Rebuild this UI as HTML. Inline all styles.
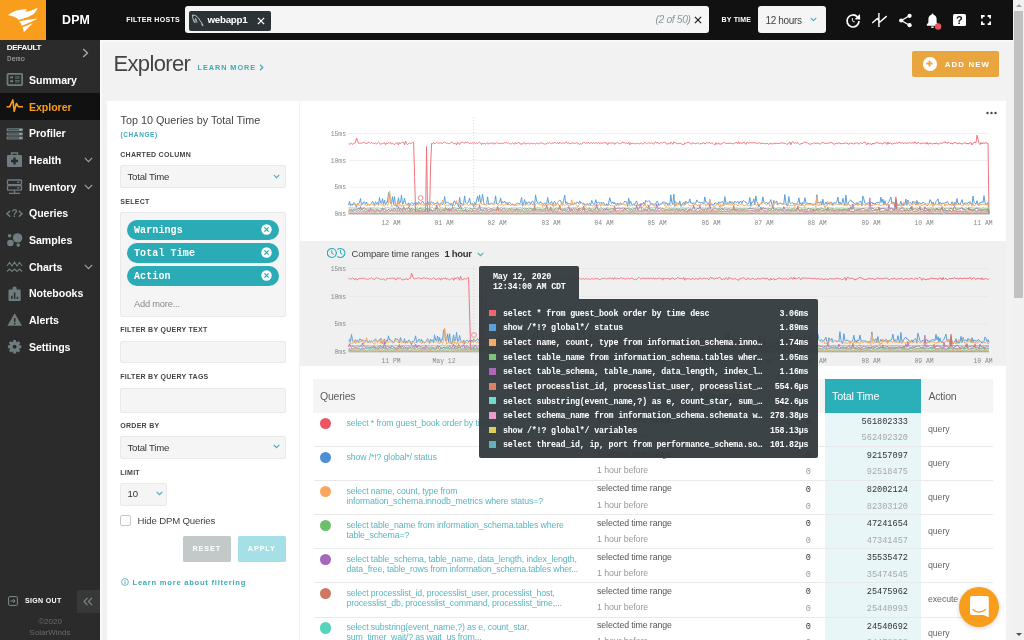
<!DOCTYPE html>
<html><head><meta charset="utf-8">
<style>
*{box-sizing:border-box;margin:0;padding:0}
html,body{width:1024px;height:640px;overflow:hidden;background:#f2f2f2;font-family:"Liberation Sans",sans-serif;color:#333}
div,span{white-space:nowrap}
.a{position:absolute}
#top{position:absolute;left:0;top:0;width:1013px;height:40px;background:#111}
.tl{position:absolute;color:#fff;font-weight:bold}
#side{position:absolute;left:0;top:40px;width:100px;height:600px;background:#2b2b2b}
.mi{position:absolute;left:0;width:100px;height:26.67px;color:#fff;font-weight:bold;font-size:10.6px;letter-spacing:-0.05px}
.mi span{position:absolute;left:29px;top:7.6px}
.mi svg{position:absolute;left:5px;top:4px}
.mi.act{background:#111;color:#f99d1c}
.lbl{position:absolute;left:120.3px;font-size:7px;font-weight:bold;letter-spacing:0.27px;color:#444}
.inp{position:absolute;left:120px;width:166px;background:#f5f5f5;border:1px solid #e9e9e9;border-radius:2px}
.pill{position:absolute;left:127px;width:152px;height:19.5px;border-radius:10px;background:#2aabb6;color:#fff;font-family:"Liberation Mono",monospace;font-weight:bold;font-size:10px;line-height:21px;padding-left:7px;letter-spacing:0.1px}
.m{font-family:"Liberation Mono",monospace}
.yl{position:absolute;font-family:"Liberation Mono",monospace;font-size:8px;color:#888;text-align:right;width:24px;transform:scaleX(0.8);transform-origin:100% 50%}
.xl{position:absolute;font-family:"Liberation Mono",monospace;font-size:8px;color:#888;text-align:center;width:40px;transform:scaleX(0.8)}
.q{position:absolute;left:346.5px;font-size:8.8px;line-height:10px;color:#5ab6c0;letter-spacing:-0.15px}
.t1{position:absolute;left:597px;font-size:8.8px;color:#555;letter-spacing:-0.1px}
.t2{position:absolute;left:597px;font-size:8.8px;color:#999;letter-spacing:-0.1px}
.n{position:absolute;font-family:"Liberation Mono",monospace;font-size:8.6px;text-align:right}
.tt{position:absolute;font-family:"Liberation Mono",monospace;font-weight:bold;font-size:8.3px;letter-spacing:-0.18px;color:#fff}
</style></head><body><div id="wrap" style="position:absolute;left:0;top:0;width:1024px;height:640px;overflow:hidden;will-change:transform;transform:translateZ(0)">

<div id="top">
<div class="a" style="left:0;top:0;width:45.5px;height:40px;background:#f99d1c"></div>
<svg class="a" style="left:0;top:0" width="46" height="40" viewBox="0 0 46 40">
<path fill="#fff" d="M7.8 15.3 C10.5 12.6 15 10.6 19 9.9 C21.5 9.4 24 9.2 26.9 9.3 L25.3 11.6 C28 11.6 30 11.1 32 10.2 C34.3 9.2 36.2 8.5 37.6 7.6 C37.2 9.6 36.2 11.3 35 12.6 C33.2 14.6 30.8 16 28.1 17 C25 18.2 22 19 18.7 20 C17.6 18.6 16.4 17.9 15 17.3 C12.6 16.3 10.5 15.6 7.8 15.3 Z"/>
<path fill="#fff" d="M19 21.2 C25 20.3 31 19.4 37.6 18.5 C36 19.7 34.3 20.5 32.5 21.3 C29 22.8 25.5 24.2 21.9 25.7 C21.2 24 20.2 22.5 19 21.2 Z"/>
<path fill="#fff" d="M22.5 27.2 C26 25.9 29.4 24.5 32.9 23 C30 26 27 29 23.8 32.3 C23.6 30.5 23.2 28.8 22.5 27.2 Z"/>
</svg>
<div class="tl" style="left:62px;top:13.1px;font-size:12.4px;letter-spacing:0.2px">DPM</div>
<div class="tl" style="left:126.3px;top:16.2px;font-size:7px;letter-spacing:0.3px">FILTER HOSTS</div>
<div class="a" style="left:185px;top:6.3px;width:523.5px;height:27.2px;background:#f5f5f5;border-radius:3px"></div>
<div class="a" style="left:189px;top:10.7px;width:81.5px;height:20px;background:#2b3337;border-radius:2px"></div>
<svg class="a" style="left:191px;top:13px" width="14" height="14" viewBox="0 0 14 14"><path fill="none" stroke="#ddd" stroke-width="0.85" d="M1.4 2.1C3.5 1.8 6 3 7.5 5.2C8.8 7.2 9.8 9 11.1 10.4L10.3 11L11.8 11.4L11.2 12.3L12.4 12.7M1.4 2.1C1.6 4.5 2.2 7 3.1 8.9L4.2 9.6C3.8 8 4 6.5 4.6 5.4C5.3 6.6 5.8 8 6 9.6"/></svg>
<div class="tl" style="left:207.5px;top:14.3px;font-size:9.8px;letter-spacing:-0.3px">webapp1</div>
<svg class="a" style="left:257.3px;top:17px" width="8" height="8" viewBox="0 0 9 9"><path stroke="#fff" stroke-width="1.5" d="M1 1L8 8M8 1L1 8"/></svg>
<div class="a" style="left:655.5px;top:13.9px;font-size:10.3px;font-style:italic;color:#8a9a9c;letter-spacing:-0.35px">(2 of 50)</div>
<svg class="a" style="left:694.2px;top:16.3px" width="8" height="8" viewBox="0 0 9 9"><path stroke="#222" stroke-width="1.4" d="M1 1L8 8M8 1L1 8"/></svg>
<div class="tl" style="left:721.5px;top:16px;font-size:7px;letter-spacing:0.2px">BY TIME</div>
<div class="a" style="left:757.8px;top:6.3px;width:68.2px;height:27.2px;background:#f5f5f5;border-radius:3px"></div>
<div class="a" style="left:765.5px;top:14.5px;font-size:10px;color:#444;letter-spacing:-0.35px">12 hours</div>
<svg class="a" style="left:810px;top:17.3px" width="7" height="5" viewBox="0 0 7 5"><path fill="none" stroke="#3bb3c0" stroke-width="1.1" d="M0.7 0.8L3.5 3.7L6.3 0.8"/></svg>
<svg class="a" style="left:845px;top:12.8px" width="16" height="16" viewBox="0 0 16 16"><path fill="none" stroke="#fff" stroke-width="1.7" d="M12.4 3.9 A6 6 0 1 0 14 8"/><path fill="#fff" d="M9.6 6.2L15.2 6.6L14.9 1Z"/><path fill="none" stroke="#ccc" stroke-width="1.1" d="M7.4 5V7.6L9.6 9.2"/></svg>
<svg class="a" style="left:871px;top:12px" width="17" height="16" viewBox="0 0 17 16"><path fill="none" stroke="#fff" stroke-width="1.4" d="M1.2 11.1L6.3 6.6L8.9 10L15.7 4.1M7.9 1V15"/></svg>
<svg class="a" style="left:898.3px;top:12.6px" width="15" height="15" viewBox="0 0 15 15"><path fill="none" stroke="#fff" stroke-width="1.3" d="M11.5 2.8L3.3 7.5L11.5 12.2"/><circle cx="11.6" cy="2.8" r="2.1" fill="#fff"/><circle cx="3.2" cy="7.5" r="2.1" fill="#fff"/><circle cx="11.6" cy="12.2" r="2.1" fill="#fff"/></svg>
<svg class="a" style="left:924px;top:10.7px" width="20" height="20" viewBox="0 0 20 20"><path fill="#fff" d="M8.5 2.4a0.9 0.9 0 0 1 0.9 0.9v0.5c1.9 0.5 3.2 2.1 3.2 4.2v3.6l1.6 1.8v1.4H2.8v-1.4l1.6-1.8V8c0-2.1 1.3-3.700 3.2-4.200v-0.5a0.900 0.900 0 0 1 0.900-0.900zM7 15.400h3a1.500 1.500 0 0 1-3 0z"/><circle cx="14.1" cy="15.500" r="3.200" fill="#ea5560"/></svg>
<div class="a" style="left:953.2px;top:14.2px;width:12.5px;height:12px;background:#fff;border-radius:1.5px"></div><div class="a" style="left:953.2px;top:13.6px;width:12.5px;text-align:center;font-size:11px;font-weight:bold;color:#111">?</div>
<svg class="a" style="left:980.9px;top:14.9px" width="10.2" height="10.2" viewBox="0 0 10.2 10.2"><path fill="none" stroke="#fff" stroke-width="1.9" d="M0.95 3.6V0.95H3.6M6.6 0.95H9.25V3.6M9.25 6.6V9.25H6.6M3.6 9.25H0.95V6.6"/></svg>
</div>
<div id="side">
<div class="a" style="left:6.8px;top:3px;font-size:8px;font-weight:bold;color:#fff;letter-spacing:-0.3px">DEFAULT</div>
<div class="a m" style="left:7px;top:14.5px;font-size:7.5px;color:#aaa">Demo</div>
<svg class="a" style="left:82px;top:8px" width="7" height="10" viewBox="0 0 7 10"><path fill="none" stroke="#aab4b6" stroke-width="1.2" d="M1.2 1L5.5 5L1.2 9"/></svg>
<div class="mi" style="top:26.33px"><svg width="19" height="19" viewBox="0 0 19 19"><rect x="2.5" y="3.8" width="14.6" height="11.3" rx="0.8" fill="none" stroke="#6f7d80" stroke-width="1.8"/><rect x="5.2" y="6.4" width="2.8" height="2" fill="#6f7d80"/><rect x="5.2" y="10.2" width="2.8" height="2" fill="#6f7d80"/><path stroke="#6f7d80" stroke-width="0.8" d="M10 6.8h4.6M10 8.2h4.6M10 10.6h4.6M10 12h4.6"/></svg><span>Summary</span></div>
<div class="mi act" style="top:53.00px"><svg width="19" height="19" viewBox="0 0 19 19"><path fill="none" stroke="#f99d1c" stroke-width="1.6" stroke-linejoin="round" d="M1.6 9.7H4.8L7.9 2.9L9.2 14.3L11.4 6.4L13.4 9.7H18"/></svg><span>Explorer</span></div>
<div class="mi" style="top:79.67px"><svg width="19" height="19" viewBox="0 0 19 19"><rect x="1.6" y="4.2" width="16.4" height="3" rx="0.6" fill="#6f7d80"/><rect x="1.6" y="8.4" width="16.4" height="3" rx="0.6" fill="#6f7d80"/><rect x="1.6" y="12.5" width="16.4" height="3" rx="0.6" fill="#6f7d80"/><path stroke="#3a4446" stroke-width="0.9" d="M3 5.7h11M3 9.9h11M3 14h11"/><path stroke="#cfd6d7" stroke-width="0.9" d="M14.5 5.7h2M14.5 9.9h2M14.5 14h2"/></svg><span>Profiler</span></div>
<div class="mi" style="top:106.34px"><svg width="19" height="19" viewBox="0 0 19 19"><path fill="none" stroke="#6f7d80" stroke-width="1.3" d="M6.5 5V3h6v2"/><rect x="2" y="5" width="15" height="12" rx="1.2" fill="#6f7d80"/><path stroke="#2b2b2b" stroke-width="2.4" d="M9.5 7.5v7M6 11h7"/></svg><span>Health</span><svg style="left:84px;top:10.5px" width="9" height="6" viewBox="0 0 9 6"><path fill="none" stroke="#9aa6a8" stroke-width="1.1" d="M0.8 0.8L4.5 4.6L8.2 0.8"/></svg></div>
<div class="mi" style="top:133.01px"><svg width="19" height="19" viewBox="0 0 19 19"><rect x="2.5" y="3" width="14" height="4.6" rx="0.8" fill="none" stroke="#6f7d80" stroke-width="1.3"/><rect x="2.5" y="8.6" width="14" height="4.6" rx="0.8" fill="none" stroke="#6f7d80" stroke-width="1.3"/><path stroke="#6f7d80" stroke-width="1.3" d="M9.5 13.5v2.5M4 16.3h11M12 5.3h2.5M12 10.9h2.5"/></svg><span>Inventory</span><svg style="left:84px;top:10.5px" width="9" height="6" viewBox="0 0 9 6"><path fill="none" stroke="#9aa6a8" stroke-width="1.1" d="M0.8 0.8L4.5 4.6L8.2 0.8"/></svg></div>
<div class="mi" style="top:159.68px"><svg width="19" height="19" viewBox="0 0 19 19"><path fill="none" stroke="#6f7d80" stroke-width="1.5" d="M5.2 6.8L2 9.8L5.2 12.8M13.8 6.8L17 9.8L13.8 12.8"/><text x="9.5" y="13.3" font-family="Liberation Sans" font-weight="bold" font-size="10" fill="#6f7d80" text-anchor="middle">?</text></svg><span>Queries</span></div>
<div class="mi" style="top:186.35px"><svg width="19" height="19" viewBox="0 0 19 19"><circle cx="12.6" cy="7.9" r="4.7" fill="#6f7d80"/><circle cx="5.4" cy="13" r="3.3" fill="#6f7d80"/><circle cx="4.6" cy="5.8" r="1.8" fill="#6f7d80"/><circle cx="13.2" cy="15.1" r="1.8" fill="#6f7d80"/></svg><span>Samples</span></div>
<div class="mi" style="top:213.02px"><svg width="19" height="19" viewBox="0 0 19 19"><path fill="none" stroke="#6f7d80" stroke-width="1.1" d="M2 9L4.5 5.5L7 9L9.5 5L12 9L14.5 5.5L17 9M2 14.5L4.5 12L7 14.5L9.5 12L12 14.5L14.5 12L17 14.5"/></svg><span>Charts</span><svg style="left:84px;top:10.5px" width="9" height="6" viewBox="0 0 9 6"><path fill="none" stroke="#9aa6a8" stroke-width="1.1" d="M0.8 0.8L4.5 4.6L8.2 0.8"/></svg></div>
<div class="mi" style="top:239.69px"><svg width="19" height="19" viewBox="0 0 19 19"><path fill="#6f7d80" d="M4.4 5.4h3.2v-1.300a2 1.600 0 0 1 4 0v1.300h3.200a0.900 0.900 0 0 1 0.900 0.900v9.700a0.900 0.900 0 0 1-0.900 0.900h-10.400a0.900 0.900 0 0 1-0.900-0.900v-9.700a0.900 0.900 0 0 1 0.900-0.900z"/><path stroke="#2b2b2b" stroke-width="1.5" d="M6.800 15v-3.300M9.600 15v-6.500M12.400 15v-2.300"/></svg><span>Notebooks</span></div>
<div class="mi" style="top:266.36px"><svg width="19" height="19" viewBox="0 0 19 19"><path fill="#6f7d80" d="M9.7 3.2L17 15.7H2.4Z"/><path stroke="#2b2b2b" stroke-width="1.5" d="M9.7 8v4M9.7 13v1.5"/></svg><span>Alerts</span></div>
<div class="mi" style="top:293.03px"><svg width="19" height="19" viewBox="0 0 19 19"><circle cx="9.6" cy="9.7" r="3.6" fill="none" stroke="#6f7d80" stroke-width="3.2"/><path stroke="#6f7d80" stroke-width="2.9" d="M14.20 9.70L16.30 9.70M12.85 12.95L14.34 14.44M9.60 14.30L9.60 16.40M6.35 12.95L4.86 14.44M5.00 9.70L2.90 9.70M6.35 6.45L4.86 4.96M9.60 5.10L9.60 3.00M12.85 6.45L14.34 4.96"/></svg><span>Settings</span></div>
<svg class="a" style="left:8px;top:556px" width="10" height="10" viewBox="0 0 10 10"><rect x="0.6" y="0.6" width="8.8" height="8.8" rx="1" fill="none" stroke="#8a9698" stroke-width="0.9"/><path fill="none" stroke="#8a9698" stroke-width="0.9" d="M2.5 5H7M5.3 3.2L7 5L5.3 6.8"/></svg>
<div class="a" style="left:25px;top:557px;font-size:7px;font-weight:bold;color:#fff;letter-spacing:0.35px">SIGN OUT</div>
<div class="a" style="left:76.5px;top:549.5px;width:23.5px;height:23.5px;background:#383838"></div>
<svg class="a" style="left:83px;top:556.5px" width="10" height="9" viewBox="0 0 10 9"><path fill="none" stroke="#7d8a8c" stroke-width="1.1" d="M4.5 0.8L1 4.5L4.5 8.2M9 0.8L5.5 4.5L9 8.2"/></svg>
<div class="a" style="left:0;top:575.7px;width:100px;text-align:center;font-size:8px;color:#6a6a6a;line-height:11px">©2020<br>SolarWinds</div>
</div>
<div class="a" style="left:100px;top:40px;width:913px;height:1.6px;background:#f9f9f9"></div><div class="a" style="left:100px;top:40px;width:1.6px;height:600px;background:#f9f9f9"></div>
<div class="a" style="left:113.5px;top:50.7px;font-size:22px;color:#444;letter-spacing:-0.65px">Explorer</div>
<div class="a" style="left:197.5px;top:62.8px;font-size:7.3px;font-weight:bold;color:#3fa9b5;letter-spacing:0.95px">LEARN MORE</div>
<svg class="a" style="left:259px;top:63.8px" width="5" height="7" viewBox="0 0 5 7"><path fill="none" stroke="#3fa9b5" stroke-width="1.2" d="M1 0.8L3.8 3.5L1 6.2"/></svg>
<div class="a" style="left:912px;top:50.7px;width:87px;height:26.6px;background:#eaa63e;border-radius:2px"></div>
<div class="a" style="left:923.1px;top:57.1px;width:13.6px;height:13.6px;border-radius:50%;background:#fff"></div>
<svg class="a" style="left:926.4px;top:60.4px" width="7" height="7" viewBox="0 0 7 7"><path stroke="#eaa63e" stroke-width="1.8" d="M3.5 0.5V6.5M0.5 3.5H6.5"/></svg>
<div class="a" style="left:944.8px;top:59.8px;font-size:7.8px;font-weight:bold;color:#fff;letter-spacing:1.15px">ADD NEW</div>
<div class="a" style="left:107px;top:101px;width:192px;height:539px;background:#fff"></div>
<div class="a" style="left:120.5px;top:113.7px;font-size:10.8px;color:#444;letter-spacing:0px">Top 10 Queries by Total Time</div>
<div class="a" style="left:120.5px;top:131px;font-size:6.5px;font-weight:bold;color:#3fa9b5;letter-spacing:0.6px">(CHANGE)</div>
<div class="lbl" style="top:151px">CHARTED COLUMN</div>
<div class="inp" style="top:165.2px;height:23.3px"></div>
<div class="a" style="left:127.5px;top:171px;font-size:9.6px;color:#333;letter-spacing:-0.2px">Total Time</div>
<svg class="a" style="left:273px;top:173.5px" width="7" height="5" viewBox="0 0 7 5"><path fill="none" stroke="#3bb3c0" stroke-width="1.1" d="M0.7 0.8L3.5 3.7L6.3 0.8"/></svg>
<div class="lbl" style="top:197.5px">SELECT</div>
<div class="inp" style="top:211.6px;height:105.4px"></div>
<div class="pill" style="top:220.0px">Warnings</div>
<svg class="a" style="left:261px;top:224.0px" width="11" height="11" viewBox="0 0 11 11"><circle cx="5.5" cy="5.5" r="5.2" fill="#fff"/><path stroke="#2aabb6" stroke-width="1.3" d="M3.4 3.4L7.6 7.6M7.6 3.4L3.4 7.6"/></svg>
<div class="pill" style="top:243.2px">Total Time</div>
<svg class="a" style="left:261px;top:247.2px" width="11" height="11" viewBox="0 0 11 11"><circle cx="5.5" cy="5.5" r="5.2" fill="#fff"/><path stroke="#2aabb6" stroke-width="1.3" d="M3.4 3.4L7.6 7.6M7.6 3.4L3.4 7.6"/></svg>
<div class="pill" style="top:266.4px">Action</div>
<svg class="a" style="left:261px;top:270.4px" width="11" height="11" viewBox="0 0 11 11"><circle cx="5.5" cy="5.5" r="5.2" fill="#fff"/><path stroke="#2aabb6" stroke-width="1.3" d="M3.4 3.4L7.6 7.6M7.6 3.4L3.4 7.6"/></svg>
<div class="a" style="left:134px;top:298.5px;font-size:9.3px;color:#8a8a8a;letter-spacing:-0.2px">Add more...</div>
<div class="lbl" style="top:325.5px">FILTER BY QUERY TEXT</div>
<div class="inp" style="top:340.5px;height:22.5px"></div>
<div class="lbl" style="top:373px">FILTER BY QUERY TAGS</div>
<div class="inp" style="top:388px;height:24.5px"></div>
<div class="lbl" style="top:421.5px">ORDER BY</div>
<div class="inp" style="top:436px;height:23px"></div>
<div class="a" style="left:127.5px;top:441.6px;font-size:9.6px;color:#333;letter-spacing:-0.2px">Total Time</div>
<svg class="a" style="left:273px;top:444px" width="7" height="5" viewBox="0 0 7 5"><path fill="none" stroke="#3bb3c0" stroke-width="1.1" d="M0.7 0.8L3.5 3.7L6.3 0.8"/></svg>
<div class="lbl" style="top:468.5px">LIMIT</div>
<div class="inp" style="top:483px;height:23px;width:47px"></div>
<div class="a" style="left:127.5px;top:488.3px;font-size:9.6px;color:#333">10</div>
<svg class="a" style="left:155.5px;top:491px" width="7" height="5" viewBox="0 0 7 5"><path fill="none" stroke="#3bb3c0" stroke-width="1.1" d="M0.7 0.8L3.5 3.7L6.3 0.8"/></svg>
<div class="a" style="left:120px;top:515px;width:10.5px;height:10.5px;background:#fff;border:1px solid #c6c6c6;border-radius:2px"></div>
<div class="a" style="left:137.5px;top:514.5px;font-size:9.6px;color:#444;letter-spacing:-0.15px">Hide DPM Queries</div>
<div class="a" style="left:183px;top:535.6px;width:47.5px;height:26.2px;background:#c3c8c9;border-radius:1.5px;color:#fff;font-size:7.2px;font-weight:bold;letter-spacing:0.9px;text-align:center;line-height:26px">RESET</div>
<div class="a" style="left:237.5px;top:535.6px;width:48.5px;height:26.2px;background:#a4e0e6;border-radius:1.5px;color:#fff;font-size:7.2px;font-weight:bold;letter-spacing:0.9px;text-align:center;line-height:26px">APPLY</div>
<svg class="a" style="left:120.5px;top:578px" width="8" height="8" viewBox="0 0 8 8"><circle cx="4" cy="4" r="3.4" fill="none" stroke="#3fa9b5" stroke-width="0.8"/><path stroke="#3fa9b5" stroke-width="0.9" d="M4 3.4V6M4 2V2.8"/></svg>
<div class="a" style="left:132.5px;top:577.7px;font-size:7.6px;font-weight:bold;color:#3fa9b5;letter-spacing:0.75px">Learn more about filtering</div>
<div class="a" style="left:300px;top:241.2px;width:706px;height:124.3px;background:#f0f0f0"></div>
<div class="a" style="left:300px;top:101px;width:706px;height:140.2px;background:#fff"></div>
<div class="a" style="left:300px;top:365.5px;width:706px;height:275px;background:#fff"></div>
<svg class="a" style="left:986px;top:111px" width="11" height="4" viewBox="0 0 11 4"><circle cx="1.5" cy="2" r="1.2" fill="#444"/><circle cx="5.5" cy="2" r="1.2" fill="#444"/><circle cx="9.5" cy="2" r="1.2" fill="#444"/></svg>
<svg class="a" style="left:0;top:0" width="1013" height="380" viewBox="0 0 1013 380">
<path stroke="#f0f0f0" stroke-width="1" d="M348.5 187.2H989.0"/>
<path stroke="#f0f0f0" stroke-width="1" d="M348.5 160.4H989.0"/>
<path stroke="#f0f0f0" stroke-width="1" d="M348.5 133.6H989.0"/>
<path stroke="#d9d9d9" stroke-width="1" d="M348.5 214.5H989.0"/>
<path stroke="#d6d6d6" stroke-width="1" stroke-dasharray="1,2" d="M473.7 117V214.0"/>
<polyline fill="none" stroke="#f0757d" stroke-width="1" stroke-linejoin="round" points="348.5,143.9 349.5,144.0 350.5,143.9 351.5,143.0 352.5,144.5 353.5,143.5 354.5,143.1 355.5,142.8 356.5,137.9 357.5,140.6 358.5,143.2 359.5,143.3 360.5,143.1 361.5,143.0 362.5,142.9 363.5,142.4 364.5,142.4 365.5,143.5 366.5,143.2 367.5,143.4 368.5,142.0 369.5,142.5 370.5,143.5 371.5,142.5 372.5,143.1 373.5,143.4 374.5,143.7 375.5,143.1 376.5,144.0 377.5,143.0 378.5,142.1 379.5,142.8 380.5,144.4 381.5,143.8 382.5,143.3 383.5,143.3 384.5,142.8 385.5,144.7 386.5,142.8 387.5,143.5 388.5,142.9 389.5,143.0 390.5,142.4 391.5,144.2 392.5,143.1 393.5,144.0 394.5,144.4 395.5,143.6 396.5,143.2 397.5,142.7 398.5,144.9 399.5,142.3 400.5,143.6 401.5,142.4 402.5,142.1 403.5,142.4 404.5,144.8 405.5,141.0 406.5,143.4 407.5,144.7 408.5,143.5 409.5,143.0 410.5,143.6 411.5,143.2 412.6,142.4 413.6,142.3 414.6,176.5 415.6,212.0 416.6,211.8 417.6,211.7 418.6,211.8 419.6,211.7 420.6,211.3 421.6,212.0 422.6,212.0 423.6,211.6 424.6,211.6 425.6,212.0 426.6,146.5 427.6,212.1 428.6,212.0 429.6,211.7 430.6,165.8 431.6,143.5 432.6,143.9 433.6,142.3 434.6,143.6 435.6,143.3 436.6,142.4 437.6,143.0 438.6,143.0 439.6,143.2 440.6,143.0 441.6,143.0 442.6,143.5 443.6,142.4 444.6,142.2 445.6,142.6 446.6,143.4 447.6,143.1 448.6,143.6 449.6,143.5 450.6,142.9 451.6,142.4 452.6,142.3 453.6,143.8 454.6,143.8 455.6,142.8 456.6,144.9 457.6,142.2 458.6,143.0 459.6,144.5 460.6,142.6 461.6,142.4 462.6,142.1 463.6,143.1 464.6,143.1 465.6,141.9 466.6,142.6 467.6,142.2 468.6,142.6 469.6,143.8 470.6,143.1 471.6,143.3 472.6,142.9 473.6,143.0 474.6,143.0 475.6,143.5 476.6,142.7 477.6,143.7 478.6,142.6 479.6,142.2 480.6,143.1 481.6,144.7 482.6,143.0 483.6,143.9 484.6,142.9 485.6,144.2 486.6,143.3 487.6,142.8 488.6,144.1 489.6,143.4 490.6,143.1 491.6,143.3 492.6,143.7 493.6,142.5 494.6,144.3 495.6,143.2 496.6,142.7 497.6,143.7 498.6,143.1 499.6,143.7 500.6,143.4 501.6,143.3 502.6,143.2 503.6,143.7 504.6,142.5 505.6,142.7 506.6,142.9 507.6,143.4 508.6,142.8 509.6,143.2 510.6,144.2 511.6,143.7 512.6,142.9 513.6,143.4 514.6,144.2 515.6,142.5 516.6,143.8 517.6,142.7 518.6,142.6 519.6,142.8 520.6,144.4 521.6,143.7 522.6,144.2 523.6,142.8 524.6,142.8 525.6,144.1 526.6,143.6 527.6,143.3 528.6,143.2 529.6,144.0 530.6,143.3 531.6,143.3 532.6,143.7 533.6,143.3 534.6,143.7 535.6,143.9 536.6,143.2 537.6,143.2 538.6,144.1 539.6,143.0 540.6,142.9 541.7,143.3 542.7,143.3 543.7,143.7 544.7,144.1 545.7,144.0 546.7,143.3 547.7,142.9 548.7,143.5 549.7,142.5 550.7,143.2 551.7,143.7 552.7,143.1 553.7,143.0 554.7,142.4 555.7,142.9 556.7,143.3 557.7,142.5 558.7,143.9 559.7,142.1 560.7,143.2 561.7,143.4 562.7,142.9 563.7,143.2 564.7,143.3 565.7,142.2 566.7,142.2 567.7,143.4 568.7,142.6 569.7,143.8 570.7,143.6 571.7,143.0 572.7,143.2 573.7,142.8 574.7,143.4 575.7,143.0 576.7,142.7 577.7,142.9 578.7,144.1 579.7,144.2 580.7,143.6 581.7,144.3 582.7,142.9 583.7,141.8 584.7,142.8 585.7,143.5 586.7,142.8 587.7,143.3 588.7,142.3 589.7,143.6 590.7,143.0 591.7,142.6 592.7,143.7 593.7,142.5 594.7,143.3 595.7,142.8 596.7,142.9 597.7,143.3 598.7,142.4 599.7,143.8 600.7,142.9 601.7,143.4 602.7,143.1 603.7,142.7 604.7,142.7 605.7,143.1 606.7,142.7 607.7,144.8 608.7,142.7 609.7,143.1 610.7,143.2 611.7,143.0 612.7,143.1 613.7,142.7 614.7,144.4 615.7,143.0 616.7,143.0 617.7,142.3 618.7,143.6 619.7,144.0 620.7,143.0 621.7,143.1 622.7,141.8 623.7,142.9 624.7,142.9 625.7,143.1 626.7,143.1 627.7,143.6 628.7,142.1 629.7,144.8 630.7,142.9 631.7,143.7 632.7,143.2 633.7,143.4 634.7,143.8 635.7,143.6 636.7,143.8 637.7,142.8 638.7,143.5 639.7,144.1 640.7,142.8 641.7,143.3 642.7,144.0 643.7,143.7 644.7,142.1 645.7,143.2 646.7,143.8 647.7,143.1 648.7,142.8 649.7,142.9 650.7,143.4 651.7,142.9 652.7,143.3 653.7,144.3 654.7,142.4 655.7,141.8 656.7,143.3 657.7,142.3 658.7,143.7 659.7,143.7 660.7,142.8 661.7,142.7 662.7,143.2 663.7,142.1 664.7,142.1 665.7,142.7 666.7,144.3 667.7,143.9 668.8,143.1 669.8,144.2 670.8,142.2 671.8,142.8 672.8,144.3 673.8,141.9 674.8,142.7 675.8,142.8 676.8,143.6 677.8,143.6 678.8,143.6 679.8,143.3 680.8,143.2 681.8,144.3 682.8,144.4 683.8,144.8 684.8,143.0 685.8,143.3 686.8,142.6 687.8,142.8 688.8,142.2 689.8,143.1 690.8,144.1 691.8,144.0 692.8,142.4 693.8,143.2 694.8,143.7 695.8,143.8 696.8,143.4 697.8,142.7 698.8,143.3 699.8,144.3 700.8,143.2 701.8,144.0 702.8,142.8 703.8,142.7 704.8,144.0 705.8,143.5 706.8,142.4 707.8,143.1 708.8,142.8 709.8,142.6 710.8,143.8 711.8,142.5 712.8,143.3 713.8,144.4 714.8,144.9 715.8,142.7 716.8,144.4 717.8,143.3 718.8,142.9 719.8,144.5 720.8,144.0 721.8,143.7 722.8,143.1 723.8,142.6 724.8,142.7 725.8,143.5 726.8,143.0 727.8,144.0 728.8,142.9 729.8,143.4 730.8,143.6 731.8,143.0 732.8,144.0 733.8,143.9 734.8,142.8 735.8,142.7 736.8,142.4 737.8,143.8 738.8,141.8 739.8,143.7 740.8,142.7 741.8,143.5 742.8,142.9 743.8,141.9 744.8,143.2 745.8,144.4 746.8,142.5 747.8,142.4 748.8,143.2 749.8,142.5 750.8,142.8 751.8,142.9 752.8,142.8 753.8,142.7 754.8,142.8 755.8,143.1 756.8,142.9 757.8,143.5 758.8,143.2 759.8,142.5 760.8,143.8 761.8,143.1 762.8,143.7 763.8,143.1 764.8,143.6 765.8,143.9 766.8,143.3 767.8,143.5 768.8,144.6 769.8,143.2 770.8,143.4 771.8,143.9 772.8,143.7 773.8,144.0 774.8,142.8 775.8,143.9 776.8,143.0 777.8,143.7 778.8,143.2 779.8,143.6 780.8,143.1 781.8,142.8 782.8,142.8 783.8,143.4 784.8,143.3 785.8,143.4 786.8,144.4 787.8,143.9 788.8,143.3 789.8,141.9 790.8,144.9 791.8,142.6 792.8,141.5 793.8,142.9 794.8,143.4 795.8,142.7 796.8,143.0 797.9,142.8 798.9,143.6 799.9,144.7 800.9,143.3 801.9,143.8 802.9,143.3 803.9,142.4 804.9,142.0 805.9,142.7 806.9,142.3 807.9,143.6 808.9,143.7 809.9,144.4 810.9,143.9 811.9,143.7 812.9,143.7 813.9,142.4 814.9,143.3 815.9,143.6 816.9,143.1 817.9,143.0 818.9,143.7 819.9,144.1 820.9,143.6 821.9,142.7 822.9,142.5 823.9,143.0 824.9,143.5 825.9,143.2 826.9,143.2 827.9,143.5 828.9,142.9 829.9,143.0 830.9,142.4 831.9,142.8 832.9,143.4 833.9,144.1 834.9,144.2 835.9,143.3 836.9,143.2 837.9,143.8 838.9,142.5 839.9,143.3 840.9,143.7 841.9,143.9 842.9,143.4 843.9,143.2 844.9,143.3 845.9,143.0 846.9,142.9 847.9,144.0 848.9,144.2 849.9,143.3 850.9,143.1 851.9,143.3 852.9,143.3 853.9,144.3 854.9,143.0 855.9,142.9 856.9,143.0 857.9,143.3 858.9,144.2 859.9,143.3 860.9,142.4 861.9,143.7 862.9,143.3 863.9,142.3 864.9,142.0 865.9,143.3 866.9,144.8 867.9,142.8 868.9,143.6 869.9,143.9 870.9,144.0 871.9,144.5 872.9,143.0 873.9,144.2 874.9,142.9 875.9,143.0 876.9,142.4 877.9,143.2 878.9,143.1 879.9,143.4 880.9,143.0 881.9,143.6 882.9,144.1 883.9,142.5 884.9,142.9 885.9,142.7 886.9,144.5 887.9,141.9 888.9,144.0 889.9,143.1 890.9,143.1 891.9,144.0 892.9,144.1 893.9,143.0 894.9,143.1 895.9,143.5 896.9,142.6 897.9,143.5 898.9,142.2 899.9,142.5 900.9,143.4 901.9,142.6 902.9,143.1 903.9,143.8 904.9,142.4 905.9,143.1 906.9,143.5 907.9,142.8 908.9,143.2 909.9,142.5 910.9,143.2 911.9,142.9 912.9,142.6 913.9,143.4 914.9,141.7 915.9,143.5 916.9,144.0 917.9,142.3 918.9,142.7 919.9,143.7 920.9,143.7 921.9,143.0 922.9,143.4 923.9,143.1 924.9,142.8 926.0,144.2 927.0,142.3 928.0,144.3 929.0,143.5 930.0,143.6 931.0,142.8 932.0,143.8 933.0,144.1 934.0,143.1 935.0,144.1 936.0,142.9 937.0,143.6 938.0,143.6 939.0,144.4 940.0,143.2 941.0,142.7 942.0,143.4 943.0,142.9 944.0,141.9 945.0,142.3 946.0,142.1 947.0,143.4 948.0,142.9 949.0,142.4 950.0,143.4 951.0,143.1 952.0,143.5 953.0,144.0 954.0,142.7 955.0,142.6 956.0,142.7 957.0,143.6 958.0,143.7 959.0,143.0 960.0,143.1 961.0,144.2 962.0,143.7 963.0,143.8 964.0,142.7 965.0,142.9 966.0,143.6 967.0,143.6 968.0,143.7 969.0,143.7 970.0,142.9 971.0,142.4 972.0,145.0 973.0,143.1 974.0,142.7 975.0,142.3 976.0,142.6 977.0,135.2 978.0,139.0 979.0,143.3 980.0,144.6 981.0,142.4 982.0,144.1 983.0,142.6 984.0,143.4 985.0,143.1 986.0,142.6 987.0,143.2 988.0,143.6 989.0,214.0"/><polyline fill="none" stroke="#5b9fdb" stroke-width="1" stroke-linejoin="round" points="348.5,205.0 349.5,201.3 350.5,205.8 351.5,203.9 352.5,205.1 353.5,202.8 354.5,202.9 355.5,204.8 356.5,207.2 357.5,203.7 358.5,204.1 359.5,202.5 360.5,198.5 361.5,205.3 362.5,204.0 363.5,201.9 364.5,201.9 365.5,204.4 366.5,202.0 367.5,204.5 368.5,204.1 369.5,205.3 370.5,204.3 371.5,203.2 372.5,201.3 373.5,203.0 374.5,205.2 375.5,201.7 376.5,203.6 377.5,202.4 378.5,205.3 379.5,197.6 380.5,202.9 381.5,203.4 382.5,198.7 383.5,204.3 384.5,200.1 385.5,205.0 386.5,202.0 387.5,202.3 388.5,192.7 389.5,195.6 390.5,203.4 391.5,203.4 392.5,196.6 393.5,204.4 394.5,196.5 395.5,205.3 396.5,206.6 397.5,202.8 398.5,197.7 399.5,203.7 400.5,202.5 401.5,195.1 402.5,204.0 403.5,203.5 404.5,198.1 405.5,202.8 406.5,204.7 407.5,205.0 408.5,202.8 409.5,206.7 410.5,203.7 411.5,203.1 412.6,203.0 413.6,204.6 414.6,202.7 415.6,205.1 416.6,202.6 417.6,204.4 418.6,201.6 419.6,202.6 420.6,203.9 421.6,202.7 422.6,201.1 423.6,202.9 424.6,204.5 425.6,204.0 426.6,204.7 427.6,201.2 428.6,203.3 429.6,204.4 430.6,203.4 431.6,201.7 432.6,203.3 433.6,202.6 434.6,204.1 435.6,203.4 436.6,203.4 437.6,201.8 438.6,205.1 439.6,203.8 440.6,203.2 441.6,202.8 442.6,204.8 443.6,203.7 444.6,196.5 445.6,203.6 446.6,202.5 447.6,202.0 448.6,203.2 449.6,203.5 450.6,205.3 451.6,203.4 452.6,206.4 453.6,202.1 454.6,200.7 455.6,203.8 456.6,203.2 457.6,203.3 458.6,206.7 459.6,197.3 460.6,204.1 461.6,203.1 462.6,205.3 463.6,204.3 464.6,195.9 465.6,202.6 466.6,203.5 467.6,203.2 468.6,201.2 469.6,198.0 470.6,204.0 471.6,204.1 472.6,203.4 473.6,206.7 474.6,202.5 475.6,204.8 476.6,200.3 477.6,196.3 478.6,201.4 479.6,194.9 480.6,203.0 481.6,200.5 482.6,194.2 483.6,202.4 484.6,204.6 485.6,204.6 486.6,203.4 487.6,196.8 488.6,204.3 489.6,203.8 490.6,204.2 491.6,203.1 492.6,204.0 493.6,202.8 494.6,203.0 495.6,195.8 496.6,204.0 497.6,204.4 498.6,203.6 499.6,202.6 500.6,197.9 501.6,203.6 502.6,201.5 503.6,202.8 504.6,201.1 505.6,203.3 506.6,202.7 507.6,205.0 508.6,202.7 509.6,202.4 510.6,203.3 511.6,204.8 512.6,204.8 513.6,204.5 514.6,205.1 515.6,204.9 516.6,203.4 517.6,203.1 518.6,203.6 519.6,204.0 520.6,202.1 521.6,197.5 522.6,206.2 523.6,203.2 524.6,199.5 525.6,204.7 526.6,201.9 527.6,203.5 528.6,202.0 529.6,202.1 530.6,204.5 531.6,201.6 532.6,201.0 533.6,202.5 534.6,205.2 535.6,194.9 536.6,201.1 537.6,202.7 538.6,203.0 539.6,203.4 540.6,201.7 541.7,203.3 542.7,203.7 543.7,204.1 544.7,202.9 545.7,203.4 546.7,203.7 547.7,197.5 548.7,203.1 549.7,204.1 550.7,202.3 551.7,201.4 552.7,205.8 553.7,202.3 554.7,201.4 555.7,204.4 556.7,204.3 557.7,202.3 558.7,201.4 559.7,200.1 560.7,200.5 561.7,204.4 562.7,204.4 563.7,200.5 564.7,195.0 565.7,203.6 566.7,201.8 567.7,204.3 568.7,203.3 569.7,203.8 570.7,204.0 571.7,204.5 572.7,204.3 573.7,204.3 574.7,202.5 575.7,203.9 576.7,202.2 577.7,202.3 578.7,203.7 579.7,200.9 580.7,202.8 581.7,202.7 582.7,203.5 583.7,203.0 584.7,204.9 585.7,204.7 586.7,203.9 587.7,205.0 588.7,204.7 589.7,203.3 590.7,204.9 591.7,200.4 592.7,202.9 593.7,204.3 594.7,204.4 595.7,199.7 596.7,203.3 597.7,203.1 598.7,202.3 599.7,203.0 600.7,202.8 601.7,202.9 602.7,202.9 603.7,202.5 604.7,205.5 605.7,205.3 606.7,203.7 607.7,205.8 608.7,203.1 609.7,197.7 610.7,201.3 611.7,203.5 612.7,201.8 613.7,204.0 614.7,202.3 615.7,204.9 616.7,205.6 617.7,203.0 618.7,204.8 619.7,204.0 620.7,202.6 621.7,204.8 622.7,203.8 623.7,202.8 624.7,201.0 625.7,202.0 626.7,201.8 627.7,206.4 628.7,198.2 629.7,203.7 630.7,201.5 631.7,204.7 632.7,205.2 633.7,203.7 634.7,204.7 635.7,202.1 636.7,200.9 637.7,205.0 638.7,205.2 639.7,204.2 640.7,205.0 641.7,203.4 642.7,204.5 643.7,202.2 644.7,205.1 645.7,200.2 646.7,201.4 647.7,201.7 648.7,200.7 649.7,201.1 650.7,205.1 651.7,203.7 652.7,204.8 653.7,204.9 654.7,203.8 655.7,203.8 656.7,201.5 657.7,201.6 658.7,205.3 659.7,204.6 660.7,204.5 661.7,203.9 662.7,201.8 663.7,202.2 664.7,202.0 665.7,204.2 666.7,202.7 667.7,205.1 668.8,203.4 669.8,204.7 670.8,194.8 671.8,202.6 672.8,204.4 673.8,194.2 674.8,206.5 675.8,205.2 676.8,203.5 677.8,203.1 678.8,204.7 679.8,200.9 680.8,206.3 681.8,205.6 682.8,203.5 683.8,202.2 684.8,204.5 685.8,201.0 686.8,203.5 687.8,202.7 688.8,202.5 689.8,198.9 690.8,203.4 691.8,202.7 692.8,204.1 693.8,202.7 694.8,203.5 695.8,203.2 696.8,199.9 697.8,201.8 698.8,202.5 699.8,202.5 700.8,202.9 701.8,202.5 702.8,202.7 703.8,203.8 704.8,196.9 705.8,202.1 706.8,202.1 707.8,204.6 708.8,204.3 709.8,199.5 710.8,204.6 711.8,203.8 712.8,204.5 713.8,205.0 714.8,202.8 715.8,203.1 716.8,203.9 717.8,204.1 718.8,201.8 719.8,203.6 720.8,202.1 721.8,202.0 722.8,201.6 723.8,204.8 724.8,196.6 725.8,202.8 726.8,204.4 727.8,202.4 728.8,203.5 729.8,201.0 730.8,203.3 731.8,202.9 732.8,202.2 733.8,203.9 734.8,201.1 735.8,202.3 736.8,202.5 737.8,201.2 738.8,203.6 739.8,202.1 740.8,201.0 741.8,203.5 742.8,201.0 743.8,200.6 744.8,201.7 745.8,202.0 746.8,203.5 747.8,204.1 748.8,203.6 749.8,197.4 750.8,206.3 751.8,202.1 752.8,202.6 753.8,198.8 754.8,205.0 755.8,195.9 756.8,201.5 757.8,203.0 758.8,206.9 759.8,204.6 760.8,203.5 761.8,203.1 762.8,196.8 763.8,202.4 764.8,203.5 765.8,202.6 766.8,202.4 767.8,204.0 768.8,202.5 769.8,202.2 770.8,199.6 771.8,204.2 772.8,205.8 773.8,200.4 774.8,201.6 775.8,202.8 776.8,201.0 777.8,204.9 778.8,204.0 779.8,202.9 780.8,203.5 781.8,204.1 782.8,204.1 783.8,203.8 784.8,194.5 785.8,202.0 786.8,205.7 787.8,205.8 788.8,196.5 789.8,202.8 790.8,203.8 791.8,202.7 792.8,202.8 793.8,203.9 794.8,203.6 795.8,204.7 796.8,204.1 797.9,202.4 798.9,197.9 799.9,204.4 800.9,202.7 801.9,205.4 802.9,202.4 803.9,203.5 804.9,197.7 805.9,202.6 806.9,203.2 807.9,203.3 808.9,203.6 809.9,203.6 810.9,203.2 811.9,204.9 812.9,204.9 813.9,203.7 814.9,204.8 815.9,203.0 816.9,194.7 817.9,202.9 818.9,202.5 819.9,202.9 820.9,201.3 821.9,205.0 822.9,199.2 823.9,205.2 824.9,204.1 825.9,201.9 826.9,204.2 827.9,204.5 828.9,202.7 829.9,203.4 830.9,201.9 831.9,202.5 832.9,205.0 833.9,202.7 834.9,202.9 835.9,203.0 836.9,201.5 837.9,197.0 838.9,203.6 839.9,202.0 840.9,204.1 841.9,203.8 842.9,198.3 843.9,202.9 844.9,205.6 845.9,195.2 846.9,203.7 847.9,204.2 848.9,201.9 849.9,200.6 850.9,199.9 851.9,201.8 852.9,201.8 853.9,203.4 854.9,203.9 855.9,204.9 856.9,202.4 857.9,204.8 858.9,202.5 859.9,201.6 860.9,201.2 861.9,205.8 862.9,196.0 863.9,199.2 864.9,203.3 865.9,204.2 866.9,203.6 867.9,202.7 868.9,203.1 869.9,203.9 870.9,202.9 871.9,202.0 872.9,204.1 873.9,203.0 874.9,204.5 875.9,202.7 876.9,202.6 877.9,202.3 878.9,202.7 879.9,203.4 880.9,197.0 881.9,202.6 882.9,199.3 883.9,204.9 884.9,200.6 885.9,204.7 886.9,205.3 887.9,203.2 888.9,201.8 889.9,199.3 890.9,197.0 891.9,203.6 892.9,203.8 893.9,202.0 894.9,206.9 895.9,199.0 896.9,203.2 897.9,206.2 898.9,204.4 899.9,204.5 900.9,201.3 901.9,205.8 902.9,203.4 903.9,205.7 904.9,204.5 905.9,199.1 906.9,205.3 907.9,200.0 908.9,203.5 909.9,202.5 910.9,202.5 911.9,204.6 912.9,201.1 913.9,202.8 914.9,203.8 915.9,205.2 916.9,200.4 917.9,204.4 918.9,202.3 919.9,203.6 920.9,203.2 921.9,203.9 922.9,202.2 923.9,202.5 924.9,203.8 926.0,204.5 927.0,205.7 928.0,205.2 929.0,203.9 930.0,199.6 931.0,201.0 932.0,204.4 933.0,202.2 934.0,204.9 935.0,204.6 936.0,201.6 937.0,200.3 938.0,198.9 939.0,204.3 940.0,202.2 941.0,203.8 942.0,203.5 943.0,203.1 944.0,203.6 945.0,202.5 946.0,203.0 947.0,201.5 948.0,202.2 949.0,205.0 950.0,204.4 951.0,204.6 952.0,201.6 953.0,203.4 954.0,205.9 955.0,202.1 956.0,203.8 957.0,198.5 958.0,203.8 959.0,203.4 960.0,204.8 961.0,202.3 962.0,199.6 963.0,204.3 964.0,203.8 965.0,203.1 966.0,202.9 967.0,203.4 968.0,203.3 969.0,202.0 970.0,203.7 971.0,203.1 972.0,205.0 973.0,196.0 974.0,202.2 975.0,203.2 976.0,203.9 977.0,200.7 978.0,205.1 979.0,203.6 980.0,202.5 981.0,202.9 982.0,201.4 983.0,202.6 984.0,195.7 985.0,202.8 986.0,204.3 987.0,203.8 988.0,202.4 989.0,214.0"/><polyline fill="none" stroke="#f6ab62" stroke-width="1" stroke-linejoin="round" points="348.5,203.5 349.5,205.0 350.5,205.7 351.5,205.1 352.5,205.5 353.5,204.6 354.5,203.5 355.5,206.2 356.5,204.5 357.5,204.7 358.5,204.3 359.5,205.9 360.5,204.9 361.5,204.0 362.5,203.3 363.5,203.9 364.5,204.6 365.5,204.0 366.5,206.2 367.5,204.8 368.5,204.4 369.5,205.8 370.5,204.9 371.5,203.4 372.5,204.8 373.5,204.3 374.5,206.2 375.5,205.5 376.5,204.0 377.5,204.3 378.5,204.0 379.5,204.2 380.5,204.6 381.5,205.1 382.5,204.2 383.5,206.0 384.5,206.1 385.5,204.4 386.5,203.9 387.5,205.7 388.5,203.7 389.5,191.0 390.5,196.8 391.5,206.6 392.5,205.8 393.5,205.0 394.5,205.6 395.5,203.4 396.5,204.1 397.5,206.7 398.5,201.9 399.5,205.8 400.5,204.5 401.5,206.7 402.5,204.5 403.5,206.5 404.5,204.9 405.5,205.0 406.5,204.6 407.5,204.6 408.5,206.3 409.5,203.3 410.5,204.0 411.5,204.8 412.6,206.0 413.6,205.0 414.6,205.8 415.6,205.8 416.6,204.2 417.6,204.4 418.6,205.1 419.6,202.1 420.6,204.7 421.6,205.1 422.6,204.1 423.6,205.7 424.6,204.8 425.6,203.7 426.6,206.0 427.6,204.7 428.6,204.5 429.6,205.8 430.6,204.5 431.6,204.6 432.6,205.4 433.6,204.0 434.6,204.5 435.6,205.5 436.6,205.1 437.6,205.2 438.6,203.4 439.6,206.8 440.6,204.2 441.6,203.9 442.6,200.3 443.6,203.7 444.6,204.2 445.6,206.3 446.6,205.4 447.6,205.1 448.6,205.5 449.6,203.5 450.6,203.2 451.6,203.5 452.6,203.9 453.6,205.2 454.6,205.4 455.6,204.6 456.6,200.5 457.6,205.0 458.6,204.1 459.6,205.3 460.6,205.0 461.6,204.5 462.6,205.2 463.6,205.0 464.6,204.6 465.6,204.6 466.6,203.7 467.6,204.9 468.6,205.7 469.6,204.6 470.6,205.2 471.6,203.7 472.6,205.2 473.6,204.8 474.6,205.8 475.6,206.6 476.6,204.6 477.6,204.4 478.6,204.5 479.6,204.4 480.6,202.4 481.6,204.0 482.6,205.0 483.6,204.0 484.6,204.5 485.6,204.8 486.6,205.4 487.6,203.7 488.6,204.3 489.6,204.5 490.6,203.5 491.6,203.7 492.6,204.0 493.6,205.3 494.6,204.1 495.6,203.7 496.6,202.9 497.6,204.1 498.6,205.5 499.6,204.5 500.6,205.1 501.6,204.0 502.6,204.1 503.6,205.7 504.6,204.8 505.6,204.6 506.6,204.3 507.6,202.1 508.6,204.8 509.6,204.5 510.6,205.9 511.6,204.8 512.6,203.4 513.6,205.5 514.6,204.9 515.6,205.4 516.6,205.1 517.6,204.9 518.6,205.1 519.6,204.5 520.6,204.8 521.6,204.5 522.6,205.5 523.6,204.7 524.6,204.8 525.6,205.1 526.6,204.6 527.6,205.0 528.6,205.3 529.6,204.6 530.6,204.2 531.6,203.2 532.6,204.8 533.6,204.4 534.6,206.7 535.6,204.4 536.6,203.6 537.6,203.6 538.6,204.0 539.6,203.5 540.6,205.1 541.7,203.8 542.7,206.7 543.7,204.0 544.7,206.2 545.7,204.1 546.7,206.2 547.7,203.7 548.7,205.1 549.7,203.2 550.7,205.1 551.7,204.7 552.7,204.2 553.7,206.8 554.7,204.7 555.7,206.0 556.7,203.8 557.7,203.2 558.7,205.4 559.7,205.8 560.7,206.2 561.7,201.6 562.7,205.6 563.7,204.4 564.7,205.7 565.7,205.1 566.7,204.2 567.7,205.3 568.7,205.3 569.7,205.1 570.7,205.7 571.7,199.8 572.7,203.8 573.7,205.1 574.7,202.5 575.7,203.8 576.7,205.6 577.7,207.1 578.7,204.8 579.7,204.1 580.7,203.2 581.7,204.2 582.7,204.8 583.7,204.5 584.7,205.4 585.7,206.5 586.7,205.4 587.7,203.0 588.7,205.6 589.7,205.5 590.7,205.5 591.7,205.5 592.7,205.9 593.7,205.7 594.7,206.6 595.7,204.5 596.7,204.8 597.7,205.7 598.7,205.1 599.7,203.4 600.7,206.3 601.7,202.9 602.7,205.3 603.7,205.0 604.7,204.9 605.7,205.2 606.7,205.4 607.7,205.7 608.7,205.0 609.7,204.3 610.7,206.1 611.7,205.1 612.7,206.1 613.7,206.3 614.7,205.6 615.7,204.1 616.7,203.9 617.7,204.8 618.7,205.3 619.7,205.0 620.7,203.9 621.7,204.5 622.7,204.1 623.7,205.2 624.7,203.9 625.7,205.5 626.7,204.2 627.7,204.2 628.7,202.9 629.7,205.8 630.7,206.0 631.7,204.7 632.7,205.8 633.7,204.8 634.7,205.5 635.7,205.5 636.7,204.9 637.7,204.7 638.7,205.0 639.7,206.1 640.7,203.1 641.7,203.7 642.7,204.3 643.7,206.2 644.7,203.9 645.7,206.2 646.7,206.7 647.7,204.6 648.7,205.7 649.7,205.3 650.7,204.0 651.7,204.1 652.7,203.1 653.7,205.7 654.7,206.5 655.7,203.9 656.7,204.4 657.7,205.4 658.7,205.8 659.7,205.0 660.7,203.0 661.7,204.0 662.7,203.7 663.7,203.2 664.7,205.9 665.7,205.9 666.7,206.3 667.7,205.1 668.8,206.0 669.8,206.1 670.8,205.8 671.8,204.7 672.8,204.4 673.8,204.5 674.8,205.6 675.8,201.3 676.8,205.5 677.8,204.8 678.8,204.5 679.8,204.7 680.8,205.0 681.8,204.6 682.8,203.5 683.8,205.4 684.8,205.0 685.8,203.9 686.8,202.4 687.8,203.7 688.8,204.6 689.8,205.8 690.8,205.8 691.8,206.0 692.8,204.9 693.8,203.1 694.8,204.8 695.8,204.4 696.8,204.8 697.8,206.1 698.8,204.4 699.8,205.1 700.8,204.3 701.8,204.3 702.8,203.4 703.8,204.3 704.8,203.4 705.8,206.1 706.8,205.3 707.8,202.8 708.8,205.4 709.8,200.0 710.8,204.5 711.8,205.3 712.8,205.3 713.8,206.7 714.8,206.0 715.8,206.0 716.8,203.2 717.8,204.4 718.8,204.5 719.8,207.5 720.8,204.3 721.8,206.5 722.8,204.5 723.8,205.8 724.8,205.2 725.8,202.8 726.8,204.5 727.8,203.8 728.8,204.9 729.8,204.1 730.8,205.4 731.8,201.5 732.8,205.2 733.8,205.0 734.8,204.7 735.8,204.1 736.8,204.4 737.8,206.1 738.8,204.7 739.8,204.0 740.8,205.3 741.8,204.4 742.8,204.3 743.8,205.7 744.8,205.9 745.8,204.8 746.8,205.1 747.8,205.5 748.8,206.1 749.8,205.1 750.8,205.7 751.8,205.0 752.8,205.0 753.8,204.7 754.8,203.9 755.8,205.3 756.8,205.9 757.8,203.5 758.8,205.0 759.8,204.5 760.8,203.4 761.8,204.2 762.8,201.5 763.8,202.8 764.8,203.3 765.8,204.6 766.8,205.3 767.8,204.3 768.8,202.5 769.8,206.4 770.8,205.4 771.8,206.1 772.8,205.7 773.8,205.5 774.8,201.4 775.8,203.1 776.8,204.5 777.8,203.8 778.8,203.9 779.8,202.9 780.8,203.2 781.8,203.6 782.8,204.0 783.8,204.1 784.8,204.3 785.8,204.0 786.8,203.8 787.8,204.4 788.8,204.8 789.8,205.7 790.8,205.4 791.8,205.8 792.8,205.6 793.8,204.2 794.8,206.7 795.8,203.4 796.8,204.5 797.9,204.4 798.9,205.2 799.9,205.0 800.9,205.5 801.9,205.0 802.9,204.4 803.9,206.0 804.9,206.5 805.9,203.3 806.9,204.8 807.9,204.9 808.9,204.7 809.9,204.1 810.9,205.2 811.9,203.5 812.9,205.8 813.9,204.4 814.9,205.5 815.9,207.1 816.9,196.8 817.9,205.4 818.9,205.7 819.9,203.6 820.9,205.5 821.9,204.6 822.9,202.8 823.9,205.4 824.9,207.5 825.9,205.3 826.9,206.1 827.9,201.4 828.9,204.1 829.9,204.9 830.9,202.4 831.9,205.5 832.9,205.8 833.9,202.7 834.9,204.6 835.9,204.0 836.9,204.1 837.9,205.0 838.9,203.2 839.9,205.1 840.9,203.9 841.9,204.8 842.9,205.2 843.9,204.7 844.9,205.0 845.9,203.8 846.9,206.1 847.9,204.2 848.9,204.7 849.9,205.4 850.9,205.8 851.9,204.5 852.9,204.5 853.9,205.5 854.9,205.7 855.9,203.0 856.9,204.6 857.9,205.7 858.9,203.7 859.9,204.8 860.9,203.9 861.9,204.8 862.9,203.2 863.9,204.7 864.9,205.4 865.9,205.4 866.9,204.2 867.9,204.6 868.9,205.0 869.9,204.8 870.9,204.6 871.9,206.2 872.9,204.4 873.9,205.3 874.9,204.7 875.9,204.5 876.9,204.5 877.9,203.7 878.9,205.2 879.9,204.8 880.9,206.0 881.9,204.5 882.9,205.1 883.9,204.7 884.9,204.2 885.9,204.2 886.9,204.4 887.9,204.8 888.9,205.1 889.9,204.4 890.9,203.5 891.9,203.7 892.9,201.7 893.9,205.0 894.9,204.8 895.9,205.4 896.9,204.9 897.9,205.1 898.9,205.2 899.9,204.9 900.9,206.6 901.9,204.5 902.9,204.2 903.9,202.1 904.9,204.5 905.9,204.2 906.9,203.4 907.9,201.3 908.9,204.0 909.9,205.9 910.9,204.6 911.9,203.5 912.9,204.8 913.9,203.7 914.9,201.3 915.9,204.0 916.9,205.0 917.9,204.9 918.9,205.0 919.9,204.8 920.9,204.8 921.9,205.9 922.9,204.4 923.9,204.8 924.9,204.3 926.0,204.1 927.0,203.9 928.0,204.2 929.0,204.5 930.0,205.7 931.0,204.5 932.0,203.3 933.0,206.5 934.0,205.0 935.0,204.6 936.0,204.0 937.0,204.7 938.0,204.1 939.0,205.5 940.0,204.3 941.0,206.0 942.0,204.7 943.0,203.4 944.0,202.9 945.0,206.2 946.0,203.8 947.0,205.5 948.0,204.8 949.0,204.1 950.0,204.9 951.0,205.1 952.0,206.1 953.0,202.2 954.0,205.4 955.0,206.1 956.0,203.2 957.0,205.2 958.0,204.2 959.0,204.9 960.0,204.2 961.0,205.2 962.0,205.6 963.0,206.1 964.0,204.0 965.0,204.1 966.0,205.1 967.0,204.6 968.0,205.5 969.0,205.2 970.0,201.0 971.0,203.8 972.0,206.4 973.0,203.1 974.0,205.6 975.0,205.8 976.0,204.3 977.0,203.3 978.0,204.2 979.0,205.9 980.0,202.7 981.0,205.1 982.0,204.0 983.0,204.4 984.0,204.1 985.0,204.8 986.0,204.6 987.0,204.8 988.0,204.3 989.0,214.0"/><polyline fill="none" stroke="#6fc46f" stroke-width="0.8" stroke-linejoin="round" points="348.5,207.9 349.5,207.9 350.5,207.8 351.5,208.0 352.5,207.9 353.5,208.0 354.5,207.9 355.5,208.0 356.5,208.0 357.5,208.1 358.5,208.0 359.5,208.2 360.5,208.3 361.5,208.0 362.5,208.0 363.5,208.1 364.5,207.7 365.5,208.4 366.5,208.2 367.5,208.2 368.5,208.1 369.5,208.2 370.5,207.8 371.5,207.9 372.5,208.1 373.5,207.9 374.5,208.0 375.5,208.3 376.5,208.2 377.5,208.0 378.5,207.9 379.5,208.3 380.5,208.5 381.5,208.4 382.5,207.9 383.5,208.4 384.5,208.2 385.5,208.0 386.5,208.0 387.5,207.6 388.5,207.8 389.5,208.3 390.5,207.9 391.5,208.7 392.5,208.0 393.5,208.3 394.5,208.0 395.5,208.2 396.5,208.0 397.5,208.3 398.5,208.0 399.5,208.2 400.5,208.2 401.5,208.4 402.5,208.3 403.5,208.2 404.5,208.0 405.5,208.5 406.5,208.1 407.5,208.0 408.5,208.1 409.5,208.3 410.5,208.1 411.5,208.2 412.6,207.9 413.6,208.6 414.6,207.9 415.6,208.3 416.6,208.3 417.6,207.7 418.6,208.4 419.6,208.3 420.6,208.4 421.6,207.9 422.6,208.2 423.6,207.9 424.6,207.8 425.6,207.8 426.6,208.4 427.6,208.0 428.6,208.5 429.6,208.2 430.6,208.0 431.6,207.8 432.6,207.6 433.6,208.6 434.6,208.2 435.6,208.6 436.6,208.3 437.6,207.8 438.6,208.4 439.6,208.1 440.6,207.8 441.6,208.1 442.6,207.9 443.6,208.2 444.6,208.4 445.6,207.7 446.6,208.6 447.6,208.1 448.6,208.6 449.6,208.1 450.6,208.4 451.6,208.4 452.6,208.1 453.6,207.9 454.6,207.3 455.6,208.1 456.6,208.1 457.6,208.3 458.6,208.0 459.6,207.8 460.6,208.4 461.6,208.3 462.6,208.1 463.6,208.3 464.6,207.6 465.6,207.9 466.6,207.8 467.6,207.9 468.6,208.4 469.6,208.0 470.6,208.1 471.6,208.3 472.6,208.4 473.6,207.9 474.6,208.1 475.6,208.0 476.6,208.2 477.6,208.1 478.6,207.9 479.6,208.1 480.6,208.0 481.6,207.8 482.6,207.8 483.6,208.0 484.6,208.2 485.6,207.9 486.6,208.2 487.6,208.0 488.6,207.7 489.6,208.1 490.6,208.4 491.6,208.5 492.6,208.2 493.6,207.8 494.6,208.0 495.6,208.1 496.6,208.0 497.6,208.4 498.6,207.8 499.6,208.2 500.6,207.8 501.6,207.8 502.6,208.2 503.6,207.9 504.6,207.9 505.6,208.2 506.6,208.3 507.6,208.3 508.6,208.4 509.6,208.3 510.6,208.3 511.6,208.0 512.6,208.1 513.6,207.9 514.6,208.1 515.6,208.1 516.6,208.1 517.6,208.2 518.6,208.1 519.6,207.8 520.6,207.8 521.6,208.2 522.6,207.9 523.6,208.2 524.6,208.0 525.6,208.3 526.6,208.1 527.6,208.4 528.6,208.0 529.6,208.1 530.6,208.2 531.6,208.2 532.6,208.4 533.6,208.3 534.6,207.9 535.6,208.1 536.6,208.0 537.6,207.5 538.6,208.0 539.6,208.0 540.6,208.1 541.7,208.2 542.7,207.9 543.7,208.1 544.7,208.5 545.7,208.0 546.7,208.5 547.7,207.8 548.7,208.2 549.7,208.1 550.7,208.1 551.7,208.1 552.7,208.1 553.7,208.1 554.7,208.2 555.7,208.3 556.7,207.6 557.7,208.2 558.7,208.2 559.7,207.9 560.7,208.0 561.7,208.5 562.7,208.2 563.7,208.3 564.7,208.2 565.7,208.2 566.7,208.2 567.7,207.6 568.7,208.1 569.7,208.2 570.7,207.9 571.7,208.3 572.7,207.8 573.7,207.9 574.7,207.8 575.7,207.8 576.7,208.1 577.7,207.8 578.7,208.4 579.7,208.1 580.7,208.1 581.7,207.9 582.7,207.9 583.7,208.1 584.7,208.1 585.7,208.3 586.7,207.9 587.7,208.2 588.7,207.9 589.7,207.8 590.7,208.4 591.7,208.2 592.7,208.2 593.7,208.0 594.7,208.2 595.7,208.1 596.7,207.9 597.7,208.1 598.7,208.1 599.7,208.3 600.7,207.8 601.7,207.8 602.7,208.3 603.7,208.1 604.7,208.5 605.7,208.0 606.7,208.0 607.7,207.6 608.7,208.1 609.7,208.4 610.7,208.2 611.7,208.1 612.7,208.3 613.7,208.4 614.7,207.9 615.7,208.6 616.7,208.2 617.7,208.4 618.7,207.9 619.7,207.9 620.7,208.3 621.7,207.9 622.7,207.9 623.7,207.7 624.7,208.0 625.7,208.1 626.7,208.3 627.7,207.9 628.7,208.1 629.7,208.0 630.7,208.6 631.7,208.3 632.7,207.8 633.7,208.2 634.7,208.2 635.7,208.3 636.7,207.9 637.7,208.1 638.7,207.8 639.7,208.1 640.7,207.8 641.7,207.8 642.7,207.5 643.7,208.4 644.7,208.0 645.7,208.1 646.7,207.1 647.7,207.8 648.7,208.4 649.7,208.3 650.7,207.9 651.7,207.7 652.7,208.2 653.7,207.7 654.7,207.9 655.7,208.1 656.7,207.8 657.7,208.6 658.7,208.1 659.7,208.0 660.7,207.4 661.7,208.3 662.7,208.2 663.7,208.2 664.7,208.4 665.7,207.7 666.7,208.0 667.7,208.0 668.8,208.0 669.8,207.9 670.8,208.3 671.8,208.0 672.8,208.2 673.8,208.0 674.8,208.0 675.8,208.2 676.8,208.3 677.8,208.0 678.8,208.3 679.8,208.5 680.8,207.8 681.8,208.2 682.8,207.9 683.8,208.0 684.8,208.3 685.8,208.0 686.8,208.1 687.8,208.0 688.8,207.8 689.8,208.3 690.8,208.0 691.8,208.1 692.8,207.9 693.8,207.9 694.8,208.2 695.8,208.0 696.8,208.2 697.8,208.1 698.8,208.2 699.8,207.6 700.8,208.2 701.8,208.0 702.8,207.9 703.8,208.1 704.8,208.1 705.8,207.9 706.8,208.1 707.8,208.0 708.8,208.0 709.8,208.2 710.8,208.0 711.8,207.8 712.8,208.2 713.8,207.6 714.8,207.9 715.8,207.9 716.8,208.2 717.8,208.4 718.8,208.2 719.8,208.5 720.8,207.8 721.8,208.0 722.8,208.2 723.8,208.3 724.8,207.6 725.8,208.1 726.8,207.9 727.8,208.3 728.8,208.1 729.8,208.2 730.8,208.0 731.8,208.1 732.8,207.9 733.8,208.1 734.8,207.9 735.8,208.3 736.8,207.8 737.8,208.2 738.8,208.3 739.8,208.1 740.8,208.2 741.8,208.2 742.8,208.3 743.8,208.1 744.8,208.3 745.8,208.1 746.8,208.1 747.8,208.4 748.8,208.3 749.8,208.1 750.8,208.2 751.8,208.5 752.8,208.0 753.8,207.9 754.8,208.3 755.8,207.8 756.8,208.1 757.8,207.7 758.8,208.3 759.8,208.4 760.8,208.1 761.8,208.1 762.8,208.4 763.8,208.6 764.8,208.2 765.8,208.0 766.8,208.3 767.8,208.1 768.8,208.2 769.8,208.5 770.8,208.3 771.8,208.0 772.8,208.1 773.8,208.0 774.8,208.0 775.8,208.3 776.8,208.2 777.8,208.0 778.8,207.8 779.8,207.8 780.8,208.2 781.8,208.2 782.8,208.1 783.8,208.1 784.8,208.3 785.8,207.8 786.8,207.8 787.8,208.1 788.8,208.0 789.8,207.7 790.8,208.3 791.8,208.2 792.8,208.2 793.8,207.8 794.8,208.0 795.8,208.0 796.8,208.4 797.9,207.8 798.9,208.1 799.9,207.7 800.9,208.1 801.9,208.1 802.9,208.1 803.9,207.7 804.9,207.9 805.9,208.0 806.9,208.0 807.9,208.5 808.9,208.1 809.9,208.2 810.9,208.7 811.9,207.9 812.9,208.1 813.9,208.1 814.9,208.3 815.9,207.9 816.9,208.2 817.9,208.4 818.9,208.4 819.9,208.1 820.9,208.0 821.9,207.7 822.9,208.3 823.9,208.3 824.9,207.9 825.9,208.2 826.9,208.3 827.9,208.1 828.9,208.2 829.9,207.9 830.9,208.2 831.9,208.0 832.9,208.3 833.9,208.0 834.9,208.5 835.9,208.0 836.9,208.0 837.9,208.1 838.9,208.2 839.9,208.3 840.9,208.0 841.9,207.8 842.9,208.2 843.9,208.2 844.9,208.3 845.9,208.1 846.9,208.4 847.9,208.1 848.9,208.2 849.9,208.3 850.9,208.2 851.9,208.2 852.9,208.4 853.9,208.2 854.9,207.7 855.9,208.2 856.9,208.1 857.9,208.1 858.9,208.1 859.9,208.3 860.9,208.0 861.9,208.3 862.9,208.5 863.9,208.0 864.9,208.0 865.9,208.2 866.9,207.9 867.9,208.1 868.9,208.2 869.9,208.2 870.9,208.2 871.9,207.6 872.9,207.9 873.9,208.1 874.9,207.8 875.9,208.3 876.9,207.7 877.9,207.8 878.9,208.0 879.9,208.2 880.9,208.1 881.9,208.3 882.9,208.2 883.9,207.8 884.9,208.2 885.9,208.3 886.9,207.9 887.9,208.2 888.9,207.8 889.9,208.0 890.9,208.2 891.9,208.0 892.9,208.2 893.9,208.3 894.9,207.9 895.9,208.2 896.9,208.0 897.9,207.8 898.9,208.0 899.9,208.0 900.9,208.3 901.9,207.9 902.9,207.7 903.9,208.1 904.9,208.4 905.9,208.2 906.9,208.1 907.9,208.3 908.9,208.3 909.9,208.5 910.9,208.0 911.9,208.1 912.9,208.2 913.9,208.1 914.9,208.2 915.9,208.0 916.9,208.0 917.9,207.9 918.9,208.5 919.9,208.1 920.9,208.1 921.9,208.0 922.9,208.2 923.9,208.1 924.9,208.1 926.0,208.3 927.0,208.3 928.0,207.9 929.0,208.1 930.0,208.2 931.0,207.8 932.0,207.9 933.0,208.1 934.0,208.0 935.0,208.3 936.0,208.1 937.0,208.4 938.0,207.8 939.0,208.1 940.0,208.1 941.0,208.2 942.0,208.5 943.0,207.8 944.0,208.0 945.0,208.2 946.0,208.0 947.0,208.3 948.0,208.1 949.0,208.0 950.0,208.3 951.0,207.9 952.0,208.2 953.0,208.4 954.0,208.0 955.0,208.0 956.0,208.2 957.0,208.1 958.0,208.1 959.0,208.0 960.0,208.3 961.0,208.2 962.0,208.4 963.0,208.3 964.0,208.4 965.0,208.2 966.0,207.8 967.0,208.2 968.0,208.3 969.0,208.5 970.0,208.2 971.0,207.6 972.0,207.9 973.0,208.2 974.0,208.0 975.0,208.2 976.0,208.0 977.0,207.9 978.0,208.1 979.0,207.9 980.0,208.1 981.0,208.4 982.0,207.9 983.0,207.9 984.0,208.0 985.0,208.4 986.0,208.0 987.0,208.3 988.0,208.1 989.0,214.0"/><polyline fill="none" stroke="#a968b8" stroke-width="0.8" stroke-linejoin="round" points="348.5,209.9 349.5,209.3 350.5,210.2 351.5,209.1 352.5,210.6 353.5,209.3 354.5,209.1 355.5,209.6 356.5,209.2 357.5,209.2 358.5,208.2 359.5,209.6 360.5,206.6 361.5,209.5 362.5,209.4 363.5,207.8 364.5,209.4 365.5,209.2 366.5,209.4 367.5,209.9 368.5,209.5 369.5,210.8 370.5,208.0 371.5,209.4 372.5,209.6 373.5,209.7 374.5,210.2 375.5,209.9 376.5,209.6 377.5,209.7 378.5,210.3 379.5,210.6 380.5,210.3 381.5,210.1 382.5,208.1 383.5,209.9 384.5,208.6 385.5,210.2 386.5,210.7 387.5,210.5 388.5,209.2 389.5,210.3 390.5,210.2 391.5,209.2 392.5,209.7 393.5,210.2 394.5,208.1 395.5,209.2 396.5,210.3 397.5,209.3 398.5,206.6 399.5,210.8 400.5,208.6 401.5,209.3 402.5,210.3 403.5,210.1 404.5,209.4 405.5,209.8 406.5,208.7 407.5,209.5 408.5,207.1 409.5,208.9 410.5,210.3 411.5,208.1 412.6,209.9 413.6,209.6 414.6,209.6 415.6,210.1 416.6,209.4 417.6,209.2 418.6,210.3 419.6,208.1 420.6,207.8 421.6,209.7 422.6,209.9 423.6,209.1 424.6,209.7 425.6,209.8 426.6,208.4 427.6,210.9 428.6,209.8 429.6,208.8 430.6,210.3 431.6,209.7 432.6,211.1 433.6,210.0 434.6,210.0 435.6,208.9 436.6,205.2 437.6,208.5 438.6,209.3 439.6,209.8 440.6,209.1 441.6,209.9 442.6,209.8 443.6,209.2 444.6,211.0 445.6,209.9 446.6,209.1 447.6,210.5 448.6,208.4 449.6,211.0 450.6,209.4 451.6,210.1 452.6,207.2 453.6,209.3 454.6,209.2 455.6,209.7 456.6,209.6 457.6,208.7 458.6,208.5 459.6,208.4 460.6,205.2 461.6,209.3 462.6,209.7 463.6,210.3 464.6,210.3 465.6,208.7 466.6,210.7 467.6,209.9 468.6,210.6 469.6,209.5 470.6,208.6 471.6,209.1 472.6,209.8 473.6,208.6 474.6,208.7 475.6,209.0 476.6,209.1 477.6,209.3 478.6,209.8 479.6,205.1 480.6,209.7 481.6,209.6 482.6,209.7 483.6,209.0 484.6,208.1 485.6,209.4 486.6,208.3 487.6,210.4 488.6,209.6 489.6,209.6 490.6,208.9 491.6,209.7 492.6,209.0 493.6,210.1 494.6,209.4 495.6,210.2 496.6,209.2 497.6,209.5 498.6,209.1 499.6,209.1 500.6,208.9 501.6,210.4 502.6,208.6 503.6,208.8 504.6,208.8 505.6,209.7 506.6,209.9 507.6,210.1 508.6,209.2 509.6,208.8 510.6,209.8 511.6,208.6 512.6,209.9 513.6,209.3 514.6,209.5 515.6,210.3 516.6,208.6 517.6,210.1 518.6,209.3 519.6,209.5 520.6,209.7 521.6,209.9 522.6,209.0 523.6,208.6 524.6,209.8 525.6,208.7 526.6,209.1 527.6,208.8 528.6,209.5 529.6,208.7 530.6,208.1 531.6,209.9 532.6,209.2 533.6,211.1 534.6,208.9 535.6,209.1 536.6,209.3 537.6,209.1 538.6,209.7 539.6,209.9 540.6,209.6 541.7,209.7 542.7,210.0 543.7,209.5 544.7,209.2 545.7,209.4 546.7,205.3 547.7,209.8 548.7,209.8 549.7,209.3 550.7,209.1 551.7,209.6 552.7,210.0 553.7,209.8 554.7,210.0 555.7,208.5 556.7,209.6 557.7,209.0 558.7,209.1 559.7,208.7 560.7,209.4 561.7,209.6 562.7,210.0 563.7,209.8 564.7,208.5 565.7,210.5 566.7,210.0 567.7,209.4 568.7,206.5 569.7,210.3 570.7,208.7 571.7,209.3 572.7,210.2 573.7,208.4 574.7,209.2 575.7,208.9 576.7,209.4 577.7,209.9 578.7,210.0 579.7,209.2 580.7,208.7 581.7,209.3 582.7,208.9 583.7,210.0 584.7,208.6 585.7,209.5 586.7,209.8 587.7,209.0 588.7,209.2 589.7,208.3 590.7,210.5 591.7,209.7 592.7,210.2 593.7,209.3 594.7,209.5 595.7,209.2 596.7,204.3 597.7,209.5 598.7,209.3 599.7,209.4 600.7,209.1 601.7,209.2 602.7,209.0 603.7,209.7 604.7,208.7 605.7,210.2 606.7,208.2 607.7,210.0 608.7,209.4 609.7,209.7 610.7,209.6 611.7,208.5 612.7,209.2 613.7,209.1 614.7,210.0 615.7,209.1 616.7,208.6 617.7,207.6 618.7,208.5 619.7,209.0 620.7,208.8 621.7,208.7 622.7,208.9 623.7,209.2 624.7,208.4 625.7,209.8 626.7,208.9 627.7,208.1 628.7,209.7 629.7,209.1 630.7,209.6 631.7,209.4 632.7,210.3 633.7,208.5 634.7,208.8 635.7,209.7 636.7,205.0 637.7,210.3 638.7,208.7 639.7,207.1 640.7,204.1 641.7,209.7 642.7,210.1 643.7,209.2 644.7,209.5 645.7,209.5 646.7,209.5 647.7,210.4 648.7,205.2 649.7,209.5 650.7,209.3 651.7,209.5 652.7,209.9 653.7,209.9 654.7,210.2 655.7,209.4 656.7,204.1 657.7,208.2 658.7,208.5 659.7,208.5 660.7,209.2 661.7,209.0 662.7,208.8 663.7,209.0 664.7,209.9 665.7,210.3 666.7,209.2 667.7,210.2 668.8,209.5 669.8,208.9 670.8,209.4 671.8,209.6 672.8,209.4 673.8,208.7 674.8,210.1 675.8,209.8 676.8,208.5 677.8,210.4 678.8,210.1 679.8,208.9 680.8,210.5 681.8,209.4 682.8,209.1 683.8,210.1 684.8,210.3 685.8,208.6 686.8,209.9 687.8,210.5 688.8,209.4 689.8,210.0 690.8,209.1 691.8,209.9 692.8,209.0 693.8,205.3 694.8,209.5 695.8,210.3 696.8,209.2 697.8,208.1 698.8,209.3 699.8,205.2 700.8,209.3 701.8,209.4 702.8,209.0 703.8,210.1 704.8,209.3 705.8,208.6 706.8,210.4 707.8,208.4 708.8,209.5 709.8,204.1 710.8,209.1 711.8,210.8 712.8,209.2 713.8,208.7 714.8,208.9 715.8,208.5 716.8,209.9 717.8,209.9 718.8,208.7 719.8,209.3 720.8,209.8 721.8,208.0 722.8,210.0 723.8,208.9 724.8,209.0 725.8,209.5 726.8,209.3 727.8,209.2 728.8,209.0 729.8,209.9 730.8,209.5 731.8,209.4 732.8,209.8 733.8,209.1 734.8,209.7 735.8,209.3 736.8,208.9 737.8,210.0 738.8,209.0 739.8,208.9 740.8,209.8 741.8,208.7 742.8,209.6 743.8,209.5 744.8,209.1 745.8,209.7 746.8,210.1 747.8,209.2 748.8,208.9 749.8,208.4 750.8,208.0 751.8,209.2 752.8,208.3 753.8,209.4 754.8,208.9 755.8,209.2 756.8,210.5 757.8,208.7 758.8,209.7 759.8,210.6 760.8,209.7 761.8,209.4 762.8,207.6 763.8,207.7 764.8,208.9 765.8,208.8 766.8,208.8 767.8,209.5 768.8,209.2 769.8,208.5 770.8,209.6 771.8,209.5 772.8,205.9 773.8,209.7 774.8,209.1 775.8,209.4 776.8,209.1 777.8,209.8 778.8,209.5 779.8,209.2 780.8,209.0 781.8,210.4 782.8,209.8 783.8,206.6 784.8,209.1 785.8,210.3 786.8,210.1 787.8,208.9 788.8,210.2 789.8,209.3 790.8,210.1 791.8,209.6 792.8,209.1 793.8,209.0 794.8,209.0 795.8,210.4 796.8,208.8 797.9,208.3 798.9,210.0 799.9,210.5 800.9,209.7 801.9,209.5 802.9,209.2 803.9,210.1 804.9,209.0 805.9,209.1 806.9,210.5 807.9,208.8 808.9,208.6 809.9,209.6 810.9,209.1 811.9,209.2 812.9,210.0 813.9,209.5 814.9,210.8 815.9,210.5 816.9,208.7 817.9,209.8 818.9,209.1 819.9,209.5 820.9,209.2 821.9,208.3 822.9,209.2 823.9,210.1 824.9,209.6 825.9,209.2 826.9,209.6 827.9,210.2 828.9,210.3 829.9,209.4 830.9,209.4 831.9,209.0 832.9,208.8 833.9,210.8 834.9,209.7 835.9,210.0 836.9,209.4 837.9,209.7 838.9,209.9 839.9,209.3 840.9,210.0 841.9,210.2 842.9,209.2 843.9,209.4 844.9,209.5 845.9,210.7 846.9,209.4 847.9,209.7 848.9,210.6 849.9,209.6 850.9,206.5 851.9,209.7 852.9,204.1 853.9,209.0 854.9,210.1 855.9,209.9 856.9,209.8 857.9,209.0 858.9,210.6 859.9,209.0 860.9,209.0 861.9,209.0 862.9,208.1 863.9,208.7 864.9,209.2 865.9,210.2 866.9,209.8 867.9,209.8 868.9,210.4 869.9,197.9 870.9,209.3 871.9,208.9 872.9,208.3 873.9,209.1 874.9,210.1 875.9,209.6 876.9,209.4 877.9,210.0 878.9,208.7 879.9,210.2 880.9,208.2 881.9,208.7 882.9,208.0 883.9,208.7 884.9,209.1 885.9,209.2 886.9,209.6 887.9,211.0 888.9,204.7 889.9,209.5 890.9,208.6 891.9,208.0 892.9,210.1 893.9,209.4 894.9,209.6 895.9,200.1 896.9,208.8 897.9,209.7 898.9,210.3 899.9,208.5 900.9,209.0 901.9,207.5 902.9,208.4 903.9,209.0 904.9,211.1 905.9,209.6 906.9,208.7 907.9,210.0 908.9,210.5 909.9,209.2 910.9,206.9 911.9,209.8 912.9,209.6 913.9,209.2 914.9,208.8 915.9,209.2 916.9,209.4 917.9,209.5 918.9,208.3 919.9,209.4 920.9,209.4 921.9,209.5 922.9,209.4 923.9,211.0 924.9,206.7 926.0,209.1 927.0,209.2 928.0,209.7 929.0,208.9 930.0,210.3 931.0,208.9 932.0,209.3 933.0,209.2 934.0,209.2 935.0,209.6 936.0,209.7 937.0,209.2 938.0,210.2 939.0,209.3 940.0,209.8 941.0,209.3 942.0,207.8 943.0,210.7 944.0,209.3 945.0,208.5 946.0,210.3 947.0,211.7 948.0,210.3 949.0,209.1 950.0,208.8 951.0,207.9 952.0,209.5 953.0,210.4 954.0,206.9 955.0,206.6 956.0,209.7 957.0,209.8 958.0,208.9 959.0,209.6 960.0,208.2 961.0,208.3 962.0,207.3 963.0,210.0 964.0,209.3 965.0,209.7 966.0,210.1 967.0,209.5 968.0,208.2 969.0,210.1 970.0,209.3 971.0,209.3 972.0,209.8 973.0,209.9 974.0,209.6 975.0,209.5 976.0,207.8 977.0,208.7 978.0,208.8 979.0,209.4 980.0,209.0 981.0,210.5 982.0,209.2 983.0,209.4 984.0,209.9 985.0,209.5 986.0,209.5 987.0,209.4 988.0,209.3 989.0,214.0"/><polyline fill="none" stroke="#cf735c" stroke-width="0.8" stroke-linejoin="round" points="348.5,211.0 349.5,210.5 350.5,210.5 351.5,211.2 352.5,211.5 353.5,211.1 354.5,210.0 355.5,210.2 356.5,210.9 357.5,210.0 358.5,210.2 359.5,211.5 360.5,210.6 361.5,208.7 362.5,210.2 363.5,211.3 364.5,210.9 365.5,211.1 366.5,211.0 367.5,210.9 368.5,211.3 369.5,211.1 370.5,211.2 371.5,210.4 372.5,209.9 373.5,210.9 374.5,211.7 375.5,211.8 376.5,210.6 377.5,210.1 378.5,210.7 379.5,211.2 380.5,211.5 381.5,210.4 382.5,209.8 383.5,210.8 384.5,212.1 385.5,210.7 386.5,210.2 387.5,210.7 388.5,209.5 389.5,210.4 390.5,211.1 391.5,210.3 392.5,210.7 393.5,210.7 394.5,210.9 395.5,210.3 396.5,211.1 397.5,210.7 398.5,211.2 399.5,210.4 400.5,211.4 401.5,210.5 402.5,211.6 403.5,206.7 404.5,207.9 405.5,210.9 406.5,211.1 407.5,211.1 408.5,211.0 409.5,209.7 410.5,212.3 411.5,210.7 412.6,210.7 413.6,211.0 414.6,211.0 415.6,211.7 416.6,211.4 417.6,210.0 418.6,211.2 419.6,210.7 420.6,211.1 421.6,210.7 422.6,210.6 423.6,211.0 424.6,210.5 425.6,210.5 426.6,211.5 427.6,210.8 428.6,210.9 429.6,210.9 430.6,210.8 431.6,210.5 432.6,211.4 433.6,210.6 434.6,211.2 435.6,210.9 436.6,207.5 437.6,211.5 438.6,210.8 439.6,209.9 440.6,212.2 441.6,210.8 442.6,210.3 443.6,210.4 444.6,210.6 445.6,207.4 446.6,210.0 447.6,210.3 448.6,210.6 449.6,209.3 450.6,210.3 451.6,210.5 452.6,210.8 453.6,210.9 454.6,210.2 455.6,210.4 456.6,210.4 457.6,211.5 458.6,210.4 459.6,210.6 460.6,209.7 461.6,211.0 462.6,210.7 463.6,211.4 464.6,210.5 465.6,210.5 466.6,211.5 467.6,211.5 468.6,210.8 469.6,210.4 470.6,210.5 471.6,211.9 472.6,210.1 473.6,210.8 474.6,211.0 475.6,210.8 476.6,210.6 477.6,210.7 478.6,211.3 479.6,210.9 480.6,210.7 481.6,210.1 482.6,211.4 483.6,210.5 484.6,210.5 485.6,210.1 486.6,210.8 487.6,210.9 488.6,211.6 489.6,211.4 490.6,210.9 491.6,210.4 492.6,210.6 493.6,209.9 494.6,210.8 495.6,209.8 496.6,210.8 497.6,206.4 498.6,211.0 499.6,211.2 500.6,210.5 501.6,210.4 502.6,211.0 503.6,210.9 504.6,210.0 505.6,210.6 506.6,211.9 507.6,211.2 508.6,210.9 509.6,210.2 510.6,210.3 511.6,210.8 512.6,211.4 513.6,210.8 514.6,210.7 515.6,210.7 516.6,209.0 517.6,211.3 518.6,210.9 519.6,210.9 520.6,211.1 521.6,210.9 522.6,210.3 523.6,211.4 524.6,211.7 525.6,210.6 526.6,209.9 527.6,211.4 528.6,210.1 529.6,211.0 530.6,211.1 531.6,210.9 532.6,210.9 533.6,210.7 534.6,205.8 535.6,211.3 536.6,210.2 537.6,211.0 538.6,210.1 539.6,209.4 540.6,211.3 541.7,210.8 542.7,211.2 543.7,210.7 544.7,210.7 545.7,210.5 546.7,210.4 547.7,210.6 548.7,210.7 549.7,211.2 550.7,206.8 551.7,211.5 552.7,211.6 553.7,210.7 554.7,210.9 555.7,211.0 556.7,211.4 557.7,211.1 558.7,209.6 559.7,205.5 560.7,210.1 561.7,211.2 562.7,211.0 563.7,209.8 564.7,210.8 565.7,211.2 566.7,210.7 567.7,211.8 568.7,210.9 569.7,210.6 570.7,211.5 571.7,209.0 572.7,211.0 573.7,211.4 574.7,210.6 575.7,210.0 576.7,209.6 577.7,211.6 578.7,208.0 579.7,210.5 580.7,210.7 581.7,211.3 582.7,209.8 583.7,205.9 584.7,211.1 585.7,211.2 586.7,211.8 587.7,211.0 588.7,209.9 589.7,210.7 590.7,210.6 591.7,210.7 592.7,212.2 593.7,210.5 594.7,210.1 595.7,210.5 596.7,210.7 597.7,212.2 598.7,210.0 599.7,211.1 600.7,210.5 601.7,211.5 602.7,211.0 603.7,210.4 604.7,210.9 605.7,209.1 606.7,209.6 607.7,210.2 608.7,210.4 609.7,211.3 610.7,212.1 611.7,210.5 612.7,211.1 613.7,210.7 614.7,206.1 615.7,211.3 616.7,210.7 617.7,210.9 618.7,210.8 619.7,210.2 620.7,211.3 621.7,210.5 622.7,210.5 623.7,210.9 624.7,208.0 625.7,210.1 626.7,210.4 627.7,211.0 628.7,211.2 629.7,210.9 630.7,210.9 631.7,211.2 632.7,210.9 633.7,211.5 634.7,210.6 635.7,210.6 636.7,211.0 637.7,211.2 638.7,210.8 639.7,210.4 640.7,211.1 641.7,211.0 642.7,211.4 643.7,210.5 644.7,210.4 645.7,210.5 646.7,210.9 647.7,211.0 648.7,211.1 649.7,210.4 650.7,210.7 651.7,210.5 652.7,209.5 653.7,211.2 654.7,210.7 655.7,210.9 656.7,210.3 657.7,211.3 658.7,211.1 659.7,210.6 660.7,210.0 661.7,210.0 662.7,211.0 663.7,210.1 664.7,210.6 665.7,210.0 666.7,210.2 667.7,210.5 668.8,210.7 669.8,210.5 670.8,210.3 671.8,210.0 672.8,211.0 673.8,210.8 674.8,211.3 675.8,210.4 676.8,209.7 677.8,210.5 678.8,210.9 679.8,210.4 680.8,211.3 681.8,210.3 682.8,209.9 683.8,210.6 684.8,210.7 685.8,210.8 686.8,212.0 687.8,211.9 688.8,209.4 689.8,210.7 690.8,209.8 691.8,210.5 692.8,211.0 693.8,210.7 694.8,210.9 695.8,211.1 696.8,211.1 697.8,212.1 698.8,211.7 699.8,210.1 700.8,211.1 701.8,211.0 702.8,210.3 703.8,210.9 704.8,210.3 705.8,211.6 706.8,210.6 707.8,211.5 708.8,210.7 709.8,210.8 710.8,210.7 711.8,211.0 712.8,210.2 713.8,210.1 714.8,211.3 715.8,211.2 716.8,211.4 717.8,210.9 718.8,210.2 719.8,210.3 720.8,211.3 721.8,210.9 722.8,211.9 723.8,211.1 724.8,210.8 725.8,211.8 726.8,210.6 727.8,210.3 728.8,211.2 729.8,210.6 730.8,211.1 731.8,210.6 732.8,211.3 733.8,205.5 734.8,210.9 735.8,210.1 736.8,210.4 737.8,210.6 738.8,210.9 739.8,210.8 740.8,210.6 741.8,210.4 742.8,210.7 743.8,210.1 744.8,210.9 745.8,211.0 746.8,210.8 747.8,211.5 748.8,210.6 749.8,210.5 750.8,210.3 751.8,210.6 752.8,210.3 753.8,211.3 754.8,210.9 755.8,210.1 756.8,211.6 757.8,210.9 758.8,210.5 759.8,210.4 760.8,207.1 761.8,209.8 762.8,209.9 763.8,210.6 764.8,210.5 765.8,210.8 766.8,211.3 767.8,210.7 768.8,209.8 769.8,211.0 770.8,210.2 771.8,211.2 772.8,210.9 773.8,210.4 774.8,211.2 775.8,210.0 776.8,209.9 777.8,210.2 778.8,210.7 779.8,210.0 780.8,211.0 781.8,210.9 782.8,210.0 783.8,210.7 784.8,211.1 785.8,210.2 786.8,210.2 787.8,210.5 788.8,210.8 789.8,210.4 790.8,211.5 791.8,209.9 792.8,210.9 793.8,210.8 794.8,210.3 795.8,210.4 796.8,211.1 797.9,205.7 798.9,210.4 799.9,211.1 800.9,210.6 801.9,210.9 802.9,210.5 803.9,211.6 804.9,210.2 805.9,212.4 806.9,210.9 807.9,211.6 808.9,211.2 809.9,210.8 810.9,210.3 811.9,211.5 812.9,209.4 813.9,211.1 814.9,209.4 815.9,210.2 816.9,209.8 817.9,210.6 818.9,210.8 819.9,209.5 820.9,210.1 821.9,211.0 822.9,210.4 823.9,210.8 824.9,210.8 825.9,209.4 826.9,210.9 827.9,207.2 828.9,210.6 829.9,211.5 830.9,210.5 831.9,210.4 832.9,210.5 833.9,210.3 834.9,211.1 835.9,210.7 836.9,210.8 837.9,211.7 838.9,210.0 839.9,210.8 840.9,210.9 841.9,209.4 842.9,211.1 843.9,210.1 844.9,210.1 845.9,209.3 846.9,210.6 847.9,211.0 848.9,208.3 849.9,211.6 850.9,211.2 851.9,211.1 852.9,211.7 853.9,211.4 854.9,210.7 855.9,210.5 856.9,210.4 857.9,210.4 858.9,209.1 859.9,209.8 860.9,210.9 861.9,210.8 862.9,210.9 863.9,211.1 864.9,210.6 865.9,210.6 866.9,210.7 867.9,210.9 868.9,211.0 869.9,211.2 870.9,209.5 871.9,210.4 872.9,210.8 873.9,210.9 874.9,210.3 875.9,210.2 876.9,211.1 877.9,210.7 878.9,206.8 879.9,211.5 880.9,211.5 881.9,210.9 882.9,211.2 883.9,210.9 884.9,210.1 885.9,210.8 886.9,210.6 887.9,210.2 888.9,211.4 889.9,210.6 890.9,211.7 891.9,210.9 892.9,210.8 893.9,210.3 894.9,211.3 895.9,196.8 896.9,211.2 897.9,211.9 898.9,210.3 899.9,210.9 900.9,210.9 901.9,210.5 902.9,211.1 903.9,210.3 904.9,210.0 905.9,211.2 906.9,210.4 907.9,210.8 908.9,211.1 909.9,210.7 910.9,210.8 911.9,205.9 912.9,210.8 913.9,211.9 914.9,210.9 915.9,211.1 916.9,211.0 917.9,210.8 918.9,210.5 919.9,206.1 920.9,210.8 921.9,211.8 922.9,210.8 923.9,210.6 924.9,210.7 926.0,210.5 927.0,211.1 928.0,209.4 929.0,211.5 930.0,210.1 931.0,211.7 932.0,210.6 933.0,210.9 934.0,211.4 935.0,210.9 936.0,210.4 937.0,208.0 938.0,210.1 939.0,210.7 940.0,211.6 941.0,210.0 942.0,206.5 943.0,210.4 944.0,211.1 945.0,210.1 946.0,211.1 947.0,210.9 948.0,210.8 949.0,211.1 950.0,210.3 951.0,210.8 952.0,211.9 953.0,210.3 954.0,210.3 955.0,211.0 956.0,210.6 957.0,211.1 958.0,211.2 959.0,211.7 960.0,210.1 961.0,211.6 962.0,211.2 963.0,211.4 964.0,211.1 965.0,211.0 966.0,211.6 967.0,211.7 968.0,210.7 969.0,207.0 970.0,210.3 971.0,210.3 972.0,210.5 973.0,210.2 974.0,210.5 975.0,209.8 976.0,211.6 977.0,210.6 978.0,210.5 979.0,210.2 980.0,211.0 981.0,210.8 982.0,210.2 983.0,210.7 984.0,211.0 985.0,210.9 986.0,210.8 987.0,211.0 988.0,210.7 989.0,214.0"/><polyline fill="none" stroke="#4fd3b8" stroke-width="0.8" stroke-linejoin="round" points="348.5,211.4 349.5,211.3 350.5,211.3 351.5,210.8 352.5,211.3 353.5,211.8 354.5,210.6 355.5,211.1 356.5,211.8 357.5,211.2 358.5,210.4 359.5,212.0 360.5,211.1 361.5,211.4 362.5,211.3 363.5,211.0 364.5,210.8 365.5,212.2 366.5,211.2 367.5,211.3 368.5,211.0 369.5,211.5 370.5,210.8 371.5,210.8 372.5,211.8 373.5,211.5 374.5,211.3 375.5,211.4 376.5,211.7 377.5,210.8 378.5,211.1 379.5,210.6 380.5,211.5 381.5,211.2 382.5,211.0 383.5,211.3 384.5,211.6 385.5,211.2 386.5,211.3 387.5,211.3 388.5,211.6 389.5,211.0 390.5,211.4 391.5,211.2 392.5,211.5 393.5,210.8 394.5,211.1 395.5,211.0 396.5,211.4 397.5,211.3 398.5,211.2 399.5,211.1 400.5,211.1 401.5,211.1 402.5,211.6 403.5,211.6 404.5,211.2 405.5,211.2 406.5,211.9 407.5,211.3 408.5,211.3 409.5,211.7 410.5,210.6 411.5,211.3 412.6,211.8 413.6,211.5 414.6,211.2 415.6,211.5 416.6,211.4 417.6,211.4 418.6,211.7 419.6,210.0 420.6,211.1 421.6,211.2 422.6,211.0 423.6,211.2 424.6,211.4 425.6,211.8 426.6,211.4 427.6,211.6 428.6,211.9 429.6,211.6 430.6,210.8 431.6,211.3 432.6,211.6 433.6,211.0 434.6,211.2 435.6,211.5 436.6,211.0 437.6,211.6 438.6,211.8 439.6,211.8 440.6,211.3 441.6,211.6 442.6,211.1 443.6,211.8 444.6,211.3 445.6,211.6 446.6,211.1 447.6,211.6 448.6,211.5 449.6,211.5 450.6,211.0 451.6,211.4 452.6,211.0 453.6,211.3 454.6,211.7 455.6,211.8 456.6,211.3 457.6,211.2 458.6,209.7 459.6,211.6 460.6,211.2 461.6,211.3 462.6,210.9 463.6,211.4 464.6,210.7 465.6,211.5 466.6,211.4 467.6,211.2 468.6,211.2 469.6,211.4 470.6,210.9 471.6,211.2 472.6,211.3 473.6,211.6 474.6,211.2 475.6,211.0 476.6,211.4 477.6,211.7 478.6,211.7 479.6,211.0 480.6,210.8 481.6,211.0 482.6,211.2 483.6,209.7 484.6,211.5 485.6,211.5 486.6,211.5 487.6,211.1 488.6,211.4 489.6,211.6 490.6,211.2 491.6,211.0 492.6,211.4 493.6,211.7 494.6,211.1 495.6,211.5 496.6,211.8 497.6,210.5 498.6,211.4 499.6,210.5 500.6,211.3 501.6,211.1 502.6,211.3 503.6,211.5 504.6,211.6 505.6,211.3 506.6,211.6 507.6,211.6 508.6,211.3 509.6,211.3 510.6,211.6 511.6,211.4 512.6,211.6 513.6,211.3 514.6,211.6 515.6,211.4 516.6,211.4 517.6,210.8 518.6,211.1 519.6,211.4 520.6,211.7 521.6,210.9 522.6,211.0 523.6,211.3 524.6,211.0 525.6,211.6 526.6,211.3 527.6,210.7 528.6,211.4 529.6,211.6 530.6,211.1 531.6,211.4 532.6,210.9 533.6,211.7 534.6,211.3 535.6,210.8 536.6,211.3 537.6,211.0 538.6,211.8 539.6,211.7 540.6,211.0 541.7,211.5 542.7,211.2 543.7,211.3 544.7,211.4 545.7,211.7 546.7,211.5 547.7,211.1 548.7,211.5 549.7,211.3 550.7,210.8 551.7,210.7 552.7,211.5 553.7,211.2 554.7,211.0 555.7,211.3 556.7,211.6 557.7,211.4 558.7,211.3 559.7,211.7 560.7,211.5 561.7,210.6 562.7,211.3 563.7,210.8 564.7,210.3 565.7,211.6 566.7,211.1 567.7,211.2 568.7,211.5 569.7,211.2 570.7,211.2 571.7,211.2 572.7,211.1 573.7,211.6 574.7,211.0 575.7,211.7 576.7,211.5 577.7,211.4 578.7,211.4 579.7,211.2 580.7,211.1 581.7,211.6 582.7,210.9 583.7,211.6 584.7,211.6 585.7,211.6 586.7,211.3 587.7,211.7 588.7,211.1 589.7,211.6 590.7,211.2 591.7,211.3 592.7,211.5 593.7,211.7 594.7,211.5 595.7,211.2 596.7,211.0 597.7,211.3 598.7,211.1 599.7,211.0 600.7,211.7 601.7,211.2 602.7,211.0 603.7,211.5 604.7,211.2 605.7,211.4 606.7,211.3 607.7,211.2 608.7,211.7 609.7,211.3 610.7,211.0 611.7,211.4 612.7,211.6 613.7,211.8 614.7,211.5 615.7,211.4 616.7,211.6 617.7,210.8 618.7,211.4 619.7,211.6 620.7,211.5 621.7,211.2 622.7,211.5 623.7,211.4 624.7,211.3 625.7,211.0 626.7,210.9 627.7,211.3 628.7,211.7 629.7,211.4 630.7,211.2 631.7,211.2 632.7,211.3 633.7,210.5 634.7,211.2 635.7,211.2 636.7,211.3 637.7,211.2 638.7,211.1 639.7,211.2 640.7,211.5 641.7,211.0 642.7,211.1 643.7,211.2 644.7,211.4 645.7,210.9 646.7,211.6 647.7,211.2 648.7,211.5 649.7,211.3 650.7,211.2 651.7,211.8 652.7,210.7 653.7,211.1 654.7,211.2 655.7,212.0 656.7,211.0 657.7,211.2 658.7,211.4 659.7,211.4 660.7,210.8 661.7,211.9 662.7,211.5 663.7,211.5 664.7,211.7 665.7,211.5 666.7,211.7 667.7,211.0 668.8,211.2 669.8,212.1 670.8,210.9 671.8,211.2 672.8,211.1 673.8,211.1 674.8,211.5 675.8,211.5 676.8,211.7 677.8,211.7 678.8,211.7 679.8,211.4 680.8,211.4 681.8,211.5 682.8,210.7 683.8,212.0 684.8,211.3 685.8,211.4 686.8,211.7 687.8,211.3 688.8,211.7 689.8,211.4 690.8,211.4 691.8,211.7 692.8,211.0 693.8,211.6 694.8,211.2 695.8,211.4 696.8,211.4 697.8,211.0 698.8,211.1 699.8,211.4 700.8,211.5 701.8,211.7 702.8,212.0 703.8,211.0 704.8,211.9 705.8,211.6 706.8,211.0 707.8,211.5 708.8,211.3 709.8,211.3 710.8,211.5 711.8,211.6 712.8,211.6 713.8,211.7 714.8,211.4 715.8,211.1 716.8,211.6 717.8,211.3 718.8,211.4 719.8,211.3 720.8,211.3 721.8,211.5 722.8,211.3 723.8,210.9 724.8,211.1 725.8,211.4 726.8,211.2 727.8,211.3 728.8,211.6 729.8,211.4 730.8,211.4 731.8,210.9 732.8,210.9 733.8,211.0 734.8,211.3 735.8,211.1 736.8,211.2 737.8,211.2 738.8,211.7 739.8,211.2 740.8,211.4 741.8,211.3 742.8,211.3 743.8,211.8 744.8,211.4 745.8,211.5 746.8,210.9 747.8,211.1 748.8,210.9 749.8,211.3 750.8,212.0 751.8,211.2 752.8,211.5 753.8,211.0 754.8,211.4 755.8,211.3 756.8,211.6 757.8,211.2 758.8,211.6 759.8,211.5 760.8,211.3 761.8,211.0 762.8,211.2 763.8,211.2 764.8,211.6 765.8,211.3 766.8,211.3 767.8,211.1 768.8,211.0 769.8,211.0 770.8,211.7 771.8,212.0 772.8,210.8 773.8,211.5 774.8,211.0 775.8,211.0 776.8,211.6 777.8,211.5 778.8,211.1 779.8,211.4 780.8,209.8 781.8,211.1 782.8,210.9 783.8,211.0 784.8,211.3 785.8,211.1 786.8,211.3 787.8,211.3 788.8,211.0 789.8,211.4 790.8,211.1 791.8,211.7 792.8,211.1 793.8,211.5 794.8,211.0 795.8,211.6 796.8,211.4 797.9,210.8 798.9,211.1 799.9,211.6 800.9,211.4 801.9,211.4 802.9,211.2 803.9,211.7 804.9,211.6 805.9,211.4 806.9,211.6 807.9,211.5 808.9,211.0 809.9,211.3 810.9,211.4 811.9,211.4 812.9,211.5 813.9,211.4 814.9,211.7 815.9,210.9 816.9,211.1 817.9,211.6 818.9,211.3 819.9,211.3 820.9,211.6 821.9,211.2 822.9,211.5 823.9,210.8 824.9,211.1 825.9,211.4 826.9,211.1 827.9,211.1 828.9,211.0 829.9,211.2 830.9,211.3 831.9,211.5 832.9,211.1 833.9,211.7 834.9,211.5 835.9,211.8 836.9,211.1 837.9,211.1 838.9,211.2 839.9,211.6 840.9,211.1 841.9,211.4 842.9,211.4 843.9,211.3 844.9,211.0 845.9,211.5 846.9,211.2 847.9,211.1 848.9,211.3 849.9,211.1 850.9,211.5 851.9,211.5 852.9,211.4 853.9,211.0 854.9,211.4 855.9,210.9 856.9,211.5 857.9,211.4 858.9,211.4 859.9,211.5 860.9,211.5 861.9,211.7 862.9,210.6 863.9,211.1 864.9,211.7 865.9,211.0 866.9,211.5 867.9,210.8 868.9,211.2 869.9,211.8 870.9,211.2 871.9,211.3 872.9,211.0 873.9,211.1 874.9,209.7 875.9,211.6 876.9,211.3 877.9,210.8 878.9,211.3 879.9,211.7 880.9,211.3 881.9,211.8 882.9,211.9 883.9,211.1 884.9,211.2 885.9,211.2 886.9,211.5 887.9,211.3 888.9,211.4 889.9,211.6 890.9,211.6 891.9,211.6 892.9,211.4 893.9,211.2 894.9,211.0 895.9,211.0 896.9,211.3 897.9,211.7 898.9,211.3 899.9,210.9 900.9,211.3 901.9,211.7 902.9,211.4 903.9,211.3 904.9,211.9 905.9,211.6 906.9,211.0 907.9,211.0 908.9,211.4 909.9,211.0 910.9,210.9 911.9,211.2 912.9,211.2 913.9,211.5 914.9,211.3 915.9,211.4 916.9,211.5 917.9,210.9 918.9,211.1 919.9,211.2 920.9,211.7 921.9,211.3 922.9,211.2 923.9,211.5 924.9,211.6 926.0,211.4 927.0,211.2 928.0,210.7 929.0,211.8 930.0,211.6 931.0,211.3 932.0,211.3 933.0,210.6 934.0,211.2 935.0,211.5 936.0,211.6 937.0,211.2 938.0,210.8 939.0,211.5 940.0,211.7 941.0,211.2 942.0,210.9 943.0,211.4 944.0,211.1 945.0,211.2 946.0,211.2 947.0,211.0 948.0,211.1 949.0,211.1 950.0,211.6 951.0,211.2 952.0,212.0 953.0,211.1 954.0,211.5 955.0,211.5 956.0,211.2 957.0,211.6 958.0,211.4 959.0,211.6 960.0,211.3 961.0,211.3 962.0,211.7 963.0,211.3 964.0,211.3 965.0,211.4 966.0,210.8 967.0,211.4 968.0,211.7 969.0,211.1 970.0,210.9 971.0,211.3 972.0,211.7 973.0,211.3 974.0,211.0 975.0,211.3 976.0,211.9 977.0,211.6 978.0,211.3 979.0,210.9 980.0,211.3 981.0,211.4 982.0,211.3 983.0,211.1 984.0,211.3 985.0,211.2 986.0,211.7 987.0,211.1 988.0,211.4 989.0,214.0"/><polyline fill="none" stroke="#e78fc6" stroke-width="0.8" stroke-linejoin="round" points="348.5,212.6 349.5,212.5 350.5,212.6 351.5,212.5 352.5,212.1 353.5,212.5 354.5,212.8 355.5,212.3 356.5,212.5 357.5,212.4 358.5,212.1 359.5,212.1 360.5,212.1 361.5,212.7 362.5,211.9 363.5,212.9 364.5,212.7 365.5,212.5 366.5,212.5 367.5,212.9 368.5,210.0 369.5,212.5 370.5,208.9 371.5,212.6 372.5,212.1 373.5,212.7 374.5,212.4 375.5,212.6 376.5,212.1 377.5,212.0 378.5,209.6 379.5,212.5 380.5,212.6 381.5,212.2 382.5,212.5 383.5,212.8 384.5,212.4 385.5,212.1 386.5,212.5 387.5,212.7 388.5,212.6 389.5,211.8 390.5,212.1 391.5,213.0 392.5,212.9 393.5,212.1 394.5,211.8 395.5,212.0 396.5,211.9 397.5,212.5 398.5,211.7 399.5,212.6 400.5,212.2 401.5,212.5 402.5,213.0 403.5,212.7 404.5,212.3 405.5,212.2 406.5,211.9 407.5,212.7 408.5,212.2 409.5,212.4 410.5,212.1 411.5,212.5 412.6,212.9 413.6,211.9 414.6,212.4 415.6,212.2 416.6,212.2 417.6,212.0 418.6,212.1 419.6,212.6 420.6,212.5 421.6,212.3 422.6,212.6 423.6,212.4 424.6,212.1 425.6,213.1 426.6,212.7 427.6,212.5 428.6,212.3 429.6,212.0 430.6,212.4 431.6,212.4 432.6,212.1 433.6,212.2 434.6,212.6 435.6,212.0 436.6,212.7 437.6,212.5 438.6,212.6 439.6,212.8 440.6,212.5 441.6,212.2 442.6,212.3 443.6,212.2 444.6,213.1 445.6,212.0 446.6,212.7 447.6,212.2 448.6,212.7 449.6,212.4 450.6,210.2 451.6,212.3 452.6,212.0 453.6,212.0 454.6,212.9 455.6,212.1 456.6,212.6 457.6,212.5 458.6,212.4 459.6,212.3 460.6,212.4 461.6,211.6 462.6,212.8 463.6,212.2 464.6,212.4 465.6,211.0 466.6,212.9 467.6,212.9 468.6,212.1 469.6,212.7 470.6,212.2 471.6,212.3 472.6,211.6 473.6,212.4 474.6,212.8 475.6,212.7 476.6,212.6 477.6,212.0 478.6,212.8 479.6,212.5 480.6,212.9 481.6,212.4 482.6,212.5 483.6,212.0 484.6,212.7 485.6,212.5 486.6,212.7 487.6,212.2 488.6,212.5 489.6,212.5 490.6,210.0 491.6,212.2 492.6,212.8 493.6,211.9 494.6,213.1 495.6,212.4 496.6,212.4 497.6,212.2 498.6,212.5 499.6,212.3 500.6,212.3 501.6,212.7 502.6,212.2 503.6,212.4 504.6,212.2 505.6,212.3 506.6,211.7 507.6,212.3 508.6,212.0 509.6,212.3 510.6,212.0 511.6,212.9 512.6,212.6 513.6,212.0 514.6,211.8 515.6,212.1 516.6,213.0 517.6,212.3 518.6,212.3 519.6,211.7 520.6,212.7 521.6,212.1 522.6,211.6 523.6,212.6 524.6,212.9 525.6,212.4 526.6,211.9 527.6,212.7 528.6,212.5 529.6,212.6 530.6,211.8 531.6,212.0 532.6,212.9 533.6,212.4 534.6,212.6 535.6,212.4 536.6,212.7 537.6,212.0 538.6,212.0 539.6,212.8 540.6,212.3 541.7,212.0 542.7,212.3 543.7,210.9 544.7,212.4 545.7,212.9 546.7,212.7 547.7,212.4 548.7,212.3 549.7,212.7 550.7,212.6 551.7,208.4 552.7,212.9 553.7,212.2 554.7,212.5 555.7,212.5 556.7,212.6 557.7,212.2 558.7,212.6 559.7,211.9 560.7,212.8 561.7,212.7 562.7,212.5 563.7,212.7 564.7,212.5 565.7,212.1 566.7,211.9 567.7,212.5 568.7,212.5 569.7,212.8 570.7,208.8 571.7,212.2 572.7,212.5 573.7,212.3 574.7,212.5 575.7,211.9 576.7,212.6 577.7,212.5 578.7,212.0 579.7,212.5 580.7,212.6 581.7,212.6 582.7,212.1 583.7,211.8 584.7,212.3 585.7,212.0 586.7,212.7 587.7,212.6 588.7,212.3 589.7,211.9 590.7,212.7 591.7,212.2 592.7,213.1 593.7,211.9 594.7,212.6 595.7,212.3 596.7,212.5 597.7,212.5 598.7,212.6 599.7,212.6 600.7,212.7 601.7,212.2 602.7,212.8 603.7,212.8 604.7,212.1 605.7,212.5 606.7,212.5 607.7,212.1 608.7,212.8 609.7,212.2 610.7,212.4 611.7,212.2 612.7,212.8 613.7,212.5 614.7,209.4 615.7,212.4 616.7,212.6 617.7,212.2 618.7,212.2 619.7,213.0 620.7,212.6 621.7,212.3 622.7,211.7 623.7,212.4 624.7,211.9 625.7,212.0 626.7,212.2 627.7,211.9 628.7,212.1 629.7,212.7 630.7,212.3 631.7,212.6 632.7,212.7 633.7,212.3 634.7,212.4 635.7,212.2 636.7,212.9 637.7,212.6 638.7,211.7 639.7,212.6 640.7,210.3 641.7,212.8 642.7,213.1 643.7,212.6 644.7,212.1 645.7,208.6 646.7,212.1 647.7,212.2 648.7,212.8 649.7,212.8 650.7,210.9 651.7,212.8 652.7,212.4 653.7,212.1 654.7,212.3 655.7,212.4 656.7,212.7 657.7,207.9 658.7,212.3 659.7,212.3 660.7,212.5 661.7,212.0 662.7,212.7 663.7,212.4 664.7,212.4 665.7,212.4 666.7,212.6 667.7,212.5 668.8,212.7 669.8,212.8 670.8,212.8 671.8,212.3 672.8,213.3 673.8,212.4 674.8,212.6 675.8,212.0 676.8,212.7 677.8,211.9 678.8,212.3 679.8,212.5 680.8,211.7 681.8,212.2 682.8,212.8 683.8,212.2 684.8,212.9 685.8,212.4 686.8,212.5 687.8,212.5 688.8,211.9 689.8,212.3 690.8,212.4 691.8,212.2 692.8,212.4 693.8,212.8 694.8,212.1 695.8,212.3 696.8,213.0 697.8,211.9 698.8,211.9 699.8,212.6 700.8,212.4 701.8,212.6 702.8,212.3 703.8,212.5 704.8,212.2 705.8,212.4 706.8,212.5 707.8,211.8 708.8,212.5 709.8,212.7 710.8,212.4 711.8,212.6 712.8,212.6 713.8,212.2 714.8,212.2 715.8,212.3 716.8,212.4 717.8,212.4 718.8,212.3 719.8,212.2 720.8,212.1 721.8,212.5 722.8,211.8 723.8,212.1 724.8,211.9 725.8,211.9 726.8,212.2 727.8,212.1 728.8,212.0 729.8,212.4 730.8,212.4 731.8,212.8 732.8,213.0 733.8,212.3 734.8,212.1 735.8,209.1 736.8,212.6 737.8,212.3 738.8,212.1 739.8,212.9 740.8,212.2 741.8,210.5 742.8,212.3 743.8,212.2 744.8,211.8 745.8,212.1 746.8,212.1 747.8,212.2 748.8,212.2 749.8,212.2 750.8,213.0 751.8,212.4 752.8,212.5 753.8,209.9 754.8,212.3 755.8,212.2 756.8,212.1 757.8,212.0 758.8,212.6 759.8,212.5 760.8,211.9 761.8,212.2 762.8,212.2 763.8,212.1 764.8,212.4 765.8,212.3 766.8,212.8 767.8,212.5 768.8,211.6 769.8,212.6 770.8,212.2 771.8,212.2 772.8,212.0 773.8,212.8 774.8,212.5 775.8,212.5 776.8,212.8 777.8,212.1 778.8,211.8 779.8,212.1 780.8,212.7 781.8,212.7 782.8,209.0 783.8,212.5 784.8,212.6 785.8,212.2 786.8,212.4 787.8,212.6 788.8,212.4 789.8,212.6 790.8,212.3 791.8,212.1 792.8,212.1 793.8,211.3 794.8,211.8 795.8,212.4 796.8,211.9 797.9,212.7 798.9,212.9 799.9,212.4 800.9,212.1 801.9,211.8 802.9,212.2 803.9,212.6 804.9,212.2 805.9,212.4 806.9,212.2 807.9,212.5 808.9,212.0 809.9,212.7 810.9,212.6 811.9,212.5 812.9,212.3 813.9,212.4 814.9,212.3 815.9,212.6 816.9,212.9 817.9,211.7 818.9,212.5 819.9,211.9 820.9,212.4 821.9,211.6 822.9,211.6 823.9,212.3 824.9,212.4 825.9,212.5 826.9,212.2 827.9,211.7 828.9,212.0 829.9,212.2 830.9,212.2 831.9,212.3 832.9,212.1 833.9,212.4 834.9,212.7 835.9,212.7 836.9,212.0 837.9,212.6 838.9,212.4 839.9,211.5 840.9,212.5 841.9,212.4 842.9,212.4 843.9,212.3 844.9,212.4 845.9,212.6 846.9,211.5 847.9,212.2 848.9,212.1 849.9,211.6 850.9,212.4 851.9,212.4 852.9,212.5 853.9,212.5 854.9,212.2 855.9,213.1 856.9,212.8 857.9,212.0 858.9,212.6 859.9,212.0 860.9,212.5 861.9,212.1 862.9,212.3 863.9,212.2 864.9,212.6 865.9,212.8 866.9,212.4 867.9,212.4 868.9,212.4 869.9,211.8 870.9,212.5 871.9,212.6 872.9,212.2 873.9,212.3 874.9,212.7 875.9,213.0 876.9,212.2 877.9,212.8 878.9,212.4 879.9,212.3 880.9,212.5 881.9,212.0 882.9,211.9 883.9,212.8 884.9,212.4 885.9,212.3 886.9,212.3 887.9,212.4 888.9,208.2 889.9,212.5 890.9,212.7 891.9,212.0 892.9,212.3 893.9,212.3 894.9,212.2 895.9,212.3 896.9,212.8 897.9,212.4 898.9,212.9 899.9,212.1 900.9,212.2 901.9,212.8 902.9,212.2 903.9,213.5 904.9,213.0 905.9,212.2 906.9,213.1 907.9,212.5 908.9,212.3 909.9,212.2 910.9,212.9 911.9,212.6 912.9,212.3 913.9,211.7 914.9,212.4 915.9,213.0 916.9,212.9 917.9,212.1 918.9,212.7 919.9,212.4 920.9,212.7 921.9,212.0 922.9,212.3 923.9,212.9 924.9,212.2 926.0,212.1 927.0,212.8 928.0,212.6 929.0,212.4 930.0,212.4 931.0,212.5 932.0,212.9 933.0,212.4 934.0,212.2 935.0,211.7 936.0,211.9 937.0,211.7 938.0,212.1 939.0,212.3 940.0,212.1 941.0,212.5 942.0,212.0 943.0,212.1 944.0,212.1 945.0,212.5 946.0,212.2 947.0,212.7 948.0,212.8 949.0,212.2 950.0,211.7 951.0,212.4 952.0,212.1 953.0,212.3 954.0,212.5 955.0,212.4 956.0,212.1 957.0,212.9 958.0,212.0 959.0,212.9 960.0,212.2 961.0,212.0 962.0,212.7 963.0,212.6 964.0,213.2 965.0,212.6 966.0,212.2 967.0,212.1 968.0,212.6 969.0,212.3 970.0,212.2 971.0,212.7 972.0,210.6 973.0,212.5 974.0,212.4 975.0,212.8 976.0,213.0 977.0,212.3 978.0,212.4 979.0,212.5 980.0,212.2 981.0,212.6 982.0,212.4 983.0,212.6 984.0,213.1 985.0,212.5 986.0,212.1 987.0,212.5 988.0,212.3 989.0,214.0"/><polyline fill="none" stroke="#d8c943" stroke-width="0.8" stroke-linejoin="round" points="348.5,213.0 349.5,213.1 350.5,213.2 351.5,213.4 352.5,213.3 353.5,213.2 354.5,213.4 355.5,213.0 356.5,213.5 357.5,213.2 358.5,213.3 359.5,213.3 360.5,213.1 361.5,213.1 362.5,213.1 363.5,213.1 364.5,213.3 365.5,213.3 366.5,213.3 367.5,213.1 368.5,212.8 369.5,213.3 370.5,213.2 371.5,212.9 372.5,213.4 373.5,213.1 374.5,213.1 375.5,213.0 376.5,213.3 377.5,213.1 378.5,213.0 379.5,213.1 380.5,213.0 381.5,213.3 382.5,213.2 383.5,212.9 384.5,213.1 385.5,213.1 386.5,213.1 387.5,213.3 388.5,213.0 389.5,213.3 390.5,213.5 391.5,213.3 392.5,213.4 393.5,213.1 394.5,213.5 395.5,213.1 396.5,213.1 397.5,213.2 398.5,213.0 399.5,213.1 400.5,213.3 401.5,213.1 402.5,213.1 403.5,213.0 404.5,213.3 405.5,213.2 406.5,213.0 407.5,212.7 408.5,213.3 409.5,213.4 410.5,213.0 411.5,213.1 412.6,213.1 413.6,213.1 414.6,213.1 415.6,213.1 416.6,213.1 417.6,213.0 418.6,213.1 419.6,213.2 420.6,213.1 421.6,212.9 422.6,213.2 423.6,213.2 424.6,213.2 425.6,213.3 426.6,213.3 427.6,213.3 428.6,213.5 429.6,213.2 430.6,213.1 431.6,213.1 432.6,213.0 433.6,213.6 434.6,213.2 435.6,213.1 436.6,213.0 437.6,213.3 438.6,213.1 439.6,213.0 440.6,213.2 441.6,213.4 442.6,213.3 443.6,213.1 444.6,213.1 445.6,213.3 446.6,213.0 447.6,213.3 448.6,213.2 449.6,213.0 450.6,213.1 451.6,213.2 452.6,213.3 453.6,213.1 454.6,212.6 455.6,213.3 456.6,213.2 457.6,213.5 458.6,213.0 459.6,213.3 460.6,213.1 461.6,213.2 462.6,213.1 463.6,213.1 464.6,213.1 465.6,213.2 466.6,213.1 467.6,213.0 468.6,213.0 469.6,213.1 470.6,213.2 471.6,212.9 472.6,213.3 473.6,213.1 474.6,212.9 475.6,213.1 476.6,213.2 477.6,213.4 478.6,213.2 479.6,213.1 480.6,213.1 481.6,213.2 482.6,213.1 483.6,213.1 484.6,213.2 485.6,213.4 486.6,213.3 487.6,213.3 488.6,212.8 489.6,213.4 490.6,213.5 491.6,213.0 492.6,213.2 493.6,213.4 494.6,213.4 495.6,213.0 496.6,213.2 497.6,213.2 498.6,213.2 499.6,213.5 500.6,212.9 501.6,213.2 502.6,213.2 503.6,213.1 504.6,213.1 505.6,212.9 506.6,212.9 507.6,213.2 508.6,213.0 509.6,213.1 510.6,213.0 511.6,213.1 512.6,213.1 513.6,213.2 514.6,213.0 515.6,213.4 516.6,212.9 517.6,213.1 518.6,213.3 519.6,213.0 520.6,213.2 521.6,213.1 522.6,212.9 523.6,213.4 524.6,213.0 525.6,213.2 526.6,213.2 527.6,213.4 528.6,213.0 529.6,213.2 530.6,213.1 531.6,213.3 532.6,213.2 533.6,213.5 534.6,213.2 535.6,213.3 536.6,213.1 537.6,213.2 538.6,213.2 539.6,213.0 540.6,213.2 541.7,213.3 542.7,213.2 543.7,213.3 544.7,213.2 545.7,213.1 546.7,213.1 547.7,213.3 548.7,213.2 549.7,213.3 550.7,213.0 551.7,213.2 552.7,213.1 553.7,212.8 554.7,213.2 555.7,213.2 556.7,212.9 557.7,213.0 558.7,213.0 559.7,213.1 560.7,213.1 561.7,212.9 562.7,213.4 563.7,213.4 564.7,213.2 565.7,213.4 566.7,213.4 567.7,213.5 568.7,213.2 569.7,213.2 570.7,213.1 571.7,213.0 572.7,213.2 573.7,213.1 574.7,212.9 575.7,213.2 576.7,213.2 577.7,213.3 578.7,213.1 579.7,213.4 580.7,213.0 581.7,213.1 582.7,213.2 583.7,213.0 584.7,213.2 585.7,212.9 586.7,213.0 587.7,213.1 588.7,213.3 589.7,213.3 590.7,213.1 591.7,213.3 592.7,213.2 593.7,213.0 594.7,213.1 595.7,213.2 596.7,213.2 597.7,212.8 598.7,213.3 599.7,213.2 600.7,213.2 601.7,213.1 602.7,213.1 603.7,212.9 604.7,213.3 605.7,212.9 606.7,213.1 607.7,212.9 608.7,213.3 609.7,213.2 610.7,213.2 611.7,213.4 612.7,213.2 613.7,213.0 614.7,213.1 615.7,212.9 616.7,213.1 617.7,213.1 618.7,213.2 619.7,213.1 620.7,213.2 621.7,213.1 622.7,213.0 623.7,212.9 624.7,213.2 625.7,213.3 626.7,213.3 627.7,213.0 628.7,213.2 629.7,213.2 630.7,213.0 631.7,213.0 632.7,213.1 633.7,213.0 634.7,213.0 635.7,213.2 636.7,213.0 637.7,212.9 638.7,213.1 639.7,213.5 640.7,213.3 641.7,213.4 642.7,213.2 643.7,213.3 644.7,213.0 645.7,213.3 646.7,213.2 647.7,213.3 648.7,213.1 649.7,213.4 650.7,213.4 651.7,213.4 652.7,213.2 653.7,213.0 654.7,213.1 655.7,212.9 656.7,213.2 657.7,213.1 658.7,213.2 659.7,213.4 660.7,213.1 661.7,213.1 662.7,213.1 663.7,213.1 664.7,212.6 665.7,213.2 666.7,213.1 667.7,212.9 668.8,213.2 669.8,212.8 670.8,213.2 671.8,213.6 672.8,213.3 673.8,212.9 674.8,213.1 675.8,213.1 676.8,212.8 677.8,213.2 678.8,213.5 679.8,213.2 680.8,213.0 681.8,212.5 682.8,212.9 683.8,213.0 684.8,212.9 685.8,213.0 686.8,212.9 687.8,213.1 688.8,213.1 689.8,213.0 690.8,213.2 691.8,213.1 692.8,213.1 693.8,213.1 694.8,213.1 695.8,213.3 696.8,213.0 697.8,213.2 698.8,213.0 699.8,213.0 700.8,213.1 701.8,212.9 702.8,213.2 703.8,213.1 704.8,212.8 705.8,213.1 706.8,213.2 707.8,212.9 708.8,213.0 709.8,213.0 710.8,213.0 711.8,213.2 712.8,213.2 713.8,213.0 714.8,213.0 715.8,212.9 716.8,213.3 717.8,213.2 718.8,213.0 719.8,213.4 720.8,213.0 721.8,213.1 722.8,213.2 723.8,213.4 724.8,213.1 725.8,213.1 726.8,213.3 727.8,213.3 728.8,212.9 729.8,213.1 730.8,213.4 731.8,212.9 732.8,213.2 733.8,213.0 734.8,212.9 735.8,213.0 736.8,213.0 737.8,212.8 738.8,213.4 739.8,213.3 740.8,213.1 741.8,212.9 742.8,213.3 743.8,213.2 744.8,213.1 745.8,213.1 746.8,213.1 747.8,213.0 748.8,213.2 749.8,213.1 750.8,213.0 751.8,213.2 752.8,213.1 753.8,213.3 754.8,213.2 755.8,213.2 756.8,213.4 757.8,213.0 758.8,213.0 759.8,212.9 760.8,213.0 761.8,213.2 762.8,213.5 763.8,213.2 764.8,213.3 765.8,213.1 766.8,213.2 767.8,213.0 768.8,213.3 769.8,213.0 770.8,213.0 771.8,213.0 772.8,212.9 773.8,212.9 774.8,212.8 775.8,213.4 776.8,213.2 777.8,212.9 778.8,213.2 779.8,212.9 780.8,213.1 781.8,213.0 782.8,213.3 783.8,213.1 784.8,213.4 785.8,213.2 786.8,213.2 787.8,213.1 788.8,212.9 789.8,213.4 790.8,212.9 791.8,213.3 792.8,213.1 793.8,213.1 794.8,213.3 795.8,213.3 796.8,213.2 797.9,213.0 798.9,213.4 799.9,213.1 800.9,213.4 801.9,213.2 802.9,213.1 803.9,213.3 804.9,213.0 805.9,213.2 806.9,213.2 807.9,213.3 808.9,213.4 809.9,213.0 810.9,213.1 811.9,213.2 812.9,212.9 813.9,213.3 814.9,213.2 815.9,213.2 816.9,213.2 817.9,212.8 818.9,213.0 819.9,212.9 820.9,213.2 821.9,213.5 822.9,213.2 823.9,213.1 824.9,213.0 825.9,212.9 826.9,213.2 827.9,213.0 828.9,213.0 829.9,213.2 830.9,213.1 831.9,213.2 832.9,213.1 833.9,213.3 834.9,213.0 835.9,213.3 836.9,213.3 837.9,213.2 838.9,213.1 839.9,213.3 840.9,213.3 841.9,213.1 842.9,213.4 843.9,213.4 844.9,213.4 845.9,213.0 846.9,213.3 847.9,213.1 848.9,213.2 849.9,213.1 850.9,213.1 851.9,213.1 852.9,213.2 853.9,213.0 854.9,212.9 855.9,213.1 856.9,213.2 857.9,212.8 858.9,213.0 859.9,213.3 860.9,213.2 861.9,213.0 862.9,213.3 863.9,213.1 864.9,213.0 865.9,213.1 866.9,213.0 867.9,213.1 868.9,212.9 869.9,213.2 870.9,213.2 871.9,213.1 872.9,213.2 873.9,213.1 874.9,213.1 875.9,213.1 876.9,213.2 877.9,213.3 878.9,213.1 879.9,213.0 880.9,213.0 881.9,213.1 882.9,213.1 883.9,213.4 884.9,213.1 885.9,213.0 886.9,213.0 887.9,213.4 888.9,212.9 889.9,213.5 890.9,213.2 891.9,213.3 892.9,213.0 893.9,213.0 894.9,213.2 895.9,212.8 896.9,213.1 897.9,212.9 898.9,213.2 899.9,213.3 900.9,213.4 901.9,213.3 902.9,213.0 903.9,213.2 904.9,212.9 905.9,212.9 906.9,213.1 907.9,213.2 908.9,213.2 909.9,213.3 910.9,213.0 911.9,213.1 912.9,213.2 913.9,213.1 914.9,213.0 915.9,213.0 916.9,213.2 917.9,213.3 918.9,212.9 919.9,213.3 920.9,213.3 921.9,213.2 922.9,213.1 923.9,213.0 924.9,213.1 926.0,213.4 927.0,213.1 928.0,213.0 929.0,213.1 930.0,213.3 931.0,213.0 932.0,213.4 933.0,213.0 934.0,213.2 935.0,213.3 936.0,213.4 937.0,212.9 938.0,213.0 939.0,213.0 940.0,213.0 941.0,213.3 942.0,213.2 943.0,213.1 944.0,213.1 945.0,213.3 946.0,213.2 947.0,213.2 948.0,213.3 949.0,213.1 950.0,213.1 951.0,212.9 952.0,213.2 953.0,213.3 954.0,213.2 955.0,212.9 956.0,213.3 957.0,213.3 958.0,213.1 959.0,213.0 960.0,213.3 961.0,213.2 962.0,213.0 963.0,213.3 964.0,213.1 965.0,212.9 966.0,213.0 967.0,213.1 968.0,213.5 969.0,212.9 970.0,213.4 971.0,213.3 972.0,213.2 973.0,213.3 974.0,213.0 975.0,213.1 976.0,212.9 977.0,213.5 978.0,213.2 979.0,213.0 980.0,213.0 981.0,213.0 982.0,213.0 983.0,213.0 984.0,213.1 985.0,213.1 986.0,213.1 987.0,212.8 988.0,213.2 989.0,214.0"/><polyline fill="none" stroke="#4fa8b8" stroke-width="0.8" stroke-linejoin="round" points="348.5,213.4 349.5,213.5 350.5,213.3 351.5,213.4 352.5,213.3 353.5,213.6 354.5,213.6 355.5,213.5 356.5,213.5 357.5,213.6 358.5,213.5 359.5,213.5 360.5,213.5 361.5,213.5 362.5,213.7 363.5,213.6 364.5,213.4 365.5,213.4 366.5,213.5 367.5,213.5 368.5,213.5 369.5,213.3 370.5,213.4 371.5,213.6 372.5,213.5 373.5,213.7 374.5,213.6 375.5,213.5 376.5,213.6 377.5,213.6 378.5,213.5 379.5,213.5 380.5,213.4 381.5,213.6 382.5,213.7 383.5,213.5 384.5,213.7 385.5,213.2 386.5,213.6 387.5,213.4 388.5,213.6 389.5,213.4 390.5,213.5 391.5,213.6 392.5,213.7 393.5,213.4 394.5,213.5 395.5,213.5 396.5,213.4 397.5,213.5 398.5,213.5 399.5,213.6 400.5,213.3 401.5,213.4 402.5,213.4 403.5,213.3 404.5,213.4 405.5,213.4 406.5,213.3 407.5,213.3 408.5,213.5 409.5,213.4 410.5,213.5 411.5,213.5 412.6,213.5 413.6,213.6 414.6,213.4 415.6,213.5 416.6,213.5 417.6,213.5 418.6,213.4 419.6,213.3 420.6,213.5 421.6,213.5 422.6,213.4 423.6,213.5 424.6,213.6 425.6,213.5 426.6,213.5 427.6,213.5 428.6,213.3 429.6,213.5 430.6,213.6 431.6,213.5 432.6,213.3 433.6,213.4 434.6,213.4 435.6,213.5 436.6,213.4 437.6,213.6 438.6,213.4 439.6,213.6 440.6,213.6 441.6,213.6 442.6,213.4 443.6,213.4 444.6,213.3 445.6,213.4 446.6,213.5 447.6,213.3 448.6,213.5 449.6,213.4 450.6,213.3 451.6,213.5 452.6,213.4 453.6,213.3 454.6,213.4 455.6,213.5 456.6,213.6 457.6,213.3 458.6,213.6 459.6,213.3 460.6,213.5 461.6,213.5 462.6,213.5 463.6,213.3 464.6,213.5 465.6,213.4 466.6,213.4 467.6,213.3 468.6,213.5 469.6,213.6 470.6,213.4 471.6,213.4 472.6,213.5 473.6,213.5 474.6,213.4 475.6,213.4 476.6,213.4 477.6,213.3 478.6,213.5 479.6,213.5 480.6,213.3 481.6,213.5 482.6,213.6 483.6,213.4 484.6,213.5 485.6,213.5 486.6,213.3 487.6,213.6 488.6,213.5 489.6,213.4 490.6,213.2 491.6,213.4 492.6,213.4 493.6,213.5 494.6,213.5 495.6,213.4 496.6,213.5 497.6,213.4 498.6,213.5 499.6,213.4 500.6,213.5 501.6,213.4 502.6,213.4 503.6,213.4 504.6,213.4 505.6,213.5 506.6,213.5 507.6,213.5 508.6,213.6 509.6,213.4 510.6,213.6 511.6,213.6 512.6,213.4 513.6,213.4 514.6,213.5 515.6,213.6 516.6,213.5 517.6,213.3 518.6,213.3 519.6,213.5 520.6,213.3 521.6,213.6 522.6,213.4 523.6,213.4 524.6,213.4 525.6,213.4 526.6,213.3 527.6,213.4 528.6,213.6 529.6,213.4 530.6,213.4 531.6,213.5 532.6,213.6 533.6,213.5 534.6,213.3 535.6,213.5 536.6,213.5 537.6,213.5 538.6,213.4 539.6,213.5 540.6,213.6 541.7,213.6 542.7,213.6 543.7,213.4 544.7,213.6 545.7,213.5 546.7,213.3 547.7,213.4 548.7,213.4 549.7,213.5 550.7,213.3 551.7,213.5 552.7,213.4 553.7,213.3 554.7,213.3 555.7,213.4 556.7,213.4 557.7,213.3 558.7,213.5 559.7,213.4 560.7,213.5 561.7,213.5 562.7,213.5 563.7,213.2 564.7,213.5 565.7,213.7 566.7,213.6 567.7,213.2 568.7,213.3 569.7,213.5 570.7,213.6 571.7,213.4 572.7,213.6 573.7,213.5 574.7,213.5 575.7,213.3 576.7,213.6 577.7,213.4 578.7,213.2 579.7,213.3 580.7,213.4 581.7,213.5 582.7,213.4 583.7,213.4 584.7,213.2 585.7,213.5 586.7,213.5 587.7,213.5 588.7,213.4 589.7,213.3 590.7,213.4 591.7,213.7 592.7,213.5 593.7,213.5 594.7,213.4 595.7,213.5 596.7,213.5 597.7,213.5 598.7,213.4 599.7,213.4 600.7,213.5 601.7,213.5 602.7,213.3 603.7,213.3 604.7,213.4 605.7,213.6 606.7,213.5 607.7,213.5 608.7,213.3 609.7,212.8 610.7,213.3 611.7,213.4 612.7,213.5 613.7,213.3 614.7,213.4 615.7,213.5 616.7,213.6 617.7,213.3 618.7,213.5 619.7,213.5 620.7,213.5 621.7,213.5 622.7,213.6 623.7,213.4 624.7,213.4 625.7,213.5 626.7,213.4 627.7,213.4 628.7,213.6 629.7,213.4 630.7,213.4 631.7,213.3 632.7,213.4 633.7,213.6 634.7,213.4 635.7,213.5 636.7,213.6 637.7,213.5 638.7,213.6 639.7,213.4 640.7,213.6 641.7,213.6 642.7,213.4 643.7,213.3 644.7,213.4 645.7,213.3 646.7,213.6 647.7,213.5 648.7,213.5 649.7,213.5 650.7,213.4 651.7,213.6 652.7,213.4 653.7,213.4 654.7,213.5 655.7,213.5 656.7,213.4 657.7,213.7 658.7,213.4 659.7,213.5 660.7,213.4 661.7,213.5 662.7,213.5 663.7,213.5 664.7,213.4 665.7,213.5 666.7,213.5 667.7,213.5 668.8,213.5 669.8,213.5 670.8,213.4 671.8,213.7 672.8,213.5 673.8,213.4 674.8,213.4 675.8,213.2 676.8,213.5 677.8,213.4 678.8,213.4 679.8,213.7 680.8,213.7 681.8,213.3 682.8,213.4 683.8,213.6 684.8,213.7 685.8,213.7 686.8,213.7 687.8,213.4 688.8,213.4 689.8,213.5 690.8,213.4 691.8,213.5 692.8,213.5 693.8,213.4 694.8,213.4 695.8,213.6 696.8,213.6 697.8,213.3 698.8,213.5 699.8,213.4 700.8,213.5 701.8,213.4 702.8,213.4 703.8,213.2 704.8,213.6 705.8,213.2 706.8,213.3 707.8,213.6 708.8,213.4 709.8,213.2 710.8,213.5 711.8,213.3 712.8,213.4 713.8,213.5 714.8,213.7 715.8,213.4 716.8,213.3 717.8,213.2 718.8,213.5 719.8,213.7 720.8,213.4 721.8,213.4 722.8,213.4 723.8,213.3 724.8,213.5 725.8,213.4 726.8,213.6 727.8,213.3 728.8,213.4 729.8,213.4 730.8,213.5 731.8,213.4 732.8,213.3 733.8,213.6 734.8,213.3 735.8,213.3 736.8,213.4 737.8,213.5 738.8,213.6 739.8,213.4 740.8,213.4 741.8,213.4 742.8,213.4 743.8,213.5 744.8,213.3 745.8,213.4 746.8,213.7 747.8,213.4 748.8,213.4 749.8,213.3 750.8,213.5 751.8,213.4 752.8,213.5 753.8,213.4 754.8,213.2 755.8,213.5 756.8,213.1 757.8,213.4 758.8,213.5 759.8,213.5 760.8,213.4 761.8,213.4 762.8,213.3 763.8,213.5 764.8,213.5 765.8,213.6 766.8,213.4 767.8,213.4 768.8,213.3 769.8,213.5 770.8,213.5 771.8,213.6 772.8,213.7 773.8,213.6 774.8,213.5 775.8,213.3 776.8,213.4 777.8,213.7 778.8,213.6 779.8,213.4 780.8,213.4 781.8,213.4 782.8,213.6 783.8,213.3 784.8,213.3 785.8,213.4 786.8,213.5 787.8,213.6 788.8,213.4 789.8,213.5 790.8,213.5 791.8,213.5 792.8,213.5 793.8,213.4 794.8,213.4 795.8,213.4 796.8,213.7 797.9,213.5 798.9,213.4 799.9,213.5 800.9,213.6 801.9,213.5 802.9,213.2 803.9,213.5 804.9,213.6 805.9,213.5 806.9,213.6 807.9,213.5 808.9,213.4 809.9,213.3 810.9,213.3 811.9,213.4 812.9,213.3 813.9,213.4 814.9,213.5 815.9,213.4 816.9,213.4 817.9,213.6 818.9,213.4 819.9,213.4 820.9,213.5 821.9,213.4 822.9,213.6 823.9,213.5 824.9,213.7 825.9,213.4 826.9,213.2 827.9,213.4 828.9,213.4 829.9,213.6 830.9,213.5 831.9,213.4 832.9,213.6 833.9,213.4 834.9,213.4 835.9,213.5 836.9,213.3 837.9,213.5 838.9,213.3 839.9,213.5 840.9,213.6 841.9,213.6 842.9,213.5 843.9,213.4 844.9,213.5 845.9,213.5 846.9,213.5 847.9,213.4 848.9,213.5 849.9,213.6 850.9,213.4 851.9,213.6 852.9,213.5 853.9,213.4 854.9,213.4 855.9,213.5 856.9,213.4 857.9,213.4 858.9,213.6 859.9,213.5 860.9,213.5 861.9,213.5 862.9,213.4 863.9,213.6 864.9,213.5 865.9,213.7 866.9,213.4 867.9,213.5 868.9,213.4 869.9,213.3 870.9,213.5 871.9,213.5 872.9,213.5 873.9,213.4 874.9,213.5 875.9,213.5 876.9,213.6 877.9,213.2 878.9,213.4 879.9,213.4 880.9,213.5 881.9,213.6 882.9,213.4 883.9,213.4 884.9,213.4 885.9,213.4 886.9,213.5 887.9,213.4 888.9,213.4 889.9,213.2 890.9,213.5 891.9,213.3 892.9,213.4 893.9,213.5 894.9,213.6 895.9,213.3 896.9,213.6 897.9,213.6 898.9,213.5 899.9,213.5 900.9,213.3 901.9,213.6 902.9,213.6 903.9,213.5 904.9,213.7 905.9,213.7 906.9,213.4 907.9,213.5 908.9,213.4 909.9,213.3 910.9,213.6 911.9,213.3 912.9,213.5 913.9,213.6 914.9,213.6 915.9,213.5 916.9,213.6 917.9,213.4 918.9,213.6 919.9,213.5 920.9,213.3 921.9,213.4 922.9,213.5 923.9,213.5 924.9,213.5 926.0,213.4 927.0,213.6 928.0,213.4 929.0,213.4 930.0,213.5 931.0,213.5 932.0,213.5 933.0,213.4 934.0,213.7 935.0,213.6 936.0,213.4 937.0,213.5 938.0,213.5 939.0,213.4 940.0,213.5 941.0,213.6 942.0,213.7 943.0,213.7 944.0,212.4 945.0,213.3 946.0,213.4 947.0,213.5 948.0,213.4 949.0,213.4 950.0,213.5 951.0,213.5 952.0,213.6 953.0,213.5 954.0,213.4 955.0,213.5 956.0,213.5 957.0,213.5 958.0,213.5 959.0,213.7 960.0,213.6 961.0,213.4 962.0,213.5 963.0,213.4 964.0,213.5 965.0,213.6 966.0,213.3 967.0,213.5 968.0,213.5 969.0,213.5 970.0,213.4 971.0,213.6 972.0,213.5 973.0,213.3 974.0,213.4 975.0,213.7 976.0,213.3 977.0,213.3 978.0,213.4 979.0,213.5 980.0,213.5 981.0,213.4 982.0,213.6 983.0,213.5 984.0,213.5 985.0,213.5 986.0,213.4 987.0,213.5 988.0,213.5 989.0,214.0"/>
<circle cx="420.6" cy="198" r="2.4" fill="#fff" stroke="#ef7f90" stroke-width="0.9"/>
<path stroke="#e9e9e9" stroke-width="1" d="M348.5 324.1H989.0"/>
<path stroke="#e9e9e9" stroke-width="1" d="M348.5 296.4H989.0"/>
<path stroke="#e9e9e9" stroke-width="1" d="M348.5 268.7H989.0"/>
<path stroke="#d4d4d4" stroke-width="1" d="M348.5 352.3H989.0"/>
<path stroke="#d6d6d6" stroke-width="1" stroke-dasharray="1,2" d="M473.7 266V351.8"/>
<polyline fill="none" stroke="#f0757d" stroke-width="1" stroke-linejoin="round" points="348.5,278.8 349.5,278.3 350.5,279.3 351.5,278.8 352.5,278.0 353.5,278.5 354.5,279.8 355.5,278.1 356.5,279.8 357.5,279.8 358.5,278.5 359.5,278.7 360.5,278.5 361.5,278.4 362.5,278.3 363.5,277.9 364.5,278.9 365.5,278.7 366.5,279.0 367.5,279.3 368.5,279.2 369.5,278.5 370.5,278.6 371.5,277.8 372.5,278.7 373.5,279.2 374.5,279.6 375.5,278.1 376.5,277.7 377.5,278.4 378.5,278.3 379.5,279.1 380.5,279.3 381.5,279.0 382.5,279.6 383.5,278.5 384.5,279.9 385.5,280.3 386.5,279.4 387.5,278.0 388.5,278.5 389.5,278.4 390.5,278.3 391.5,278.3 392.5,278.0 393.5,278.3 394.5,278.1 395.5,279.9 396.5,279.5 397.5,277.6 398.5,278.5 399.5,278.2 400.5,278.0 401.5,278.9 402.5,280.2 403.5,279.3 404.5,279.4 405.5,279.3 406.5,278.4 407.5,280.0 408.5,278.9 409.5,278.5 410.5,278.3 411.5,273.1 412.6,275.9 413.6,278.7 414.6,278.8 415.6,278.6 416.6,278.4 417.6,278.3 418.6,277.7 419.6,277.8 420.6,279.0 421.6,278.6 422.6,278.8 423.6,277.4 424.6,277.9 425.6,278.9 426.6,277.9 427.6,278.5 428.6,278.8 429.6,279.2 430.6,278.6 431.6,279.5 432.6,278.5 433.6,277.5 434.6,278.2 435.6,279.8 436.6,279.3 437.6,278.7 438.6,278.8 439.6,278.2 440.6,280.2 441.6,278.2 442.6,279.0 443.6,278.3 444.6,278.4 445.6,277.8 446.6,279.6 447.6,278.5 448.6,279.4 449.6,279.9 450.6,279.1 451.6,278.6 452.6,278.1 453.6,280.4 454.6,277.7 455.6,279.0 456.6,277.8 457.6,277.5 458.6,277.8 459.6,280.3 460.6,276.3 461.6,278.8 462.6,280.2 463.6,278.9 464.6,278.5 465.6,279.1 466.6,278.6 467.6,277.8 468.6,277.7 469.6,313.0 470.6,349.7 471.6,349.5 472.6,349.4 473.6,349.5 474.6,349.4 475.6,349.0 476.6,349.7 477.6,349.8 478.6,349.3 479.6,349.4 480.6,349.7 481.6,282.0 482.6,349.8 483.6,349.7 484.6,349.4 485.6,301.9 486.6,278.9 487.6,279.4 488.6,277.7 489.6,279.0 490.6,278.7 491.6,277.8 492.6,278.5 493.6,278.4 494.6,278.7 495.6,278.4 496.6,278.4 497.6,278.9 498.6,277.8 499.6,277.6 500.6,278.0 501.6,278.9 502.6,278.5 503.6,279.0 504.6,278.9 505.6,278.3 506.6,277.8 507.6,277.7 508.6,279.2 509.6,279.2 510.6,278.2 511.6,280.4 512.6,277.6 513.6,278.4 514.6,280.0 515.6,278.0 516.6,277.8 517.6,277.5 518.6,278.5 519.6,278.6 520.6,277.3 521.6,278.0 522.6,277.5 523.6,278.0 524.6,279.3 525.6,278.5 526.6,278.7 527.6,278.3 528.6,278.4 529.6,278.4 530.6,278.9 531.6,278.1 532.6,279.1 533.6,278.0 534.6,277.6 535.6,278.6 536.6,280.2 537.6,278.4 538.6,279.4 539.6,278.4 540.6,279.7 541.7,278.7 542.7,278.2 543.7,279.6 544.7,278.8 545.7,278.5 546.7,278.7 547.7,279.2 548.7,277.9 549.7,279.8 550.7,278.6 551.7,278.1 552.7,279.2 553.7,278.5 554.7,279.1 555.7,278.8 556.7,278.7 557.7,278.6 558.7,279.1 559.7,277.9 560.7,278.1 561.7,278.3 562.7,278.8 563.7,278.2 564.7,278.7 565.7,279.6 566.7,279.1 567.7,278.3 568.7,278.8 569.7,279.6 570.7,277.9 571.7,279.3 572.7,278.2 573.7,278.1 574.7,278.3 575.7,279.8 576.7,279.1 577.7,279.6 578.7,278.3 579.7,278.2 580.7,279.5 581.7,279.0 582.7,278.7 583.7,278.7 584.7,279.5 585.7,278.7 586.7,278.7 587.7,279.2 588.7,278.7 589.7,279.1 590.7,279.3 591.7,278.6 592.7,278.6 593.7,279.6 594.7,278.4 595.7,278.3 596.7,278.8 597.7,278.7 598.7,279.2 599.7,279.6 600.7,279.4 601.7,278.7 602.7,278.3 603.7,278.9 604.7,277.9 605.7,278.6 606.7,279.2 607.7,278.5 608.7,278.5 609.7,277.8 610.7,278.3 611.7,278.8 612.7,277.9 613.7,279.3 614.7,277.5 615.7,278.7 616.7,278.8 617.7,278.3 618.7,278.7 619.7,278.7 620.7,277.6 621.7,277.6 622.7,278.8 623.7,278.1 624.7,279.2 625.7,279.0 626.7,278.4 627.7,278.6 628.7,278.2 629.7,278.9 630.7,278.4 631.7,278.1 632.7,278.3 633.7,279.5 634.7,279.7 635.7,279.0 636.7,279.7 637.7,278.3 638.7,277.2 639.7,278.2 640.7,279.0 641.7,278.2 642.7,278.7 643.7,277.7 644.7,279.0 645.7,278.4 646.7,278.0 647.7,279.1 648.7,277.9 649.7,278.7 650.7,278.2 651.7,278.3 652.7,278.7 653.7,277.8 654.7,279.3 655.7,278.3 656.7,278.8 657.7,278.5 658.7,278.1 659.7,278.1 660.7,278.6 661.7,278.2 662.7,280.2 663.7,278.1 664.7,278.5 665.7,278.6 666.7,278.5 667.7,278.5 668.8,278.1 669.8,279.8 670.8,278.4 671.8,278.4 672.8,277.7 673.8,279.1 674.8,279.5 675.8,278.4 676.8,278.5 677.8,277.2 678.8,278.3 679.8,278.3 680.8,278.5 681.8,278.5 682.8,279.0 683.8,277.5 684.8,280.3 685.8,278.3 686.8,279.2 687.8,278.6 688.8,278.8 689.8,279.2 690.8,279.0 691.8,279.3 692.8,278.2 693.8,278.9 694.8,279.6 695.8,278.2 696.8,278.7 697.8,279.5 698.8,279.1 699.8,277.5 700.8,278.6 701.8,279.2 702.8,278.5 703.8,278.2 704.8,278.3 705.8,278.8 706.8,278.3 707.8,278.7 708.8,279.8 709.8,277.8 710.8,277.1 711.8,278.7 712.8,277.7 713.8,279.1 714.8,279.1 715.8,278.2 716.8,278.1 717.8,278.7 718.8,277.4 719.8,277.5 720.8,278.1 721.8,279.8 722.8,279.3 723.8,278.6 724.8,279.6 725.8,277.6 726.8,278.2 727.8,279.7 728.8,277.3 729.8,278.1 730.8,278.2 731.8,279.0 732.8,279.1 733.8,279.0 734.8,278.7 735.8,278.6 736.8,279.7 737.8,279.9 738.8,280.3 739.8,278.4 740.8,278.7 741.8,278.0 742.8,278.2 743.8,277.6 744.8,278.5 745.8,279.6 746.8,279.4 747.8,277.8 748.8,278.7 749.8,279.2 750.8,279.2 751.8,278.9 752.8,278.2 753.8,278.7 754.8,279.7 755.8,278.7 756.8,279.5 757.8,278.2 758.8,278.1 759.8,279.5 760.8,278.9 761.8,277.8 762.8,278.5 763.8,278.2 764.8,278.0 765.8,279.3 766.8,277.9 767.8,278.7 768.8,279.8 769.8,280.3 770.8,278.1 771.8,279.8 772.8,278.8 773.8,278.3 774.8,280.0 775.8,279.4 776.8,279.2 777.8,278.5 778.8,278.0 779.8,278.1 780.8,278.9 781.8,278.4 782.8,279.5 783.8,278.3 784.8,278.9 785.8,279.1 786.8,278.4 787.8,279.5 788.8,279.3 789.8,278.2 790.8,278.1 791.8,277.8 792.8,279.3 793.8,277.1 794.8,279.1 795.8,278.1 796.8,279.0 797.9,278.3 798.9,277.2 799.9,278.6 800.9,279.8 801.9,277.9 802.9,277.8 803.9,278.6 804.9,277.9 805.9,278.2 806.9,278.3 807.9,278.2 808.9,278.1 809.9,278.2 810.9,278.6 811.9,278.3 812.9,278.9 813.9,278.6 814.9,277.9 815.9,279.2 816.9,278.6 817.9,279.1 818.9,278.5 819.9,279.0 820.9,279.3 821.9,278.7 822.9,278.9 823.9,280.1 824.9,278.7 825.9,278.9 826.9,279.4 827.9,279.2 828.9,279.4 829.9,278.2 830.9,279.3 831.9,278.4 832.9,279.2 833.9,278.6 834.9,279.1 835.9,278.6 836.9,278.2 837.9,278.2 838.9,278.9 839.9,278.7 840.9,278.8 841.9,279.8 842.9,279.3 843.9,278.7 844.9,277.3 845.9,280.4 846.9,278.0 847.9,276.9 848.9,278.3 849.9,278.9 850.9,278.1 851.9,278.4 852.9,278.2 853.9,279.0 854.9,280.2 855.9,278.7 856.9,279.3 857.9,278.7 858.9,277.8 859.9,277.3 860.9,278.1 861.9,277.7 862.9,279.1 863.9,279.1 864.9,279.9 865.9,279.3 866.9,279.1 867.9,279.2 868.9,277.8 869.9,278.7 870.9,279.1 871.9,278.5 872.9,278.5 873.9,279.1 874.9,279.5 875.9,279.1 876.9,278.1 877.9,277.9 878.9,278.4 879.9,278.9 880.9,278.6 881.9,278.7 882.9,279.0 883.9,278.3 884.9,278.4 885.9,277.8 886.9,278.2 887.9,278.9 888.9,279.5 889.9,279.7 890.9,278.7 891.9,278.6 892.9,279.2 893.9,277.9 894.9,278.7 895.9,279.2 896.9,279.3 897.9,278.8 898.9,278.7 899.9,278.8 900.9,278.4 901.9,278.3 902.9,279.4 903.9,279.6 904.9,278.7 905.9,278.5 906.9,278.7 907.9,278.7 908.9,279.7 909.9,278.4 910.9,278.3 911.9,278.4 912.9,278.7 913.9,279.7 914.9,278.8 915.9,277.8 916.9,279.2 917.9,278.7 918.9,277.7 919.9,277.3 920.9,278.7 921.9,280.3 922.9,278.2 923.9,279.1 924.9,279.4 926.0,279.4 927.0,279.9 928.0,278.4 929.0,279.7 930.0,278.3 931.0,278.5 932.0,277.8 933.0,278.6 934.0,278.5 935.0,278.9 936.0,278.4 937.0,279.0 938.0,279.6 939.0,277.9 940.0,278.3 941.0,278.1 942.0,279.9 943.0,277.3 944.0,279.5 945.0,278.5 946.0,278.6 947.0,279.5 948.0,279.6 949.0,278.4 950.0,278.5 951.0,279.0 952.0,278.0 953.0,278.9 954.0,277.6 955.0,277.9 956.0,278.8 957.0,278.0 958.0,278.5 959.0,279.3 960.0,277.8 961.0,278.5 962.0,278.9 963.0,278.2 964.0,278.7 965.0,277.9 966.0,278.7 967.0,278.4 968.0,278.0 969.0,278.8 970.0,277.1 971.0,278.9 972.0,279.4 973.0,277.6 974.0,278.1 975.0,279.1 976.0,279.1 977.0,278.5 978.0,278.9 979.0,278.5 980.0,278.2 981.0,279.7 982.0,277.7 983.0,279.8 984.0,278.9 985.0,279.0 986.0,278.2 987.0,279.2 988.0,279.6 989.0,278.5"/><polyline fill="none" stroke="#5b9fdb" stroke-width="1" stroke-linejoin="round" points="348.5,340.1 349.5,339.4 350.5,341.6 351.5,334.4 352.5,340.4 353.5,342.0 354.5,342.2 355.5,339.7 356.5,341.3 357.5,340.4 358.5,342.4 359.5,339.1 360.5,339.1 361.5,341.1 362.5,339.7 363.5,341.0 364.5,340.9 365.5,341.0 366.5,339.8 367.5,342.3 368.5,342.5 369.5,340.7 370.5,341.4 371.5,340.8 372.5,341.7 373.5,340.8 374.5,341.0 375.5,338.8 376.5,340.4 377.5,341.5 378.5,340.3 379.5,339.6 380.5,338.5 381.5,342.4 382.5,343.6 383.5,340.3 384.5,339.0 385.5,343.7 386.5,339.9 387.5,340.9 388.5,335.8 389.5,340.0 390.5,339.7 391.5,340.9 392.5,341.1 393.5,342.9 394.5,341.8 395.5,338.1 396.5,339.3 397.5,339.1 398.5,340.7 399.5,342.9 400.5,337.6 401.5,340.7 402.5,341.2 403.5,342.5 404.5,338.7 405.5,343.3 406.5,341.4 407.5,342.6 408.5,340.2 409.5,340.3 410.5,342.2 411.5,344.8 412.6,341.1 413.6,341.6 414.6,339.9 415.6,335.8 416.6,342.8 417.6,341.4 418.6,339.3 419.6,339.3 420.6,341.9 421.6,339.4 422.6,342.0 423.6,341.6 424.6,342.8 425.6,341.8 426.6,340.6 427.6,338.7 428.6,340.4 429.6,342.7 430.6,339.1 431.6,341.1 432.6,339.8 433.6,342.8 434.6,334.8 435.6,340.3 436.6,340.8 437.6,336.0 438.6,341.7 439.6,337.4 440.6,342.5 441.6,339.4 442.6,339.7 443.6,329.8 444.6,332.7 445.6,340.8 446.6,340.8 447.6,333.8 448.6,341.9 449.6,333.7 450.6,342.8 451.6,344.1 452.6,340.2 453.6,334.9 454.6,341.2 455.6,339.9 456.6,332.3 457.6,341.5 458.6,341.0 459.6,335.4 460.6,340.2 461.6,342.2 462.6,342.5 463.6,340.2 464.6,344.2 465.6,341.1 466.6,340.5 467.6,340.4 468.6,342.1 469.6,340.1 470.6,342.6 471.6,340.0 472.6,341.9 473.6,339.0 474.6,340.0 475.6,341.3 476.6,340.1 477.6,338.5 478.6,340.3 479.6,342.0 480.6,341.5 481.6,342.2 482.6,338.6 483.6,340.7 484.6,341.9 485.6,340.8 486.6,339.1 487.6,340.7 488.6,340.0 489.6,341.6 490.6,340.8 491.6,340.8 492.6,339.2 493.6,342.6 494.6,341.2 495.6,340.7 496.6,340.2 497.6,342.3 498.6,341.1 499.6,333.7 500.6,341.0 501.6,340.0 502.6,339.4 503.6,340.6 504.6,341.0 505.6,342.8 506.6,340.8 507.6,344.0 508.6,339.5 509.6,338.1 510.6,341.2 511.6,340.6 512.6,340.8 513.6,344.2 514.6,334.5 515.6,341.6 516.6,340.6 517.6,342.8 518.6,341.8 519.6,333.1 520.6,340.1 521.6,340.9 522.6,340.6 523.6,338.5 524.6,335.3 525.6,341.5 526.6,341.6 527.6,340.9 528.6,344.3 529.6,339.9 530.6,342.3 531.6,337.6 532.6,333.5 533.6,338.8 534.6,332.1 535.6,340.4 536.6,337.8 537.6,331.3 538.6,339.8 539.6,342.0 540.6,342.1 541.7,340.8 542.7,334.0 543.7,341.7 544.7,341.3 545.7,341.7 546.7,340.6 547.7,341.4 548.7,340.3 549.7,340.4 550.7,333.0 551.7,341.5 552.7,341.8 553.7,341.0 554.7,340.1 555.7,335.1 556.7,341.0 557.7,338.9 558.7,340.2 559.7,338.5 560.7,340.7 561.7,340.2 562.7,342.5 563.7,340.2 564.7,339.8 565.7,340.7 566.7,342.3 567.7,342.3 568.7,342.0 569.7,342.6 570.7,342.4 571.7,340.8 572.7,340.5 573.7,341.1 574.7,341.5 575.7,339.5 576.7,334.7 577.7,343.8 578.7,340.6 579.7,336.9 580.7,342.2 581.7,339.3 582.7,340.9 583.7,339.4 584.7,339.5 585.7,341.9 586.7,339.0 587.7,338.4 588.7,339.9 589.7,342.7 590.7,332.0 591.7,338.5 592.7,340.1 593.7,340.4 594.7,340.9 595.7,339.1 596.7,340.8 597.7,341.2 598.7,341.6 599.7,340.3 600.7,340.8 601.7,341.1 602.7,334.7 603.7,340.5 604.7,341.6 605.7,339.7 606.7,338.8 607.7,343.3 608.7,339.7 609.7,338.8 610.7,341.9 611.7,341.8 612.7,339.7 613.7,338.8 614.7,337.5 615.7,337.9 616.7,341.8 617.7,341.9 618.7,337.9 619.7,332.1 620.7,341.0 621.7,339.2 622.7,341.8 623.7,340.7 624.7,341.2 625.7,341.5 626.7,342.0 627.7,341.8 628.7,341.7 629.7,339.9 630.7,341.3 631.7,339.6 632.7,339.7 633.7,341.2 634.7,338.3 635.7,340.2 636.7,340.1 637.7,341.0 638.7,340.4 639.7,342.4 640.7,342.1 641.7,341.4 642.7,342.5 643.7,342.2 644.7,340.8 645.7,342.4 646.7,337.8 647.7,340.3 648.7,341.8 649.7,341.9 650.7,337.0 651.7,340.7 652.7,340.6 653.7,339.7 654.7,340.5 655.7,340.2 656.7,340.4 657.7,340.3 658.7,340.0 659.7,343.0 660.7,342.8 661.7,341.2 662.7,343.3 663.7,340.5 664.7,334.9 665.7,338.6 666.7,340.9 667.7,339.2 668.8,341.4 669.8,339.7 670.8,342.4 671.8,343.1 672.8,340.4 673.8,342.3 674.8,341.5 675.8,340.0 676.8,342.3 677.8,341.3 678.8,340.3 679.8,338.3 680.8,339.4 681.8,339.2 682.8,344.0 683.8,335.5 684.8,341.1 685.8,338.9 686.8,342.1 687.8,342.7 688.8,341.2 689.8,342.2 690.8,339.5 691.8,338.2 692.8,342.5 693.8,342.7 694.8,341.7 695.8,342.5 696.8,340.9 697.8,341.9 698.8,339.6 699.8,342.6 700.8,337.5 701.8,338.7 702.8,339.1 703.8,338.1 704.8,338.4 705.8,342.6 706.8,341.1 707.8,342.3 708.8,342.4 709.8,341.3 710.8,341.3 711.8,338.9 712.8,339.0 713.8,342.8 714.8,342.1 715.8,342.0 716.8,341.4 717.8,339.2 718.8,339.6 719.8,339.4 720.8,341.7 721.8,340.2 722.8,342.6 723.8,340.8 724.8,342.2 725.8,332.0 726.8,340.0 727.8,341.9 728.8,331.4 729.8,344.0 730.8,342.7 731.8,341.0 732.8,340.6 733.8,342.2 734.8,338.3 735.8,343.8 736.8,343.1 737.8,340.9 738.8,339.6 739.8,342.0 740.8,338.4 741.8,341.0 742.8,340.1 743.8,339.9 744.8,336.2 745.8,340.9 746.8,340.1 747.8,341.6 748.8,340.2 749.8,341.0 750.8,340.6 751.8,337.2 752.8,339.2 753.8,340.0 754.8,339.9 755.8,340.3 756.8,339.9 757.8,340.1 758.8,341.2 759.8,334.1 760.8,339.5 761.8,339.5 762.8,342.1 763.8,341.7 764.8,336.8 765.8,342.1 766.8,341.3 767.8,342.0 768.8,342.5 769.8,340.3 770.8,340.6 771.8,341.3 772.8,341.6 773.8,339.2 774.8,341.0 775.8,339.5 776.8,339.4 777.8,339.0 778.8,342.3 779.8,333.8 780.8,340.2 781.8,341.8 782.8,339.8 783.8,341.0 784.8,338.3 785.8,340.7 786.8,340.4 787.8,339.6 788.8,341.4 789.8,338.5 790.8,339.7 791.8,339.9 792.8,338.6 793.8,341.0 794.8,339.5 795.8,338.4 796.8,341.0 797.9,338.4 798.9,338.0 799.9,339.1 800.9,339.4 801.9,341.0 802.9,341.6 803.9,341.0 804.9,334.7 805.9,343.8 806.9,339.5 807.9,340.1 808.9,336.1 809.9,342.5 810.9,333.1 811.9,338.9 812.9,340.4 813.9,344.5 814.9,342.0 815.9,341.0 816.9,340.5 817.9,334.0 818.9,339.9 819.9,340.9 820.9,340.0 821.9,339.8 822.9,341.5 823.9,339.9 824.9,339.6 825.9,337.0 826.9,341.7 827.9,343.3 828.9,337.7 829.9,339.0 830.9,340.3 831.9,338.4 832.9,342.4 833.9,341.4 834.9,340.4 835.9,341.0 836.9,341.6 837.9,341.6 838.9,341.3 839.9,331.7 840.9,339.4 841.9,343.2 842.9,343.3 843.9,333.7 844.9,340.2 845.9,341.3 846.9,340.1 847.9,340.2 848.9,341.4 849.9,341.1 850.9,342.2 851.9,341.6 852.9,339.8 853.9,335.2 854.9,341.9 855.9,340.1 856.9,343.0 857.9,339.8 858.9,340.9 859.9,335.0 860.9,340.0 861.9,340.7 862.9,340.8 863.9,341.0 864.9,341.1 865.9,340.7 866.9,342.4 867.9,342.4 868.9,341.1 869.9,342.3 870.9,340.5 871.9,331.9 872.9,340.4 873.9,339.9 874.9,340.4 875.9,338.7 876.9,342.5 877.9,336.5 878.9,342.7 879.9,341.5 880.9,339.3 881.9,341.7 882.9,341.9 883.9,340.1 884.9,340.8 885.9,339.2 886.9,340.0 887.9,342.5 888.9,340.1 889.9,340.3 890.9,340.4 891.9,338.9 892.9,334.2 893.9,341.0 894.9,339.4 895.9,341.6 896.9,341.3 897.9,335.6 898.9,340.3 899.9,343.1 900.9,332.4 901.9,341.1 902.9,341.6 903.9,339.3 904.9,337.9 905.9,337.2 906.9,339.2 907.9,339.1 908.9,340.8 909.9,341.4 910.9,342.4 911.9,339.8 912.9,342.3 913.9,339.9 914.9,339.0 915.9,338.6 916.9,343.3 917.9,333.2 918.9,336.5 919.9,340.8 920.9,341.6 921.9,341.0 922.9,340.1 923.9,340.6 924.9,341.3 926.0,340.3 927.0,339.4 928.0,341.6 929.0,340.5 930.0,341.9 931.0,340.1 932.0,340.0 933.0,339.7 934.0,340.1 935.0,340.8 936.0,334.3 937.0,340.0 938.0,336.6 939.0,342.4 940.0,337.9 941.0,342.1 942.0,342.8 943.0,340.6 944.0,339.2 945.0,336.6 946.0,334.3 947.0,341.0 948.0,341.2 949.0,339.4 950.0,344.4 951.0,336.3 952.0,340.6 953.0,343.8 954.0,341.9 955.0,342.0 956.0,338.7 957.0,343.3 958.0,340.8 959.0,343.3 960.0,342.0 961.0,336.4 962.0,342.8 963.0,337.3 964.0,341.0 965.0,339.9 966.0,339.9 967.0,342.1 968.0,338.4 969.0,340.2 970.0,341.3 971.0,342.7 972.0,337.7 973.0,341.9 974.0,339.7 975.0,341.1 976.0,340.6 977.0,341.4 978.0,339.6 979.0,339.9 980.0,341.3 981.0,341.9 982.0,343.2 983.0,342.7 984.0,341.4 985.0,336.9 986.0,338.3 987.0,341.9 988.0,339.6 989.0,342.4"/><polyline fill="none" stroke="#f6ab62" stroke-width="1" stroke-linejoin="round" points="348.5,341.5 349.5,341.1 350.5,344.0 351.5,343.2 352.5,343.3 353.5,341.0 354.5,340.3 355.5,344.0 356.5,342.1 357.5,342.3 358.5,342.3 359.5,342.7 360.5,341.5 361.5,341.8 362.5,339.2 363.5,344.0 364.5,342.4 365.5,342.5 366.5,337.7 367.5,342.1 368.5,341.9 369.5,342.6 370.5,342.8 371.5,342.0 372.5,342.4 373.5,343.4 374.5,344.4 375.5,342.2 376.5,340.4 377.5,342.7 378.5,341.9 379.5,339.1 380.5,343.3 381.5,338.2 382.5,342.9 383.5,343.2 384.5,340.4 385.5,342.5 386.5,342.7 387.5,341.4 388.5,343.0 389.5,341.6 390.5,341.0 391.5,342.2 392.5,343.0 393.5,342.9 394.5,340.9 395.5,341.1 396.5,340.9 397.5,341.8 398.5,343.1 399.5,338.8 400.5,341.6 401.5,343.2 402.5,342.1 403.5,341.0 404.5,342.5 405.5,343.2 406.5,342.6 407.5,343.0 408.5,342.1 409.5,341.0 410.5,343.8 411.5,342.0 412.6,342.2 413.6,341.8 414.6,343.4 415.6,342.4 416.6,341.5 417.6,340.7 418.6,341.3 419.6,342.1 420.6,341.4 421.6,343.8 422.6,342.3 423.6,341.8 424.6,343.3 425.6,342.4 426.6,340.8 427.6,342.3 428.6,341.8 429.6,343.8 430.6,343.0 431.6,341.4 432.6,341.8 433.6,341.5 434.6,341.7 435.6,342.1 436.6,342.6 437.6,341.6 438.6,343.5 439.6,343.7 440.6,341.9 441.6,341.3 442.6,343.3 443.6,341.2 444.6,328.0 445.6,334.1 446.6,344.2 447.6,343.3 448.6,342.5 449.6,343.2 450.6,340.8 451.6,341.6 452.6,344.3 453.6,339.3 454.6,343.3 455.6,342.0 456.6,344.2 457.6,341.9 458.6,344.0 459.6,342.4 460.6,342.5 461.6,342.1 462.6,342.1 463.6,343.9 464.6,340.7 465.6,341.5 466.6,342.2 467.6,343.5 468.6,342.5 469.6,343.3 470.6,343.4 471.6,341.7 472.6,341.9 473.6,342.7 474.6,339.5 475.6,342.2 476.6,342.6 477.6,341.6 478.6,343.3 479.6,342.3 480.6,341.1 481.6,343.5 482.6,342.2 483.6,342.0 484.6,343.3 485.6,342.0 486.6,342.1 487.6,342.9 488.6,341.5 489.6,342.0 490.6,343.0 491.6,342.6 492.6,342.7 493.6,340.8 494.6,344.4 495.6,341.7 496.6,341.3 497.6,337.6 498.6,341.1 499.6,341.7 500.6,343.8 501.6,342.9 502.6,342.6 503.6,343.0 504.6,341.0 505.6,340.6 506.6,340.9 507.6,341.3 508.6,342.7 509.6,342.9 510.6,342.1 511.6,337.8 512.6,342.5 513.6,341.6 514.6,342.8 515.6,342.5 516.6,342.0 517.6,342.7 518.6,342.5 519.6,342.1 520.6,342.1 521.6,341.1 522.6,342.4 523.6,343.3 524.6,342.0 525.6,342.7 526.6,341.2 527.6,342.7 528.6,342.3 529.6,343.4 530.6,344.1 531.6,342.1 532.6,341.8 533.6,342.0 534.6,341.9 535.6,339.8 536.6,341.4 537.6,342.4 538.6,341.5 539.6,342.0 540.6,342.3 541.7,342.9 542.7,341.2 543.7,341.8 544.7,342.0 545.7,340.9 546.7,341.2 547.7,341.5 548.7,342.8 549.7,341.5 550.7,341.2 551.7,340.3 552.7,341.5 553.7,343.0 554.7,341.9 555.7,342.6 556.7,341.5 557.7,341.6 558.7,343.2 559.7,342.3 560.7,342.1 561.7,341.8 562.7,339.5 563.7,342.3 564.7,342.0 565.7,343.5 566.7,342.3 567.7,340.9 568.7,343.0 569.7,342.4 570.7,342.9 571.7,342.6 572.7,342.4 573.7,342.6 574.7,342.0 575.7,342.3 576.7,341.9 577.7,343.1 578.7,342.1 579.7,342.3 580.7,342.6 581.7,342.0 582.7,342.5 583.7,342.8 584.7,342.1 585.7,341.6 586.7,340.6 587.7,342.3 588.7,341.9 589.7,344.3 590.7,341.9 591.7,341.0 592.7,341.0 593.7,341.5 594.7,340.9 595.7,342.6 596.7,341.2 597.7,344.2 598.7,341.4 599.7,343.7 600.7,341.5 601.7,343.7 602.7,341.1 603.7,342.6 604.7,340.6 605.7,342.6 606.7,342.2 607.7,341.6 608.7,344.3 609.7,342.2 610.7,343.6 611.7,341.2 612.7,340.6 613.7,342.9 614.7,343.3 615.7,343.7 616.7,339.0 617.7,343.2 618.7,341.9 619.7,343.2 620.7,342.6 621.7,341.7 622.7,342.8 623.7,342.8 624.7,342.6 625.7,343.2 626.7,337.1 627.7,341.3 628.7,342.6 629.7,339.9 630.7,341.3 631.7,343.1 632.7,344.6 633.7,342.3 634.7,341.6 635.7,340.6 636.7,341.7 637.7,342.3 638.7,342.0 639.7,342.9 640.7,344.0 641.7,342.9 642.7,340.5 643.7,343.1 644.7,343.0 645.7,343.0 646.7,343.0 647.7,343.4 648.7,343.2 649.7,344.1 650.7,342.0 651.7,342.3 652.7,343.2 653.7,342.6 654.7,340.9 655.7,343.8 656.7,340.4 657.7,342.8 658.7,342.5 659.7,342.4 660.7,342.8 661.7,342.9 662.7,343.2 663.7,342.5 664.7,341.8 665.7,343.6 666.7,342.6 667.7,343.7 668.8,343.8 669.8,343.1 670.8,341.5 671.8,341.4 672.8,342.3 673.8,342.8 674.8,342.5 675.8,341.4 676.8,342.0 677.8,341.5 678.8,342.7 679.8,341.4 680.8,343.0 681.8,341.7 682.8,341.7 683.8,340.3 684.8,343.3 685.8,343.5 686.8,342.2 687.8,343.3 688.8,342.3 689.8,343.0 690.8,343.0 691.8,342.4 692.8,342.2 693.8,342.5 694.8,343.6 695.8,340.5 696.8,341.2 697.8,341.8 698.8,343.7 699.8,341.4 700.8,343.8 701.8,344.2 702.8,342.1 703.8,343.2 704.8,342.8 705.8,341.5 706.8,341.5 707.8,340.5 708.8,343.3 709.8,344.0 710.8,341.4 711.8,341.9 712.8,342.9 713.8,343.3 714.8,342.5 715.8,340.5 716.8,341.5 717.8,341.1 718.8,340.7 719.8,343.5 720.8,343.4 721.8,343.8 722.8,342.6 723.8,343.5 724.8,343.7 725.8,343.3 726.8,342.2 727.8,341.9 728.8,342.0 729.8,343.1 730.8,338.7 731.8,343.0 732.8,342.3 733.8,341.9 734.8,342.2 735.8,342.5 736.8,342.1 737.8,341.0 738.8,342.9 739.8,342.5 740.8,341.4 741.8,339.8 742.8,341.2 743.8,342.1 744.8,343.3 745.8,343.4 746.8,343.5 747.8,342.4 748.8,340.6 749.8,342.3 750.8,341.9 751.8,342.3 752.8,343.6 753.8,341.9 754.8,342.6 755.8,341.8 756.8,341.7 757.8,340.8 758.8,341.8 759.8,340.9 760.8,343.6 761.8,342.8 762.8,340.3 763.8,342.9 764.8,337.4 765.8,342.0 766.8,342.8 767.8,342.8 768.8,344.2 769.8,343.5 770.8,343.5 771.8,340.7 772.8,341.9 773.8,342.0 774.8,345.1 775.8,341.8 776.8,344.0 777.8,342.0 778.8,343.3 779.8,342.7 780.8,340.2 781.8,342.0 782.8,341.3 783.8,342.4 784.8,341.6 785.8,342.9 786.8,338.9 787.8,342.7 788.8,342.5 789.8,342.2 790.8,341.5 791.8,341.9 792.8,343.6 793.8,342.1 794.8,341.5 795.8,342.8 796.8,341.8 797.9,341.8 798.9,343.2 799.9,343.4 800.9,342.3 801.9,342.6 802.9,343.0 803.9,343.6 804.9,342.7 805.9,343.3 806.9,342.5 807.9,342.5 808.9,342.1 809.9,341.3 810.9,342.8 811.9,343.4 812.9,341.0 813.9,342.5 814.9,342.0 815.9,340.9 816.9,341.6 817.9,338.9 818.9,340.3 819.9,340.7 820.9,342.1 821.9,342.8 822.9,341.8 823.9,340.0 824.9,343.9 825.9,342.9 826.9,343.7 827.9,343.2 828.9,343.0 829.9,338.8 830.9,340.5 831.9,342.0 832.9,341.3 833.9,341.3 834.9,340.3 835.9,340.6 836.9,341.0 837.9,341.4 838.9,341.5 839.9,341.7 840.9,341.5 841.9,341.2 842.9,341.9 843.9,342.3 844.9,343.2 845.9,342.9 846.9,343.3 847.9,343.1 848.9,341.7 849.9,344.3 850.9,340.9 851.9,342.0 852.9,341.8 853.9,342.7 854.9,342.5 855.9,343.0 856.9,342.5 857.9,341.9 858.9,343.5 859.9,344.1 860.9,340.7 861.9,342.3 862.9,342.4 863.9,342.2 864.9,341.5 865.9,342.7 866.9,341.0 867.9,343.3 868.9,341.9 869.9,343.0 870.9,344.6 871.9,334.1 872.9,343.0 873.9,343.2 874.9,341.0 875.9,343.0 876.9,342.1 877.9,340.2 878.9,342.9 879.9,345.1 880.9,342.8 881.9,343.6 882.9,338.8 883.9,341.5 884.9,342.4 885.9,339.8 886.9,343.0 887.9,343.3 888.9,340.1 889.9,342.1 890.9,341.4 891.9,341.6 892.9,342.5 893.9,340.7 894.9,342.6 895.9,341.4 896.9,342.3 897.9,342.7 898.9,342.2 899.9,342.5 900.9,341.2 901.9,343.6 902.9,341.7 903.9,342.2 904.9,342.9 905.9,343.3 906.9,342.0 907.9,341.9 908.9,343.0 909.9,343.3 910.9,340.4 911.9,342.1 912.9,343.3 913.9,341.1 914.9,342.3 915.9,341.4 916.9,342.3 917.9,340.6 918.9,342.2 919.9,342.9 920.9,342.9 921.9,341.7 922.9,342.1 923.9,342.5 924.9,342.2 926.0,342.0 927.0,343.7 928.0,341.9 929.0,342.8 930.0,342.2 931.0,342.0 932.0,342.0 933.0,341.2 934.0,342.7 935.0,342.3 936.0,343.5 937.0,342.0 938.0,342.6 939.0,342.2 940.0,341.7 941.0,341.6 942.0,341.9 943.0,342.3 944.0,342.6 945.0,341.9 946.0,340.9 947.0,341.2 948.0,339.1 949.0,342.5 950.0,342.3 951.0,342.9 952.0,342.4 953.0,342.6 954.0,342.7 955.0,342.4 956.0,344.1 957.0,342.0 958.0,341.7 959.0,339.5 960.0,341.9 961.0,341.7 962.0,340.8 963.0,338.7 964.0,341.5 965.0,343.4 966.0,342.1 967.0,341.0 968.0,342.3 969.0,341.2 970.0,338.7 971.0,341.5 972.0,342.5 973.0,342.4 974.0,342.4 975.0,342.3 976.0,342.3 977.0,343.4 978.0,341.9 979.0,342.2 980.0,341.8 981.0,341.5 982.0,341.4 983.0,341.6 984.0,342.0 985.0,343.2 986.0,342.0 987.0,340.8 988.0,344.1 989.0,342.5"/><polyline fill="none" stroke="#6fc46f" stroke-width="0.8" stroke-linejoin="round" points="348.5,345.7 349.5,345.8 350.5,345.5 351.5,345.6 352.5,345.7 353.5,345.9 354.5,345.9 355.5,345.7 356.5,345.9 357.5,345.4 358.5,345.8 359.5,345.8 360.5,345.9 361.5,345.6 362.5,346.1 363.5,345.6 364.5,345.4 365.5,345.7 366.5,345.6 367.5,345.6 368.5,345.6 369.5,345.8 370.5,345.8 371.5,346.1 372.5,345.8 373.5,345.7 374.5,345.5 375.5,346.1 376.5,346.0 377.5,345.8 378.5,345.9 379.5,345.7 380.5,346.1 381.5,345.7 382.5,345.9 383.5,345.4 384.5,345.6 385.5,345.8 386.5,345.7 387.5,345.8 388.5,345.7 389.5,345.9 390.5,345.7 391.5,345.7 392.5,345.8 393.5,345.9 394.5,345.7 395.5,345.8 396.5,345.5 397.5,345.9 398.5,345.5 399.5,345.8 400.5,345.8 401.5,345.7 402.5,345.6 403.5,345.5 404.5,345.5 405.5,345.4 406.5,345.6 407.5,345.5 408.5,345.6 409.5,345.5 410.5,345.6 411.5,345.6 412.6,345.7 413.6,345.6 414.6,345.8 415.6,345.9 416.6,345.6 417.6,345.6 418.6,345.7 419.6,345.3 420.6,346.0 421.6,345.9 422.6,345.8 423.6,345.7 424.6,345.8 425.6,345.4 426.6,345.5 427.6,345.7 428.6,345.5 429.6,345.6 430.6,345.9 431.6,345.8 432.6,345.6 433.6,345.5 434.6,345.9 435.6,346.1 436.6,346.0 437.6,345.5 438.6,346.0 439.6,345.9 440.6,345.6 441.6,345.6 442.6,345.2 443.6,345.4 444.6,345.9 445.6,345.5 446.6,346.3 447.6,345.6 448.6,345.9 449.6,345.6 450.6,345.8 451.6,345.6 452.6,345.9 453.6,345.6 454.6,345.8 455.6,345.8 456.6,346.0 457.6,345.9 458.6,345.8 459.6,345.6 460.6,346.1 461.6,345.7 462.6,345.6 463.6,345.7 464.6,345.9 465.6,345.7 466.6,345.9 467.6,345.5 468.6,346.2 469.6,345.5 470.6,345.9 471.6,345.9 472.6,345.3 473.6,346.1 474.6,345.9 475.6,346.0 476.6,345.5 477.6,345.8 478.6,345.5 479.6,345.4 480.6,345.4 481.6,346.0 482.6,345.6 483.6,346.1 484.6,345.8 485.6,345.6 486.6,345.3 487.6,345.2 488.6,346.2 489.6,345.8 490.6,346.2 491.6,345.9 492.6,345.4 493.6,346.0 494.6,345.7 495.6,345.4 496.6,345.7 497.6,345.5 498.6,345.9 499.6,346.0 500.6,345.3 501.6,346.2 502.6,345.7 503.6,346.2 504.6,345.7 505.6,346.0 506.6,346.0 507.6,345.7 508.6,345.5 509.6,344.9 510.6,345.7 511.6,345.7 512.6,345.9 513.6,345.6 514.6,345.4 515.6,346.0 516.6,345.9 517.6,345.7 518.6,345.9 519.6,345.2 520.6,345.5 521.6,345.3 522.6,345.5 523.6,346.0 524.6,345.6 525.6,345.7 526.6,345.9 527.6,346.0 528.6,345.5 529.6,345.7 530.6,345.6 531.6,345.8 532.6,345.7 533.6,345.5 534.6,345.7 535.6,345.6 536.6,345.4 537.6,345.4 538.6,345.6 539.6,345.8 540.6,345.5 541.7,345.8 542.7,345.6 543.7,345.3 544.7,345.7 545.7,346.0 546.7,346.1 547.7,345.8 548.7,345.4 549.7,345.6 550.7,345.7 551.7,345.6 552.7,346.0 553.7,345.4 554.7,345.8 555.7,345.4 556.7,345.4 557.7,345.8 558.7,345.5 559.7,345.5 560.7,345.8 561.7,345.9 562.7,345.9 563.7,346.0 564.7,346.0 565.7,345.9 566.7,345.6 567.7,345.7 568.7,345.5 569.7,345.7 570.7,345.7 571.7,345.7 572.7,345.8 573.7,345.7 574.7,345.3 575.7,345.4 576.7,345.8 577.7,345.5 578.7,345.8 579.7,345.6 580.7,345.9 581.7,345.7 582.7,346.0 583.7,345.6 584.7,345.7 585.7,345.8 586.7,345.8 587.7,346.0 588.7,345.9 589.7,345.5 590.7,345.7 591.7,345.6 592.7,345.1 593.7,345.6 594.7,345.6 595.7,345.7 596.7,345.8 597.7,345.5 598.7,345.7 599.7,346.1 600.7,345.6 601.7,346.1 602.7,345.4 603.7,345.8 604.7,345.8 605.7,345.7 606.7,345.7 607.7,345.7 608.7,345.7 609.7,345.8 610.7,346.0 611.7,345.2 612.7,345.8 613.7,345.8 614.7,345.5 615.7,345.6 616.7,346.1 617.7,345.8 618.7,345.9 619.7,345.8 620.7,345.8 621.7,345.8 622.7,345.2 623.7,345.7 624.7,345.8 625.7,345.5 626.7,345.9 627.7,345.4 628.7,345.5 629.7,345.4 630.7,345.4 631.7,345.7 632.7,345.3 633.7,346.1 634.7,345.7 635.7,345.7 636.7,345.5 637.7,345.5 638.7,345.7 639.7,345.7 640.7,346.0 641.7,345.5 642.7,345.8 643.7,345.5 644.7,345.4 645.7,346.1 646.7,345.8 647.7,345.8 648.7,345.6 649.7,345.8 650.7,345.7 651.7,345.5 652.7,345.7 653.7,345.7 654.7,345.9 655.7,345.4 656.7,345.4 657.7,345.9 658.7,345.7 659.7,346.1 660.7,345.6 661.7,345.6 662.7,345.2 663.7,345.7 664.7,346.0 665.7,345.8 666.7,345.7 667.7,345.9 668.8,346.0 669.8,345.5 670.8,346.2 671.8,345.8 672.8,346.0 673.8,345.5 674.8,345.5 675.8,345.9 676.8,345.5 677.8,345.5 678.8,345.3 679.8,345.6 680.8,345.7 681.8,345.9 682.8,345.5 683.8,345.7 684.8,345.6 685.8,346.2 686.8,345.9 687.8,345.4 688.8,345.8 689.8,345.8 690.8,345.9 691.8,345.5 692.8,345.7 693.8,345.4 694.8,345.7 695.8,345.4 696.8,345.4 697.8,345.1 698.8,346.0 699.8,345.6 700.8,345.7 701.8,344.7 702.8,345.4 703.8,346.1 704.8,345.9 705.8,345.5 706.8,345.3 707.8,345.8 708.8,345.3 709.8,345.5 710.8,345.8 711.8,345.4 712.8,346.3 713.8,345.7 714.8,345.6 715.8,345.0 716.8,345.9 717.8,345.8 718.8,345.8 719.8,346.0 720.8,345.3 721.8,345.6 722.8,345.6 723.8,345.6 724.8,345.5 725.8,345.9 726.8,345.6 727.8,345.9 728.8,345.6 729.8,345.6 730.8,345.9 731.8,345.9 732.8,345.6 733.8,345.9 734.8,346.1 735.8,345.4 736.8,345.8 737.8,345.5 738.8,345.6 739.8,345.9 740.8,345.6 741.8,345.7 742.8,345.6 743.8,345.4 744.8,345.9 745.8,345.6 746.8,345.7 747.8,345.5 748.8,345.4 749.8,345.8 750.8,345.6 751.8,345.8 752.8,345.7 753.8,345.8 754.8,345.2 755.8,345.8 756.8,345.6 757.8,345.5 758.8,345.7 759.8,345.7 760.8,345.5 761.8,345.7 762.8,345.6 763.8,345.6 764.8,345.8 765.8,345.6 766.8,345.4 767.8,345.8 768.8,345.2 769.8,345.5 770.8,345.5 771.8,345.8 772.8,346.0 773.8,345.8 774.8,346.1 775.8,345.4 776.8,345.6 777.8,345.8 778.8,345.9 779.8,345.2 780.8,345.7 781.8,345.5 782.8,345.9 783.8,345.7 784.8,345.8 785.8,345.6 786.8,345.7 787.8,345.5 788.8,345.7 789.8,345.5 790.8,345.9 791.8,345.4 792.8,345.8 793.8,345.9 794.8,345.7 795.8,345.8 796.8,345.8 797.9,345.9 798.9,345.7 799.9,345.9 800.9,345.7 801.9,345.7 802.9,346.0 803.9,345.9 804.9,345.7 805.9,345.8 806.9,346.1 807.9,345.6 808.9,345.5 809.9,345.9 810.9,345.4 811.9,345.7 812.9,345.3 813.9,345.9 814.9,346.0 815.9,345.7 816.9,345.7 817.9,346.0 818.9,346.2 819.9,345.8 820.9,345.6 821.9,345.9 822.9,345.7 823.9,345.8 824.9,346.2 825.9,345.9 826.9,345.6 827.9,345.7 828.9,345.6 829.9,345.6 830.9,345.9 831.9,345.8 832.9,345.6 833.9,345.4 834.9,345.4 835.9,345.8 836.9,345.8 837.9,345.7 838.9,345.7 839.9,345.9 840.9,345.4 841.9,345.4 842.9,345.7 843.9,345.6 844.9,345.3 845.9,346.0 846.9,345.9 847.9,345.9 848.9,345.4 849.9,345.6 850.9,345.6 851.9,346.0 852.9,345.3 853.9,345.7 854.9,345.3 855.9,345.8 856.9,345.7 857.9,345.8 858.9,345.3 859.9,345.5 860.9,345.6 861.9,345.6 862.9,346.1 863.9,345.7 864.9,345.8 865.9,346.4 866.9,345.5 867.9,345.7 868.9,345.7 869.9,345.9 870.9,345.5 871.9,345.8 872.9,346.0 873.9,346.0 874.9,345.7 875.9,345.6 876.9,345.3 877.9,345.9 878.9,345.9 879.9,345.5 880.9,345.8 881.9,345.9 882.9,345.7 883.9,345.8 884.9,345.5 885.9,345.8 886.9,345.6 887.9,345.9 888.9,345.6 889.9,346.1 890.9,345.6 891.9,345.6 892.9,345.7 893.9,345.8 894.9,345.9 895.9,345.6 896.9,345.4 897.9,345.8 898.9,345.8 899.9,345.9 900.9,345.7 901.9,346.0 902.9,345.7 903.9,345.8 904.9,346.0 905.9,345.8 906.9,345.8 907.9,346.0 908.9,345.9 909.9,345.3 910.9,345.8 911.9,345.7 912.9,345.7 913.9,345.7 914.9,345.9 915.9,345.6 916.9,345.9 917.9,346.1 918.9,345.6 919.9,345.6 920.9,345.8 921.9,345.5 922.9,345.7 923.9,345.8 924.9,345.8 926.0,345.8 927.0,345.2 928.0,345.5 929.0,345.7 930.0,345.3 931.0,345.9 932.0,345.3 933.0,345.4 934.0,345.6 935.0,345.8 936.0,345.7 937.0,345.9 938.0,345.8 939.0,345.3 940.0,345.8 941.0,345.9 942.0,345.5 943.0,345.8 944.0,345.3 945.0,345.6 946.0,345.8 947.0,345.6 948.0,345.8 949.0,345.9 950.0,345.5 951.0,345.8 952.0,345.6 953.0,345.4 954.0,345.6 955.0,345.6 956.0,345.9 957.0,345.5 958.0,345.3 959.0,345.7 960.0,346.0 961.0,345.8 962.0,345.7 963.0,345.9 964.0,345.9 965.0,346.1 966.0,345.6 967.0,345.7 968.0,345.8 969.0,345.7 970.0,345.8 971.0,345.6 972.0,345.6 973.0,345.5 974.0,346.1 975.0,345.7 976.0,345.7 977.0,345.6 978.0,345.9 979.0,345.7 980.0,345.7 981.0,345.9 982.0,345.9 983.0,345.5 984.0,345.8 985.0,345.8 986.0,345.4 987.0,345.5 988.0,345.7 989.0,345.6"/><polyline fill="none" stroke="#a968b8" stroke-width="0.8" stroke-linejoin="round" points="348.5,347.0 349.5,343.8 350.5,346.6 351.5,347.4 352.5,345.7 353.5,346.5 354.5,347.1 355.5,347.2 356.5,347.2 357.5,347.1 358.5,346.8 359.5,346.9 360.5,346.3 361.5,346.2 362.5,342.9 363.5,345.8 364.5,346.5 365.5,347.3 366.5,346.9 367.5,346.9 368.5,347.2 369.5,347.6 370.5,347.6 371.5,346.9 372.5,347.2 373.5,346.1 374.5,347.6 375.5,347.1 376.5,348.2 377.5,347.1 378.5,346.7 379.5,347.4 380.5,345.5 381.5,347.2 382.5,347.4 383.5,347.4 384.5,342.0 385.5,347.9 386.5,347.1 387.5,346.2 388.5,347.2 389.5,347.4 390.5,348.0 391.5,345.9 392.5,346.4 393.5,347.3 394.5,347.5 395.5,348.1 396.5,347.8 397.5,347.4 398.5,346.0 399.5,347.3 400.5,346.8 401.5,347.5 402.5,345.9 403.5,347.6 404.5,346.9 405.5,347.8 406.5,346.7 407.5,348.3 408.5,346.9 409.5,346.8 410.5,347.3 411.5,346.8 412.6,346.9 413.6,345.8 414.6,347.3 415.6,344.2 416.6,347.2 417.6,347.0 418.6,345.4 419.6,347.1 420.6,346.8 421.6,347.0 422.6,347.6 423.6,347.1 424.6,348.5 425.6,345.6 426.6,347.0 427.6,347.2 428.6,347.4 429.6,347.9 430.6,347.6 431.6,347.2 432.6,347.3 433.6,347.9 434.6,348.3 435.6,348.0 436.6,347.8 437.6,345.7 438.6,347.6 439.6,346.2 440.6,347.9 441.6,348.4 442.6,348.2 443.6,346.8 444.6,348.0 445.6,347.9 446.6,346.8 447.6,347.3 448.6,347.9 449.6,345.7 450.6,346.8 451.6,348.0 452.6,347.0 453.6,344.2 454.6,348.5 455.6,346.2 456.6,346.9 457.6,348.0 458.6,347.8 459.6,347.1 460.6,347.5 461.6,346.3 462.6,347.1 463.6,344.7 464.6,346.6 465.6,348.0 466.6,345.7 467.6,347.5 468.6,347.3 469.6,347.3 470.6,347.8 471.6,347.1 472.6,346.8 473.6,347.9 474.6,345.7 475.6,345.4 476.6,347.4 477.6,347.6 478.6,346.7 479.6,347.4 480.6,347.4 481.6,346.0 482.6,348.6 483.6,347.5 484.6,346.4 485.6,347.9 486.6,347.3 487.6,348.8 488.6,347.6 489.6,347.7 490.6,346.5 491.6,342.7 492.6,346.1 493.6,346.9 494.6,347.4 495.6,346.8 496.6,347.6 497.6,347.5 498.6,346.8 499.6,348.7 500.6,347.6 501.6,346.7 502.6,348.2 503.6,346.0 504.6,348.6 505.6,347.0 506.6,347.8 507.6,344.8 508.6,346.9 509.6,346.8 510.6,347.4 511.6,347.3 512.6,346.3 513.6,346.1 514.6,346.0 515.6,342.7 516.6,347.0 517.6,347.4 518.6,347.9 519.6,348.0 520.6,346.3 521.6,348.4 522.6,347.6 523.6,348.3 524.6,347.1 525.6,346.3 526.6,346.7 527.6,347.4 528.6,346.3 529.6,346.3 530.6,346.6 531.6,346.8 532.6,346.9 533.6,347.5 534.6,342.6 535.6,347.4 536.6,347.2 537.6,347.3 538.6,346.6 539.6,345.7 540.6,347.0 541.7,345.9 542.7,348.1 543.7,347.3 544.7,347.2 545.7,346.6 546.7,347.3 547.7,346.6 548.7,347.7 549.7,347.0 550.7,347.9 551.7,346.8 552.7,347.1 553.7,346.8 554.7,346.7 555.7,346.5 556.7,348.0 557.7,346.2 558.7,346.4 559.7,346.4 560.7,347.4 561.7,347.6 562.7,347.8 563.7,346.8 564.7,346.4 565.7,347.4 566.7,346.3 567.7,347.5 568.7,346.9 569.7,347.1 570.7,348.0 571.7,346.2 572.7,347.8 573.7,347.0 574.7,347.1 575.7,347.4 576.7,347.6 577.7,346.6 578.7,346.2 579.7,347.4 580.7,346.4 581.7,346.8 582.7,346.4 583.7,347.2 584.7,346.3 585.7,345.7 586.7,347.5 587.7,346.9 588.7,348.8 589.7,346.5 590.7,346.7 591.7,347.0 592.7,346.7 593.7,347.4 594.7,347.5 595.7,347.3 596.7,347.3 597.7,347.7 598.7,347.2 599.7,346.9 600.7,347.1 601.7,342.8 602.7,347.5 603.7,347.5 604.7,346.9 605.7,346.7 606.7,347.2 607.7,347.7 608.7,347.5 609.7,347.6 610.7,346.1 611.7,347.3 612.7,346.6 613.7,346.7 614.7,346.4 615.7,347.0 616.7,347.2 617.7,347.6 618.7,347.4 619.7,346.1 620.7,348.2 621.7,347.6 622.7,347.0 623.7,344.1 624.7,348.0 625.7,346.4 626.7,346.9 627.7,347.9 628.7,346.0 629.7,346.8 630.7,346.6 631.7,347.1 632.7,347.6 633.7,347.6 634.7,346.9 635.7,346.3 636.7,346.9 637.7,346.5 638.7,347.7 639.7,346.2 640.7,347.1 641.7,347.4 642.7,346.7 643.7,346.8 644.7,345.9 645.7,348.1 646.7,347.4 647.7,347.9 648.7,347.0 649.7,347.1 650.7,346.9 651.7,341.8 652.7,347.1 653.7,347.0 654.7,347.0 655.7,346.8 656.7,346.9 657.7,346.6 658.7,347.4 659.7,346.3 660.7,347.9 661.7,345.9 662.7,347.7 663.7,347.0 664.7,347.3 665.7,347.3 666.7,346.1 667.7,346.9 668.8,346.8 669.8,347.6 670.8,346.8 671.8,346.2 672.8,345.2 673.8,346.1 674.8,346.6 675.8,346.4 676.8,346.3 677.8,346.6 678.8,346.9 679.8,346.0 680.8,347.4 681.8,346.5 682.8,345.7 683.8,347.4 684.8,346.8 685.8,347.2 686.8,347.1 687.8,348.0 688.8,346.2 689.8,346.4 690.8,347.4 691.8,342.5 692.8,348.0 693.8,346.3 694.8,344.6 695.8,341.5 696.8,347.4 697.8,347.7 698.8,346.8 699.8,347.2 700.8,347.2 701.8,347.2 702.8,348.1 703.8,342.7 704.8,347.1 705.8,346.9 706.8,347.1 707.8,347.5 708.8,347.5 709.8,347.8 710.8,347.0 711.8,341.6 712.8,345.8 713.8,346.1 714.8,346.1 715.8,346.8 716.8,346.6 717.8,346.5 718.8,346.6 719.8,347.6 720.8,348.0 721.8,346.9 722.8,347.9 723.8,347.1 724.8,346.5 725.8,347.0 726.8,347.2 727.8,347.0 728.8,346.3 729.8,347.8 730.8,347.4 731.8,346.1 732.8,348.0 733.8,347.7 734.8,346.6 735.8,348.2 736.8,347.0 737.8,346.8 738.8,347.8 739.8,348.0 740.8,346.2 741.8,347.5 742.8,348.2 743.8,347.0 744.8,347.7 745.8,346.8 746.8,347.5 747.8,346.6 748.8,342.8 749.8,347.1 750.8,347.9 751.8,346.8 752.8,345.7 753.8,347.0 754.8,342.7 755.8,347.0 756.8,347.1 757.8,346.6 758.8,347.7 759.8,347.0 760.8,346.2 761.8,348.1 762.8,346.0 763.8,347.2 764.8,341.6 765.8,346.7 766.8,348.5 767.8,346.9 768.8,346.4 769.8,346.6 770.8,346.1 771.8,347.6 772.8,347.6 773.8,346.4 774.8,346.9 775.8,347.5 776.8,345.6 777.8,347.6 778.8,346.6 779.8,346.7 780.8,347.2 781.8,346.9 782.8,346.8 783.8,346.6 784.8,347.6 785.8,347.1 786.8,347.0 787.8,347.5 788.8,346.8 789.8,347.3 790.8,347.0 791.8,346.5 792.8,347.7 793.8,346.7 794.8,346.5 795.8,347.5 796.8,346.3 797.9,347.2 798.9,347.1 799.9,346.7 800.9,347.3 801.9,347.8 802.9,346.8 803.9,346.6 804.9,346.0 805.9,345.6 806.9,346.8 807.9,345.9 808.9,347.1 809.9,346.5 810.9,346.8 811.9,348.2 812.9,346.4 813.9,347.4 814.9,348.3 815.9,347.3 816.9,347.0 817.9,345.2 818.9,345.3 819.9,346.6 820.9,346.4 821.9,346.4 822.9,347.2 823.9,346.8 824.9,346.1 825.9,347.2 826.9,347.1 827.9,343.4 828.9,347.3 829.9,346.7 830.9,347.1 831.9,346.7 832.9,347.5 833.9,347.1 834.9,346.9 835.9,346.7 836.9,348.1 837.9,347.4 838.9,344.1 839.9,346.8 840.9,348.0 841.9,347.8 842.9,346.5 843.9,347.9 844.9,346.9 845.9,347.7 846.9,347.2 847.9,346.8 848.9,346.6 849.9,346.6 850.9,348.1 851.9,346.4 852.9,345.9 853.9,347.6 854.9,348.2 855.9,347.4 856.9,347.1 857.9,346.8 858.9,347.8 859.9,346.6 860.9,346.8 861.9,348.2 862.9,346.4 863.9,346.2 864.9,347.3 865.9,346.8 866.9,346.9 867.9,347.7 868.9,347.1 869.9,348.5 870.9,348.2 871.9,346.3 872.9,347.4 873.9,346.7 874.9,347.2 875.9,346.8 876.9,345.9 877.9,346.8 878.9,347.8 879.9,347.3 880.9,346.8 881.9,347.2 882.9,347.9 883.9,348.0 884.9,347.0 885.9,347.1 886.9,346.6 887.9,346.4 888.9,348.5 889.9,347.3 890.9,347.6 891.9,347.0 892.9,347.3 893.9,347.6 894.9,346.9 895.9,347.7 896.9,347.9 897.9,346.8 898.9,347.0 899.9,347.1 900.9,348.4 901.9,347.0 902.9,347.4 903.9,348.3 904.9,347.2 905.9,344.1 906.9,347.3 907.9,341.6 908.9,346.6 909.9,347.8 910.9,347.6 911.9,347.5 912.9,346.6 913.9,348.3 914.9,346.6 915.9,346.6 916.9,346.6 917.9,345.7 918.9,346.3 919.9,346.8 920.9,347.9 921.9,347.4 922.9,347.5 923.9,348.1 924.9,335.2 926.0,346.9 927.0,346.6 928.0,345.9 929.0,346.8 930.0,347.8 931.0,347.2 932.0,347.0 933.0,347.6 934.0,346.4 935.0,347.9 936.0,345.9 937.0,346.3 938.0,345.5 939.0,346.3 940.0,346.8 941.0,346.8 942.0,347.2 943.0,348.7 944.0,342.2 945.0,347.2 946.0,346.2 947.0,345.6 948.0,347.7 949.0,347.0 950.0,347.2 951.0,337.4 952.0,346.5 953.0,347.3 954.0,348.0 955.0,346.2 956.0,346.6 957.0,345.0 958.0,346.0 959.0,346.6 960.0,348.8 961.0,347.2 962.0,346.3 963.0,347.7 964.0,348.2 965.0,346.8 966.0,344.5 967.0,347.4 968.0,347.3 969.0,346.8 970.0,346.5 971.0,346.8 972.0,347.1 973.0,347.1 974.0,345.9 975.0,347.1 976.0,347.0 977.0,347.2 978.0,347.0 979.0,348.7 980.0,344.2 981.0,346.7 982.0,346.8 983.0,347.4 984.0,346.6 985.0,347.9 986.0,346.5 987.0,347.0 988.0,346.8 989.0,346.8"/><polyline fill="none" stroke="#cf735c" stroke-width="0.8" stroke-linejoin="round" points="348.5,349.5 349.5,348.3 350.5,349.7 351.5,348.5 352.5,348.9 353.5,348.3 354.5,348.5 355.5,347.8 356.5,348.5 357.5,348.4 358.5,349.0 359.5,348.8 360.5,349.6 361.5,348.5 362.5,349.2 363.5,348.3 364.5,348.4 365.5,347.6 366.5,348.2 367.5,348.2 368.5,347.6 369.5,348.4 370.5,347.8 371.5,347.8 372.5,347.6 373.5,348.3 374.5,346.6 375.5,349.1 376.5,348.6 377.5,349.0 378.5,349.0 379.5,346.9 380.5,348.5 381.5,348.2 382.5,348.2 383.5,346.5 384.5,348.4 385.5,348.5 386.5,348.4 387.5,348.7 388.5,348.0 389.5,347.4 390.5,348.3 391.5,348.1 392.5,348.5 393.5,348.2 394.5,347.5 395.5,349.2 396.5,348.5 397.5,349.1 398.5,349.0 399.5,344.5 400.5,348.3 401.5,348.3 402.5,348.6 403.5,348.7 404.5,348.2 405.5,348.2 406.5,348.9 407.5,349.2 408.5,348.8 409.5,347.7 410.5,347.9 411.5,348.6 412.6,347.7 413.6,347.9 414.6,349.2 415.6,348.3 416.6,346.4 417.6,347.9 418.6,349.0 419.6,348.6 420.6,348.8 421.6,348.7 422.6,348.6 423.6,349.1 424.6,348.8 425.6,348.9 426.6,348.1 427.6,347.5 428.6,348.5 429.6,349.4 430.6,349.5 431.6,348.3 432.6,347.8 433.6,348.4 434.6,348.9 435.6,349.3 436.6,348.1 437.6,347.5 438.6,348.5 439.6,349.8 440.6,348.4 441.6,347.9 442.6,348.4 443.6,347.1 444.6,348.1 445.6,348.9 446.6,347.9 447.6,348.4 448.6,348.4 449.6,348.6 450.6,348.0 451.6,348.8 452.6,348.4 453.6,348.9 454.6,348.1 455.6,349.1 456.6,348.2 457.6,349.3 458.6,344.3 459.6,345.5 460.6,348.6 461.6,348.8 462.6,348.8 463.6,348.7 464.6,347.3 465.6,350.0 466.6,348.3 467.6,348.4 468.6,348.7 469.6,348.7 470.6,349.4 471.6,349.1 472.6,347.7 473.6,348.9 474.6,348.4 475.6,348.8 476.6,348.4 477.6,348.3 478.6,348.7 479.6,348.1 480.6,348.2 481.6,349.2 482.6,348.5 483.6,348.6 484.6,348.6 485.6,348.5 486.6,348.2 487.6,349.1 488.6,348.3 489.6,348.9 490.6,348.6 491.6,345.1 492.6,349.2 493.6,348.5 494.6,347.6 495.6,349.9 496.6,348.5 497.6,348.0 498.6,348.1 499.6,348.3 500.6,345.0 501.6,347.7 502.6,348.0 503.6,348.3 504.6,346.9 505.6,348.0 506.6,348.2 507.6,348.5 508.6,348.6 509.6,347.9 510.6,348.1 511.6,348.1 512.6,349.2 513.6,348.1 514.6,348.3 515.6,347.4 516.6,348.7 517.6,348.4 518.6,349.1 519.6,348.2 520.6,348.2 521.6,349.2 522.6,349.2 523.6,348.5 524.6,348.0 525.6,348.2 526.6,349.6 527.6,347.7 528.6,348.4 529.6,348.7 530.6,348.5 531.6,348.2 532.6,348.3 533.6,349.0 534.6,348.6 535.6,348.4 536.6,347.8 537.6,349.1 538.6,348.2 539.6,348.2 540.6,347.8 541.7,348.5 542.7,348.6 543.7,349.3 544.7,349.1 545.7,348.6 546.7,348.1 547.7,348.3 548.7,347.5 549.7,348.5 550.7,347.4 551.7,348.5 552.7,344.0 553.7,348.7 554.7,348.9 555.7,348.2 556.7,348.0 557.7,348.7 558.7,348.6 559.7,347.7 560.7,348.3 561.7,349.6 562.7,348.9 563.7,348.6 564.7,347.9 565.7,348.0 566.7,348.5 567.7,349.1 568.7,348.5 569.7,348.4 570.7,348.4 571.7,346.6 572.7,349.0 573.7,348.6 574.7,348.6 575.7,348.8 576.7,348.6 577.7,347.9 578.7,349.1 579.7,349.5 580.7,348.2 581.7,347.6 582.7,349.1 583.7,347.7 584.7,348.7 585.7,348.8 586.7,348.6 587.7,348.6 588.7,348.4 589.7,343.4 590.7,349.0 591.7,347.9 592.7,348.7 593.7,347.7 594.7,347.1 595.7,349.0 596.7,348.5 597.7,348.9 598.7,348.4 599.7,348.4 600.7,348.2 601.7,348.1 602.7,348.3 603.7,348.4 604.7,348.9 605.7,344.3 606.7,349.2 607.7,349.3 608.7,348.4 609.7,348.6 610.7,348.8 611.7,349.1 612.7,348.8 613.7,347.2 614.7,343.0 615.7,347.8 616.7,348.9 617.7,348.7 618.7,347.5 619.7,348.5 620.7,348.9 621.7,348.4 622.7,349.5 623.7,348.6 624.7,348.3 625.7,349.2 626.7,346.6 627.7,348.7 628.7,349.1 629.7,348.3 630.7,347.7 631.7,347.3 632.7,349.3 633.7,345.6 634.7,348.2 635.7,348.4 636.7,349.0 637.7,347.5 638.7,343.4 639.7,348.8 640.7,348.9 641.7,349.6 642.7,348.7 643.7,347.5 644.7,348.4 645.7,348.3 646.7,348.4 647.7,349.9 648.7,348.2 649.7,347.8 650.7,348.2 651.7,348.4 652.7,349.9 653.7,347.6 654.7,348.8 655.7,348.2 656.7,349.2 657.7,348.7 658.7,348.1 659.7,348.6 660.7,346.8 661.7,347.3 662.7,347.8 663.7,348.1 664.7,349.0 665.7,349.8 666.7,348.1 667.7,348.8 668.8,348.4 669.8,343.6 670.8,349.0 671.8,348.4 672.8,348.6 673.8,348.5 674.8,347.9 675.8,349.0 676.8,348.2 677.8,348.1 678.8,348.6 679.8,345.6 680.8,347.8 681.8,348.1 682.8,348.7 683.8,348.9 684.8,348.6 685.8,348.6 686.8,348.9 687.8,348.6 688.8,349.3 689.8,348.2 690.8,348.3 691.8,348.7 692.8,348.9 693.8,348.5 694.8,348.1 695.8,348.8 696.8,348.7 697.8,349.2 698.8,348.1 699.8,348.0 700.8,348.2 701.8,348.6 702.8,348.7 703.8,348.8 704.8,348.1 705.8,348.4 706.8,348.2 707.8,347.1 708.8,348.9 709.8,348.4 710.8,348.6 711.8,347.9 712.8,349.0 713.8,348.8 714.8,348.3 715.8,347.7 716.8,347.7 717.8,348.7 718.8,347.8 719.8,348.3 720.8,347.7 721.8,347.9 722.8,348.2 723.8,348.4 724.8,348.1 725.8,348.0 726.8,347.7 727.8,348.7 728.8,348.5 729.8,349.0 730.8,348.0 731.8,347.4 732.8,348.2 733.8,348.6 734.8,348.1 735.8,349.0 736.8,348.0 737.8,347.6 738.8,348.3 739.8,348.4 740.8,348.5 741.8,349.8 742.8,349.6 743.8,347.1 744.8,348.4 745.8,347.5 746.8,348.2 747.8,348.7 748.8,348.4 749.8,348.6 750.8,348.8 751.8,348.8 752.8,349.8 753.8,349.4 754.8,347.8 755.8,348.8 756.8,348.7 757.8,348.0 758.8,348.6 759.8,347.9 760.8,349.3 761.8,348.2 762.8,349.3 763.8,348.4 764.8,348.5 765.8,348.3 766.8,348.7 767.8,347.9 768.8,347.8 769.8,349.1 770.8,348.9 771.8,349.1 772.8,348.6 773.8,347.8 774.8,347.9 775.8,349.0 776.8,348.6 777.8,349.6 778.8,348.8 779.8,348.5 780.8,349.5 781.8,348.3 782.8,348.0 783.8,348.9 784.8,348.3 785.8,348.8 786.8,348.3 787.8,349.0 788.8,343.1 789.8,348.6 790.8,347.8 791.8,348.1 792.8,348.3 793.8,348.6 794.8,348.5 795.8,348.3 796.8,348.1 797.9,348.4 798.9,347.7 799.9,348.6 800.9,348.7 801.9,348.5 802.9,349.2 803.9,348.3 804.9,348.2 805.9,347.9 806.9,348.3 807.9,348.0 808.9,349.0 809.9,348.6 810.9,347.7 811.9,349.3 812.9,348.6 813.9,348.2 814.9,348.1 815.9,344.6 816.9,347.5 817.9,347.6 818.9,348.3 819.9,348.2 820.9,348.5 821.9,349.0 822.9,348.4 823.9,347.4 824.9,348.7 825.9,347.9 826.9,348.9 827.9,348.6 828.9,348.1 829.9,348.9 830.9,347.6 831.9,347.6 832.9,347.9 833.9,348.4 834.9,347.6 835.9,348.7 836.9,348.6 837.9,347.7 838.9,348.4 839.9,348.8 840.9,347.9 841.9,347.9 842.9,348.2 843.9,348.5 844.9,348.1 845.9,349.2 846.9,347.6 847.9,348.5 848.9,348.5 849.9,348.0 850.9,348.0 851.9,348.8 852.9,343.2 853.9,348.1 854.9,348.8 855.9,348.3 856.9,348.6 857.9,348.2 858.9,349.3 859.9,347.9 860.9,350.2 861.9,348.6 862.9,349.3 863.9,348.9 864.9,348.5 865.9,348.0 866.9,349.2 867.9,347.0 868.9,348.8 869.9,347.0 870.9,347.9 871.9,347.5 872.9,348.3 873.9,348.5 874.9,347.2 875.9,347.8 876.9,348.7 877.9,348.0 878.9,348.5 879.9,348.5 880.9,347.1 881.9,348.6 882.9,344.8 883.9,348.3 884.9,349.2 885.9,348.1 886.9,348.1 887.9,348.2 888.9,347.9 889.9,348.8 890.9,348.4 891.9,348.5 892.9,349.5 893.9,347.7 894.9,348.5 895.9,348.6 896.9,347.1 897.9,348.8 898.9,347.7 899.9,347.8 900.9,346.9 901.9,348.3 902.9,348.7 903.9,346.0 904.9,349.3 905.9,348.9 906.9,348.8 907.9,349.5 908.9,349.1 909.9,348.4 910.9,348.2 911.9,348.1 912.9,348.1 913.9,346.8 914.9,347.5 915.9,348.6 916.9,348.5 917.9,348.6 918.9,348.8 919.9,348.2 920.9,348.3 921.9,348.4 922.9,348.6 923.9,348.7 924.9,348.9 926.0,347.2 927.0,348.1 928.0,348.5 929.0,348.6 930.0,348.0 931.0,347.8 932.0,348.9 933.0,348.4 934.0,344.3 935.0,349.2 936.0,349.2 937.0,348.5 938.0,348.9 939.0,348.6 940.0,347.8 941.0,348.5 942.0,348.3 943.0,347.8 944.0,349.1 945.0,348.3 946.0,349.4 947.0,348.6 948.0,348.5 949.0,348.0 950.0,349.0 951.0,334.1 952.0,348.9 953.0,349.7 954.0,348.0 955.0,348.6 956.0,348.6 957.0,348.2 958.0,348.8 959.0,348.0 960.0,347.7 961.0,348.9 962.0,348.1 963.0,348.5 964.0,348.8 965.0,348.4 966.0,348.5 967.0,343.5 968.0,348.4 969.0,349.6 970.0,348.6 971.0,348.8 972.0,348.6 973.0,348.5 974.0,348.2 975.0,343.7 976.0,348.5 977.0,349.5 978.0,348.5 979.0,348.3 980.0,348.3 981.0,348.2 982.0,348.8 983.0,347.0 984.0,349.2 985.0,347.8 986.0,349.4 987.0,348.3 988.0,348.6 989.0,349.1"/><polyline fill="none" stroke="#4fd3b8" stroke-width="0.8" stroke-linejoin="round" points="348.5,348.9 349.5,349.0 350.5,349.7 351.5,349.3 352.5,349.3 353.5,349.1 354.5,349.2 355.5,349.2 356.5,349.3 357.5,348.8 358.5,348.8 359.5,349.1 360.5,348.9 361.5,349.4 362.5,348.5 363.5,348.7 364.5,349.3 365.5,348.7 366.5,348.5 367.5,348.7 368.5,348.7 369.5,349.6 370.5,348.6 371.5,348.9 372.5,349.0 373.5,348.9 374.5,349.1 375.5,349.2 376.5,349.0 377.5,348.5 378.5,349.3 379.5,348.9 380.5,348.8 381.5,348.9 382.5,349.4 383.5,348.6 384.5,348.7 385.5,349.3 386.5,349.3 387.5,349.1 388.5,349.2 389.5,349.2 390.5,348.2 391.5,349.1 392.5,348.7 393.5,349.1 394.5,349.0 395.5,349.3 396.5,349.3 397.5,349.3 398.5,349.1 399.5,349.0 400.5,349.1 401.5,348.9 402.5,349.2 403.5,349.2 404.5,349.0 405.5,349.1 406.5,348.5 407.5,349.0 408.5,349.5 409.5,348.3 410.5,348.8 411.5,349.5 412.6,349.0 413.6,348.1 414.6,349.7 415.6,348.8 416.6,349.2 417.6,349.0 418.6,348.8 419.6,348.5 420.6,350.0 421.6,348.9 422.6,349.0 423.6,348.7 424.6,349.2 425.6,348.5 426.6,348.5 427.6,349.5 428.6,349.2 429.6,349.0 430.6,349.1 431.6,349.4 432.6,348.5 433.6,348.8 434.6,348.3 435.6,349.2 436.6,348.9 437.6,348.7 438.6,349.0 439.6,349.4 440.6,348.9 441.6,349.1 442.6,349.0 443.6,349.3 444.6,348.7 445.6,349.1 446.6,348.9 447.6,349.3 448.6,348.5 449.6,348.8 450.6,348.7 451.6,349.1 452.6,349.0 453.6,348.9 454.6,348.8 455.6,348.8 456.6,348.8 457.6,349.3 458.6,349.3 459.6,348.9 460.6,348.9 461.6,349.6 462.6,349.0 463.6,349.0 464.6,349.5 465.6,348.2 466.6,349.0 467.6,349.6 468.6,349.2 469.6,348.9 470.6,349.3 471.6,349.1 472.6,349.1 473.6,349.4 474.6,347.7 475.6,348.8 476.6,348.9 477.6,348.7 478.6,349.0 479.6,349.1 480.6,349.5 481.6,349.2 482.6,349.3 483.6,349.6 484.6,349.3 485.6,348.5 486.6,349.0 487.6,349.3 488.6,348.7 489.6,348.9 490.6,349.2 491.6,348.7 492.6,349.3 493.6,349.6 494.6,349.6 495.6,349.0 496.6,349.3 497.6,348.8 498.6,349.5 499.6,349.0 500.6,349.3 501.6,348.8 502.6,349.3 503.6,349.2 504.6,349.2 505.6,348.7 506.6,349.1 507.6,348.7 508.6,349.0 509.6,349.4 510.6,349.5 511.6,349.0 512.6,348.9 513.6,347.4 514.6,349.3 515.6,348.9 516.6,349.0 517.6,348.6 518.6,349.1 519.6,348.4 520.6,349.3 521.6,349.2 522.6,348.9 523.6,348.9 524.6,349.1 525.6,348.6 526.6,348.9 527.6,349.0 528.6,349.3 529.6,348.9 530.6,348.7 531.6,349.1 532.6,349.5 533.6,349.4 534.6,348.7 535.6,348.5 536.6,348.7 537.6,348.9 538.6,347.3 539.6,349.3 540.6,349.2 541.7,349.2 542.7,348.8 543.7,349.1 544.7,349.3 545.7,348.9 546.7,348.7 547.7,349.1 548.7,349.5 549.7,348.8 550.7,349.2 551.7,349.5 552.7,348.1 553.7,349.1 554.7,348.2 555.7,349.0 556.7,348.8 557.7,349.0 558.7,349.2 559.7,349.3 560.7,349.0 561.7,349.3 562.7,349.3 563.7,349.0 564.7,349.1 565.7,349.3 566.7,349.2 567.7,349.3 568.7,349.0 569.7,349.3 570.7,349.1 571.7,349.1 572.7,348.5 573.7,348.8 574.7,349.1 575.7,349.5 576.7,348.6 577.7,348.7 578.7,349.0 579.7,348.7 580.7,349.3 581.7,349.0 582.7,348.4 583.7,349.1 584.7,349.3 585.7,348.8 586.7,349.2 587.7,348.6 588.7,349.4 589.7,349.0 590.7,348.4 591.7,349.0 592.7,348.7 593.7,349.5 594.7,349.4 595.7,348.7 596.7,349.3 597.7,348.9 598.7,349.0 599.7,349.1 600.7,349.4 601.7,349.2 602.7,348.8 603.7,349.2 604.7,349.0 605.7,348.5 606.7,348.4 607.7,349.2 608.7,348.9 609.7,348.7 610.7,349.0 611.7,349.3 612.7,349.1 613.7,349.0 614.7,349.4 615.7,349.2 616.7,348.3 617.7,349.0 618.7,348.5 619.7,348.0 620.7,349.3 621.7,348.8 622.7,348.9 623.7,349.2 624.7,348.9 625.7,348.9 626.7,348.9 627.7,348.8 628.7,349.3 629.7,348.7 630.7,349.4 631.7,349.2 632.7,349.1 633.7,349.1 634.7,348.9 635.7,348.8 636.7,349.4 637.7,348.6 638.7,349.3 639.7,349.3 640.7,349.3 641.7,349.0 642.7,349.4 643.7,348.8 644.7,349.3 645.7,348.9 646.7,349.0 647.7,349.2 648.7,349.5 649.7,349.3 650.7,348.9 651.7,348.7 652.7,349.0 653.7,348.8 654.7,348.7 655.7,349.4 656.7,348.9 657.7,348.7 658.7,349.2 659.7,348.9 660.7,349.1 661.7,349.0 662.7,348.9 663.7,349.5 664.7,349.0 665.7,348.7 666.7,349.1 667.7,349.3 668.8,349.5 669.8,349.2 670.8,349.2 671.8,349.3 672.8,348.5 673.8,349.1 674.8,349.3 675.8,349.2 676.8,348.9 677.8,349.2 678.8,349.1 679.8,349.1 680.8,348.7 681.8,348.6 682.8,349.1 683.8,349.4 684.8,349.1 685.8,348.9 686.8,348.9 687.8,349.0 688.8,348.2 689.8,348.9 690.8,349.0 691.8,349.0 692.8,348.9 693.8,348.8 694.8,348.9 695.8,349.2 696.8,348.7 697.8,348.8 698.8,348.9 699.8,349.1 700.8,348.6 701.8,349.4 702.8,348.9 703.8,349.3 704.8,349.0 705.8,348.9 706.8,349.5 707.8,348.4 708.8,348.8 709.8,348.9 710.8,349.7 711.8,348.7 712.8,348.9 713.8,349.1 714.8,349.1 715.8,348.5 716.8,349.7 717.8,349.3 718.8,349.2 719.8,349.4 720.8,349.2 721.8,349.5 722.8,348.7 723.8,348.9 724.8,349.8 725.8,348.6 726.8,348.9 727.8,348.8 728.8,348.8 729.8,349.2 730.8,349.2 731.8,349.4 732.8,349.4 733.8,349.4 734.8,349.1 735.8,349.1 736.8,349.3 737.8,348.4 738.8,349.7 739.8,349.0 740.8,349.1 741.8,349.4 742.8,349.0 743.8,349.4 744.8,349.1 745.8,349.1 746.8,349.4 747.8,348.7 748.8,349.4 749.8,348.9 750.8,349.1 751.8,349.1 752.8,348.7 753.8,348.8 754.8,349.1 755.8,349.2 756.8,349.5 757.8,349.7 758.8,348.7 759.8,349.6 760.8,349.3 761.8,348.7 762.8,349.2 763.8,349.0 764.8,349.1 765.8,349.2 766.8,349.3 767.8,349.3 768.8,349.4 769.8,349.1 770.8,348.8 771.8,349.4 772.8,349.0 773.8,349.1 774.8,349.0 775.8,349.0 776.8,349.3 777.8,349.0 778.8,348.6 779.8,348.8 780.8,349.1 781.8,348.9 782.8,349.0 783.8,349.4 784.8,349.1 785.8,349.1 786.8,348.6 787.8,348.6 788.8,348.7 789.8,349.0 790.8,348.8 791.8,348.9 792.8,348.9 793.8,349.4 794.8,348.9 795.8,349.1 796.8,349.0 797.9,349.0 798.9,349.6 799.9,349.1 800.9,349.2 801.9,348.6 802.9,348.8 803.9,348.6 804.9,349.0 805.9,349.7 806.9,349.0 807.9,349.2 808.9,348.7 809.9,349.1 810.9,349.0 811.9,349.3 812.9,348.9 813.9,349.3 814.9,349.2 815.9,349.1 816.9,348.7 817.9,348.9 818.9,348.9 819.9,349.4 820.9,349.1 821.9,349.0 822.9,348.8 823.9,348.7 824.9,348.7 825.9,349.4 826.9,349.7 827.9,348.5 828.9,349.2 829.9,348.7 830.9,348.7 831.9,349.3 832.9,349.2 833.9,348.8 834.9,349.2 835.9,347.5 836.9,348.9 837.9,348.6 838.9,348.7 839.9,349.0 840.9,348.8 841.9,349.0 842.9,349.0 843.9,348.7 844.9,349.1 845.9,348.8 846.9,349.4 847.9,348.8 848.9,349.2 849.9,348.7 850.9,349.3 851.9,349.1 852.9,348.5 853.9,348.8 854.9,349.3 855.9,349.1 856.9,349.1 857.9,348.9 858.9,349.4 859.9,349.3 860.9,349.2 861.9,349.4 862.9,349.3 863.9,348.7 864.9,349.0 865.9,349.2 866.9,349.1 867.9,349.2 868.9,349.1 869.9,349.5 870.9,348.6 871.9,348.8 872.9,349.3 873.9,349.0 874.9,349.0 875.9,349.3 876.9,348.9 877.9,349.2 878.9,348.5 879.9,348.8 880.9,349.1 881.9,348.8 882.9,348.8 883.9,348.7 884.9,348.9 885.9,349.1 886.9,349.2 887.9,348.8 888.9,349.4 889.9,349.2 890.9,349.6 891.9,348.8 892.9,348.8 893.9,348.9 894.9,349.3 895.9,348.8 896.9,349.1 897.9,349.2 898.9,349.1 899.9,348.7 900.9,349.2 901.9,348.9 902.9,348.8 903.9,349.0 904.9,348.9 905.9,349.2 906.9,349.2 907.9,349.1 908.9,348.7 909.9,349.1 910.9,348.6 911.9,349.2 912.9,349.1 913.9,349.1 914.9,349.2 915.9,349.2 916.9,349.4 917.9,348.3 918.9,348.8 919.9,349.4 920.9,348.7 921.9,349.3 922.9,348.5 923.9,348.9 924.9,349.5 926.0,348.9 927.0,349.0 928.0,348.7 929.0,348.8 930.0,347.3 931.0,349.3 932.0,349.0 933.0,348.4 934.0,349.0 935.0,349.4 936.0,349.0 937.0,349.5 938.0,349.6 939.0,348.8 940.0,348.9 941.0,349.0 942.0,349.2 943.0,349.0 944.0,349.1 945.0,349.3 946.0,349.3 947.0,349.3 948.0,349.1 949.0,348.9 950.0,348.6 951.0,348.7 952.0,349.0 953.0,349.4 954.0,349.0 955.0,348.6 956.0,349.0 957.0,349.5 958.0,349.1 959.0,349.0 960.0,349.6 961.0,349.3 962.0,348.7 963.0,348.7 964.0,349.1 965.0,348.7 966.0,348.6 967.0,348.9 968.0,348.9 969.0,349.2 970.0,349.0 971.0,349.1 972.0,349.2 973.0,348.6 974.0,348.8 975.0,348.9 976.0,349.4 977.0,349.1 978.0,348.9 979.0,349.3 980.0,349.3 981.0,349.1 982.0,348.9 983.0,348.4 984.0,349.5 985.0,349.4 986.0,349.0 987.0,349.0 988.0,348.3 989.0,348.9"/><polyline fill="none" stroke="#e78fc6" stroke-width="0.8" stroke-linejoin="round" points="348.5,350.2 349.5,350.1 350.5,349.6 351.5,350.9 352.5,350.4 353.5,350.2 354.5,350.6 355.5,350.1 356.5,350.6 357.5,349.8 358.5,350.3 359.5,350.3 360.5,350.0 361.5,350.0 362.5,346.9 363.5,350.6 364.5,349.9 365.5,350.1 366.5,350.1 367.5,350.4 368.5,349.4 369.5,349.9 370.5,349.9 371.5,349.8 372.5,350.8 373.5,349.8 374.5,349.8 375.5,350.2 376.5,350.4 377.5,349.8 378.5,349.7 379.5,350.1 380.5,350.5 381.5,349.8 382.5,349.7 383.5,350.3 384.5,349.9 385.5,350.3 386.5,350.1 387.5,350.1 388.5,349.9 389.5,349.4 390.5,350.0 391.5,350.5 392.5,350.0 393.5,350.0 394.5,350.3 395.5,350.0 396.5,350.2 397.5,347.6 398.5,349.9 399.5,350.1 400.5,349.9 401.5,350.0 402.5,350.8 403.5,350.4 404.5,350.3 405.5,350.4 406.5,350.2 407.5,349.9 408.5,350.3 409.5,350.6 410.5,350.0 411.5,350.2 412.6,350.2 413.6,349.9 414.6,349.8 415.6,349.8 416.6,350.4 417.6,349.6 418.6,350.7 419.6,350.5 420.6,350.2 421.6,350.3 422.6,350.7 423.6,347.7 424.6,350.2 425.6,346.5 426.6,350.4 427.6,349.9 428.6,350.5 429.6,350.1 430.6,350.4 431.6,349.9 432.6,349.8 433.6,347.3 434.6,350.2 435.6,350.4 436.6,349.9 437.6,350.3 438.6,350.5 439.6,350.1 440.6,349.9 441.6,350.2 442.6,350.4 443.6,350.4 444.6,349.6 445.6,349.9 446.6,350.7 447.6,350.7 448.6,349.9 449.6,349.5 450.6,349.7 451.6,349.6 452.6,350.2 453.6,349.4 454.6,350.3 455.6,349.9 456.6,350.3 457.6,350.8 458.6,350.5 459.6,350.0 460.6,349.9 461.6,349.7 462.6,350.5 463.6,350.0 464.6,350.1 465.6,349.9 466.6,350.2 467.6,350.6 468.6,349.6 469.6,350.2 470.6,350.0 471.6,350.0 472.6,349.7 473.6,349.9 474.6,350.4 475.6,350.2 476.6,350.1 477.6,350.4 478.6,350.2 479.6,349.8 480.6,350.8 481.6,350.5 482.6,350.2 483.6,350.1 484.6,349.8 485.6,350.2 486.6,350.1 487.6,349.8 488.6,349.9 489.6,350.3 490.6,349.7 491.6,350.4 492.6,350.3 493.6,350.3 494.6,350.6 495.6,350.3 496.6,349.9 497.6,350.0 498.6,349.9 499.6,350.9 500.6,349.7 501.6,350.5 502.6,349.9 503.6,350.4 504.6,350.2 505.6,347.8 506.6,350.0 507.6,349.7 508.6,349.8 509.6,350.7 510.6,349.9 511.6,350.4 512.6,350.2 513.6,350.1 514.6,350.1 515.6,350.1 516.6,349.4 517.6,350.6 518.6,349.9 519.6,350.2 520.6,348.7 521.6,350.7 522.6,350.6 523.6,349.8 524.6,350.4 525.6,349.9 526.6,350.1 527.6,349.3 528.6,350.1 529.6,350.6 530.6,350.5 531.6,350.4 532.6,349.7 533.6,350.6 534.6,350.2 535.6,350.6 536.6,350.1 537.6,350.3 538.6,349.8 539.6,350.4 540.6,350.2 541.7,350.5 542.7,350.0 543.7,350.3 544.7,350.2 545.7,347.7 546.7,349.9 547.7,350.5 548.7,349.6 549.7,350.9 550.7,350.2 551.7,350.1 552.7,350.0 553.7,350.2 554.7,350.1 555.7,350.1 556.7,350.5 557.7,349.9 558.7,350.1 559.7,349.9 560.7,350.0 561.7,349.4 562.7,350.0 563.7,349.7 564.7,350.1 565.7,349.7 566.7,350.7 567.7,350.3 568.7,349.7 569.7,349.5 570.7,349.9 571.7,350.8 572.7,350.0 573.7,350.1 574.7,349.4 575.7,350.4 576.7,349.9 577.7,349.3 578.7,350.4 579.7,350.6 580.7,350.1 581.7,349.6 582.7,350.4 583.7,350.2 584.7,350.3 585.7,349.6 586.7,349.7 587.7,350.7 588.7,350.2 589.7,350.3 590.7,350.2 591.7,350.4 592.7,349.8 593.7,349.7 594.7,350.5 595.7,350.0 596.7,349.8 597.7,350.1 598.7,348.5 599.7,350.2 600.7,350.6 601.7,350.4 602.7,350.2 603.7,350.1 604.7,350.5 605.7,350.4 606.7,346.0 607.7,350.7 608.7,350.0 609.7,350.3 610.7,350.2 611.7,350.3 612.7,350.0 613.7,350.3 614.7,349.6 615.7,350.6 616.7,350.5 617.7,350.3 618.7,350.5 619.7,350.2 620.7,349.9 621.7,349.6 622.7,350.2 623.7,350.3 624.7,350.6 625.7,346.4 626.7,350.0 627.7,350.2 628.7,350.1 629.7,350.2 630.7,349.6 631.7,350.3 632.7,350.3 633.7,349.7 634.7,350.2 635.7,350.4 636.7,350.4 637.7,349.9 638.7,349.5 639.7,350.1 640.7,349.8 641.7,350.4 642.7,350.3 643.7,350.0 644.7,349.6 645.7,350.4 646.7,349.9 647.7,350.9 648.7,349.6 649.7,350.3 650.7,350.0 651.7,350.2 652.7,350.3 653.7,350.4 654.7,350.3 655.7,350.4 656.7,350.0 657.7,350.6 658.7,350.6 659.7,349.9 660.7,350.3 661.7,350.3 662.7,349.9 663.7,350.5 664.7,350.0 665.7,350.2 666.7,349.9 667.7,350.5 668.8,350.2 669.8,347.1 670.8,350.2 671.8,350.4 672.8,349.9 673.8,350.0 674.8,350.8 675.8,350.3 676.8,350.1 677.8,349.4 678.8,350.2 679.8,349.7 680.8,349.8 681.8,349.9 682.8,349.7 683.8,349.9 684.8,350.4 685.8,350.1 686.8,350.4 687.8,350.4 688.8,350.1 689.8,350.2 690.8,349.9 691.8,350.7 692.8,350.4 693.8,349.4 694.8,350.4 695.8,348.0 696.8,350.6 697.8,350.9 698.8,350.4 699.8,349.8 700.8,346.2 701.8,349.8 702.8,349.9 703.8,350.5 704.8,350.6 705.8,348.6 706.8,350.5 707.8,350.2 708.8,349.9 709.8,350.0 710.8,350.1 711.8,350.5 712.8,345.5 713.8,350.1 714.8,350.0 715.8,350.2 716.8,349.7 717.8,350.4 718.8,350.2 719.8,350.1 720.8,350.1 721.8,350.3 722.8,350.2 723.8,350.5 724.8,350.6 725.8,350.5 726.8,350.0 727.8,351.0 728.8,350.2 729.8,350.3 730.8,349.7 731.8,350.4 732.8,349.6 733.8,350.0 734.8,350.2 735.8,349.4 736.8,350.0 737.8,350.5 738.8,350.0 739.8,350.7 740.8,350.2 741.8,350.2 742.8,350.3 743.8,349.6 744.8,350.0 745.8,350.2 746.8,349.9 747.8,350.2 748.8,350.6 749.8,349.8 750.8,350.0 751.8,350.7 752.8,349.7 753.8,349.7 754.8,350.4 755.8,350.2 756.8,350.3 757.8,350.1 758.8,350.3 759.8,349.9 760.8,350.1 761.8,350.3 762.8,349.6 763.8,350.3 764.8,350.5 765.8,350.2 766.8,350.4 767.8,350.3 768.8,350.0 769.8,349.9 770.8,350.0 771.8,350.1 772.8,350.1 773.8,350.1 774.8,350.0 775.8,349.8 776.8,350.2 777.8,349.5 778.8,349.8 779.8,349.7 780.8,349.6 781.8,350.0 782.8,349.8 783.8,349.7 784.8,350.2 785.8,350.2 786.8,350.6 787.8,350.7 788.8,350.0 789.8,349.9 790.8,346.7 791.8,350.3 792.8,350.0 793.8,349.8 794.8,350.6 795.8,350.0 796.8,348.1 797.9,350.0 798.9,350.0 799.9,349.5 800.9,349.9 801.9,349.8 802.9,349.9 803.9,349.9 804.9,349.9 805.9,350.8 806.9,350.1 807.9,350.2 808.9,347.6 809.9,350.0 810.9,349.9 811.9,349.8 812.9,349.7 813.9,350.4 814.9,350.3 815.9,349.7 816.9,349.9 817.9,350.0 818.9,349.8 819.9,350.2 820.9,350.0 821.9,350.6 822.9,350.3 823.9,349.4 824.9,350.4 825.9,350.0 826.9,349.9 827.9,349.8 828.9,350.6 829.9,350.2 830.9,350.3 831.9,350.5 832.9,349.9 833.9,349.5 834.9,349.9 835.9,350.5 836.9,350.4 837.9,346.6 838.9,350.2 839.9,350.3 840.9,350.0 841.9,350.1 842.9,350.3 843.9,350.1 844.9,350.4 845.9,350.0 846.9,349.8 847.9,349.8 848.9,349.0 849.9,349.5 850.9,350.2 851.9,349.6 852.9,350.5 853.9,350.7 854.9,350.2 855.9,349.8 856.9,349.5 857.9,350.0 858.9,350.4 859.9,349.9 860.9,350.2 861.9,349.9 862.9,350.3 863.9,349.8 864.9,350.5 865.9,350.3 866.9,350.2 867.9,350.0 868.9,350.2 869.9,350.0 870.9,350.3 871.9,350.6 872.9,349.4 873.9,350.2 874.9,349.6 875.9,350.2 876.9,349.3 877.9,349.4 878.9,350.0 879.9,350.1 880.9,350.3 881.9,349.9 882.9,349.5 883.9,349.7 884.9,349.9 885.9,349.9 886.9,350.1 887.9,349.9 888.9,350.2 889.9,350.4 890.9,350.5 891.9,349.8 892.9,350.3 893.9,350.2 894.9,349.2 895.9,350.2 896.9,350.2 897.9,350.2 898.9,350.1 899.9,350.1 900.9,350.4 901.9,349.2 902.9,350.0 903.9,349.8 904.9,349.4 905.9,350.1 906.9,350.2 907.9,350.3 908.9,350.2 909.9,350.0 910.9,350.9 911.9,350.5 912.9,349.7 913.9,350.4 914.9,349.7 915.9,350.2 916.9,349.8 917.9,350.0 918.9,350.0 919.9,350.4 920.9,350.6 921.9,350.2 922.9,350.1 923.9,350.2 924.9,349.5 926.0,350.2 927.0,350.4 928.0,350.0 929.0,350.1 930.0,350.4 931.0,350.7 932.0,349.9 933.0,350.5 934.0,350.1 935.0,350.0 936.0,350.3 937.0,349.7 938.0,349.6 939.0,350.5 940.0,350.1 941.0,350.0 942.0,350.1 943.0,350.1 944.0,345.8 945.0,350.2 946.0,350.4 947.0,349.7 948.0,350.0 949.0,350.0 950.0,349.9 951.0,350.1 952.0,350.5 953.0,350.1 954.0,350.7 955.0,349.8 956.0,350.0 957.0,350.5 958.0,349.9 959.0,351.2 960.0,350.7 961.0,349.9 962.0,350.8 963.0,350.2 964.0,350.0 965.0,349.9 966.0,350.7 967.0,350.3 968.0,350.0 969.0,349.4 970.0,350.2 971.0,350.8 972.0,350.7 973.0,349.9 974.0,350.4 975.0,350.1 976.0,350.4 977.0,349.8 978.0,350.0 979.0,350.7 980.0,350.0 981.0,349.8 982.0,350.5 983.0,350.4 984.0,350.1 985.0,350.2 986.0,350.3 987.0,350.6 988.0,350.2 989.0,349.9"/><polyline fill="none" stroke="#d8c943" stroke-width="0.8" stroke-linejoin="round" points="348.5,350.9 349.5,350.9 350.5,350.8 351.5,350.9 352.5,350.7 353.5,350.9 354.5,351.0 355.5,350.9 356.5,351.0 357.5,351.0 358.5,350.8 359.5,351.0 360.5,350.9 361.5,350.8 362.5,350.9 363.5,350.8 364.5,350.9 365.5,350.7 366.5,350.9 367.5,350.8 368.5,349.7 369.5,350.9 370.5,351.3 371.5,350.9 372.5,351.1 373.5,350.8 374.5,350.9 375.5,350.8 376.5,350.7 377.5,350.8 378.5,351.0 379.5,351.1 380.5,351.0 381.5,350.9 382.5,351.0 383.5,350.8 384.5,350.8 385.5,351.0 386.5,350.9 387.5,350.8 388.5,351.2 389.5,351.1 390.5,350.6 391.5,351.0 392.5,350.9 393.5,350.9 394.5,351.2 395.5,351.0 396.5,350.8 397.5,350.9 398.5,350.5 399.5,350.9 400.5,350.8 401.5,351.2 402.5,350.9 403.5,350.7 404.5,350.8 405.5,351.0 406.5,351.2 407.5,351.0 408.5,351.0 409.5,351.2 410.5,350.8 411.5,351.2 412.6,351.0 413.6,351.1 414.6,351.0 415.6,350.9 416.6,350.8 417.6,350.9 418.6,350.9 419.6,351.1 420.6,351.0 421.6,351.0 422.6,350.9 423.6,350.6 424.6,351.0 425.6,351.0 426.6,350.7 427.6,351.2 428.6,350.8 429.6,350.9 430.6,350.7 431.6,351.0 432.6,350.8 433.6,350.8 434.6,350.9 435.6,350.8 436.6,351.0 437.6,351.0 438.6,350.7 439.6,350.9 440.6,350.9 441.6,350.9 442.6,351.1 443.6,350.8 444.6,351.1 445.6,351.2 446.6,351.0 447.6,351.2 448.6,350.8 449.6,351.3 450.6,350.9 451.6,350.8 452.6,351.0 453.6,350.8 454.6,350.9 455.6,351.1 456.6,350.9 457.6,350.9 458.6,350.8 459.6,351.1 460.6,351.0 461.6,350.8 462.6,350.5 463.6,351.0 464.6,351.2 465.6,350.8 466.6,350.9 467.6,350.8 468.6,350.9 469.6,350.9 470.6,350.9 471.6,350.9 472.6,350.8 473.6,350.9 474.6,351.0 475.6,350.9 476.6,350.6 477.6,351.0 478.6,351.0 479.6,350.9 480.6,351.1 481.6,351.1 482.6,351.1 483.6,351.3 484.6,351.0 485.6,350.8 486.6,350.9 487.6,350.8 488.6,351.4 489.6,350.9 490.6,350.9 491.6,350.8 492.6,351.1 493.6,350.9 494.6,350.8 495.6,350.9 496.6,351.2 497.6,351.1 498.6,350.8 499.6,350.9 500.6,351.1 501.6,350.8 502.6,351.1 503.6,351.0 504.6,350.8 505.6,350.9 506.6,351.0 507.6,351.1 508.6,350.9 509.6,350.3 510.6,351.1 511.6,351.0 512.6,351.2 513.6,350.8 514.6,351.0 515.6,350.9 516.6,350.9 517.6,350.9 518.6,350.8 519.6,350.9 520.6,350.9 521.6,350.9 522.6,350.7 523.6,350.8 524.6,350.9 525.6,350.9 526.6,350.7 527.6,351.1 528.6,350.9 529.6,350.6 530.6,350.9 531.6,350.9 532.6,351.2 533.6,351.0 534.6,350.9 535.6,350.9 536.6,351.0 537.6,350.9 538.6,350.8 539.6,351.0 540.6,351.1 541.7,351.1 542.7,351.1 543.7,350.5 544.7,351.1 545.7,351.3 546.7,350.7 547.7,351.0 548.7,351.2 549.7,351.1 550.7,350.8 551.7,351.0 552.7,351.0 553.7,351.0 554.7,351.2 555.7,350.6 556.7,350.9 557.7,350.9 558.7,350.8 559.7,350.9 560.7,350.6 561.7,350.6 562.7,350.9 563.7,350.8 564.7,350.9 565.7,350.7 566.7,350.8 567.7,350.8 568.7,351.0 569.7,350.8 570.7,351.1 571.7,350.7 572.7,350.9 573.7,351.0 574.7,350.8 575.7,351.0 576.7,350.8 577.7,350.6 578.7,351.2 579.7,350.7 580.7,351.0 581.7,351.0 582.7,351.1 583.7,350.8 584.7,351.0 585.7,350.9 586.7,351.0 587.7,351.0 588.7,351.3 589.7,350.9 590.7,351.1 591.7,350.9 592.7,351.0 593.7,350.9 594.7,350.7 595.7,351.0 596.7,351.1 597.7,350.9 598.7,351.0 599.7,351.0 600.7,350.9 601.7,350.9 602.7,351.0 603.7,351.0 604.7,351.1 605.7,350.8 606.7,350.9 607.7,350.9 608.7,350.5 609.7,350.9 610.7,350.9 611.7,350.7 612.7,350.7 613.7,350.8 614.7,350.8 615.7,350.8 616.7,350.6 617.7,351.2 618.7,351.2 619.7,351.0 620.7,351.2 621.7,351.1 622.7,351.2 623.7,351.0 624.7,350.9 625.7,350.8 626.7,350.8 627.7,350.9 628.7,350.8 629.7,350.7 630.7,351.0 631.7,351.0 632.7,351.1 633.7,350.9 634.7,351.2 635.7,350.8 636.7,350.9 637.7,350.9 638.7,350.7 639.7,351.0 640.7,350.6 641.7,350.7 642.7,350.9 643.7,351.1 644.7,351.0 645.7,350.9 646.7,351.1 647.7,351.0 648.7,350.8 649.7,350.8 650.7,351.0 651.7,350.9 652.7,350.6 653.7,351.1 654.7,350.9 655.7,351.0 656.7,350.8 657.7,350.9 658.7,350.6 659.7,351.0 660.7,350.7 661.7,350.9 662.7,350.7 663.7,351.0 664.7,351.0 665.7,351.0 666.7,351.1 667.7,351.0 668.8,350.8 669.8,350.9 670.8,350.7 671.8,350.8 672.8,350.9 673.8,351.0 674.8,350.8 675.8,351.0 676.8,350.9 677.8,350.8 678.8,350.7 679.8,350.9 680.8,351.1 681.8,351.0 682.8,350.7 683.8,351.0 684.8,351.0 685.8,350.7 686.8,350.8 687.8,350.8 688.8,350.7 689.8,350.8 690.8,351.0 691.8,350.7 692.8,350.7 693.8,350.8 694.8,351.3 695.8,351.1 696.8,351.2 697.8,350.9 698.8,351.1 699.8,350.8 700.8,351.0 701.8,351.0 702.8,351.1 703.8,350.9 704.8,351.2 705.8,351.2 706.8,351.1 707.8,351.0 708.8,350.8 709.8,350.9 710.8,350.7 711.8,351.0 712.8,350.9 713.8,351.0 714.8,351.2 715.8,350.8 716.8,350.9 717.8,350.9 718.8,350.8 719.8,350.3 720.8,351.0 721.8,350.8 722.8,350.6 723.8,351.0 724.8,350.6 725.8,351.0 726.8,351.4 727.8,351.1 728.8,350.7 729.8,350.9 730.8,350.9 731.8,350.6 732.8,351.0 733.8,351.3 734.8,350.9 735.8,350.8 736.8,350.2 737.8,350.6 738.8,350.8 739.8,350.7 740.8,350.7 741.8,350.6 742.8,350.8 743.8,350.8 744.8,350.8 745.8,350.9 746.8,350.8 747.8,350.9 748.8,350.9 749.8,350.8 750.8,351.1 751.8,350.8 752.8,351.0 753.8,350.8 754.8,350.8 755.8,350.8 756.8,350.7 757.8,351.0 758.8,350.8 759.8,350.6 760.8,350.9 761.8,351.0 762.8,350.7 763.8,350.7 764.8,350.8 765.8,350.8 766.8,350.9 767.8,351.0 768.8,350.7 769.8,350.8 770.8,350.7 771.8,351.1 772.8,351.0 773.8,350.8 774.8,351.2 775.8,350.8 776.8,350.8 777.8,351.0 778.8,351.2 779.8,350.9 780.8,350.9 781.8,351.1 782.8,351.1 783.8,350.6 784.8,350.9 785.8,351.2 786.8,350.6 787.8,351.0 788.8,350.7 789.8,350.7 790.8,350.8 791.8,350.8 792.8,350.5 793.8,351.2 794.8,351.1 795.8,350.9 796.8,350.6 797.9,351.0 798.9,351.0 799.9,350.9 800.9,350.9 801.9,350.9 802.9,350.8 803.9,350.9 804.9,350.9 805.9,350.7 806.9,351.0 807.9,350.9 808.9,351.1 809.9,351.0 810.9,350.9 811.9,351.2 812.9,350.7 813.9,350.7 814.9,350.6 815.9,350.8 816.9,351.0 817.9,351.3 818.9,351.0 819.9,351.1 820.9,350.9 821.9,350.9 822.9,350.8 823.9,351.0 824.9,350.7 825.9,350.8 826.9,350.8 827.9,350.6 828.9,350.7 829.9,350.6 830.9,351.1 831.9,351.0 832.9,350.7 833.9,350.9 834.9,350.6 835.9,350.9 836.9,350.8 837.9,351.1 838.9,350.9 839.9,351.2 840.9,350.9 841.9,351.0 842.9,350.9 843.9,350.6 844.9,351.2 845.9,350.6 846.9,351.0 847.9,350.9 848.9,350.9 849.9,351.1 850.9,351.1 851.9,351.0 852.9,350.8 853.9,351.2 854.9,350.9 855.9,351.2 856.9,351.0 857.9,350.9 858.9,351.1 859.9,350.7 860.9,350.9 861.9,350.9 862.9,351.1 863.9,351.2 864.9,350.7 865.9,350.9 866.9,351.0 867.9,350.7 868.9,351.0 869.9,351.0 870.9,351.0 871.9,351.0 872.9,350.6 873.9,350.8 874.9,350.6 875.9,350.9 876.9,351.3 877.9,351.0 878.9,350.9 879.9,350.7 880.9,350.7 881.9,351.0 882.9,350.8 883.9,350.8 884.9,351.0 885.9,350.9 886.9,351.0 887.9,350.9 888.9,351.0 889.9,350.8 890.9,351.0 891.9,351.1 892.9,351.0 893.9,350.9 894.9,351.0 895.9,351.1 896.9,350.9 897.9,351.1 898.9,351.1 899.9,351.1 900.9,350.8 901.9,351.1 902.9,350.8 903.9,351.0 904.9,350.8 905.9,350.9 906.9,350.9 907.9,351.0 908.9,350.8 909.9,350.7 910.9,350.9 911.9,351.0 912.9,350.5 913.9,350.8 914.9,351.1 915.9,350.9 916.9,350.8 917.9,351.1 918.9,350.8 919.9,350.7 920.9,350.8 921.9,350.8 922.9,350.8 923.9,350.7 924.9,351.0 926.0,351.0 927.0,350.9 928.0,350.9 929.0,350.9 930.0,350.9 931.0,350.9 932.0,350.9 933.0,351.0 934.0,350.8 935.0,350.7 936.0,350.8 937.0,350.8 938.0,350.8 939.0,351.1 940.0,350.8 941.0,350.7 942.0,350.7 943.0,351.1 944.0,350.7 945.0,351.3 946.0,351.0 947.0,351.1 948.0,350.8 949.0,350.7 950.0,350.9 951.0,350.5 952.0,350.9 953.0,350.6 954.0,351.0 955.0,351.1 956.0,351.2 957.0,351.1 958.0,350.8 959.0,350.9 960.0,350.6 961.0,350.7 962.0,350.9 963.0,351.0 964.0,350.9 965.0,351.1 966.0,350.8 967.0,350.9 968.0,351.0 969.0,350.9 970.0,350.8 971.0,350.8 972.0,351.0 973.0,351.1 974.0,350.7 975.0,351.1 976.0,351.1 977.0,351.0 978.0,350.9 979.0,350.8 980.0,350.9 981.0,351.1 982.0,350.9 983.0,350.7 984.0,350.9 985.0,351.0 986.0,350.7 987.0,351.2 988.0,350.8 989.0,351.0"/><polyline fill="none" stroke="#4fa8b8" stroke-width="0.8" stroke-linejoin="round" points="348.5,351.4 349.5,351.1 350.5,351.0 351.5,351.1 352.5,351.2 353.5,351.1 354.5,351.3 355.5,351.2 356.5,351.3 357.5,351.3 358.5,351.4 359.5,351.4 360.5,351.2 361.5,351.2 362.5,351.2 363.5,351.1 364.5,351.3 365.5,351.2 366.5,351.2 367.5,351.4 368.5,351.2 369.5,351.2 370.5,351.1 371.5,351.2 372.5,351.3 373.5,351.2 374.5,351.3 375.5,351.4 376.5,351.1 377.5,351.3 378.5,351.4 379.5,351.3 380.5,351.4 381.5,351.3 382.5,351.2 383.5,351.3 384.5,351.1 385.5,351.5 386.5,351.4 387.5,351.2 388.5,351.2 389.5,351.2 390.5,351.2 391.5,351.2 392.5,351.3 393.5,351.2 394.5,351.2 395.5,351.2 396.5,351.2 397.5,351.1 398.5,351.4 399.5,351.2 400.5,351.2 401.5,351.2 402.5,351.2 403.5,351.2 404.5,351.3 405.5,351.1 406.5,351.2 407.5,351.1 408.5,351.4 409.5,351.4 410.5,351.3 411.5,351.3 412.6,351.4 413.6,351.3 414.6,351.3 415.6,351.3 416.6,351.3 417.6,351.5 418.6,351.4 419.6,351.2 420.6,351.2 421.6,351.3 422.6,351.2 423.6,351.2 424.6,351.1 425.6,351.2 426.6,351.4 427.6,351.2 428.6,351.5 429.6,351.4 430.6,351.3 431.6,351.4 432.6,351.4 433.6,351.3 434.6,351.3 435.6,351.2 436.6,351.4 437.6,351.5 438.6,351.3 439.6,351.4 440.6,351.0 441.6,351.4 442.6,351.2 443.6,351.4 444.6,351.2 445.6,351.3 446.6,351.3 447.6,351.4 448.6,351.2 449.6,351.3 450.6,351.3 451.6,351.2 452.6,351.3 453.6,351.3 454.6,351.4 455.6,351.0 456.6,351.2 457.6,351.2 458.6,351.1 459.6,351.2 460.6,351.2 461.6,351.1 462.6,351.1 463.6,351.3 464.6,351.2 465.6,351.3 466.6,351.3 467.6,351.3 468.6,351.3 469.6,351.2 470.6,351.3 471.6,351.3 472.6,351.2 473.6,351.2 474.6,351.0 475.6,351.2 476.6,351.3 477.6,351.1 478.6,351.3 479.6,351.4 480.6,351.3 481.6,351.3 482.6,351.3 483.6,351.1 484.6,351.3 485.6,351.4 486.6,351.3 487.6,351.1 488.6,351.2 489.6,351.1 490.6,351.3 491.6,351.2 492.6,351.4 493.6,351.2 494.6,351.4 495.6,351.4 496.6,351.4 497.6,351.2 498.6,351.2 499.6,351.1 500.6,351.2 501.6,351.3 502.6,351.1 503.6,351.2 504.6,351.2 505.6,351.1 506.6,351.3 507.6,351.2 508.6,351.1 509.6,351.2 510.6,351.3 511.6,351.4 512.6,351.1 513.6,351.3 514.6,351.1 515.6,351.3 516.6,351.2 517.6,351.3 518.6,351.1 519.6,351.3 520.6,351.2 521.6,351.2 522.6,351.1 523.6,351.3 524.6,351.4 525.6,351.2 526.6,351.2 527.6,351.3 528.6,351.3 529.6,351.2 530.6,351.1 531.6,351.2 532.6,351.0 533.6,351.3 534.6,351.3 535.6,351.1 536.6,351.2 537.6,351.4 538.6,351.2 539.6,351.3 540.6,351.3 541.7,351.0 542.7,351.3 543.7,351.3 544.7,351.2 545.7,351.0 546.7,351.2 547.7,351.2 548.7,351.3 549.7,351.3 550.7,351.2 551.7,351.3 552.7,351.2 553.7,351.3 554.7,351.2 555.7,351.3 556.7,351.2 557.7,351.2 558.7,351.2 559.7,351.2 560.7,351.3 561.7,351.3 562.7,351.3 563.7,351.4 564.7,351.2 565.7,351.3 566.7,351.4 567.7,351.2 568.7,351.2 569.7,351.3 570.7,351.3 571.7,351.3 572.7,351.1 573.7,351.1 574.7,351.3 575.7,351.0 576.7,351.4 577.7,351.2 578.7,351.2 579.7,351.1 580.7,351.2 581.7,351.1 582.7,351.2 583.7,351.4 584.7,351.1 585.7,351.2 586.7,351.2 587.7,351.3 588.7,351.3 589.7,351.0 590.7,351.3 591.7,351.3 592.7,351.3 593.7,351.2 594.7,351.3 595.7,351.4 596.7,351.3 597.7,351.4 598.7,351.2 599.7,351.4 600.7,351.3 601.7,351.1 602.7,351.2 603.7,351.2 604.7,351.3 605.7,351.1 606.7,351.3 607.7,351.2 608.7,351.1 609.7,351.0 610.7,351.1 611.7,351.2 612.7,351.1 613.7,351.3 614.7,351.2 615.7,351.3 616.7,351.3 617.7,351.3 618.7,351.0 619.7,351.3 620.7,351.5 621.7,351.4 622.7,350.9 623.7,351.1 624.7,351.2 625.7,351.3 626.7,351.2 627.7,351.4 628.7,351.3 629.7,351.3 630.7,351.1 631.7,351.4 632.7,351.2 633.7,351.0 634.7,351.1 635.7,351.2 636.7,351.3 637.7,351.1 638.7,351.1 639.7,351.0 640.7,351.3 641.7,351.3 642.7,351.3 643.7,351.2 644.7,351.1 645.7,351.2 646.7,351.5 647.7,351.3 648.7,351.2 649.7,351.1 650.7,351.3 651.7,351.3 652.7,351.2 653.7,351.2 654.7,351.2 655.7,351.2 656.7,351.2 657.7,351.1 658.7,351.1 659.7,351.2 660.7,351.4 661.7,351.3 662.7,351.3 663.7,351.1 664.7,350.6 665.7,351.1 666.7,351.2 667.7,351.3 668.8,351.1 669.8,351.2 670.8,351.2 671.8,351.4 672.8,351.1 673.8,351.3 674.8,351.2 675.8,351.3 676.8,351.3 677.8,351.4 678.8,351.2 679.8,351.2 680.8,351.2 681.8,351.2 682.8,351.2 683.8,351.4 684.8,351.2 685.8,351.2 686.8,351.1 687.8,351.2 688.8,351.4 689.8,351.2 690.8,351.3 691.8,351.3 692.8,351.3 693.8,351.4 694.8,351.2 695.8,351.4 696.8,351.4 697.8,351.1 698.8,351.0 699.8,351.2 700.8,351.1 701.8,351.4 702.8,351.3 703.8,351.3 704.8,351.3 705.8,351.2 706.8,351.4 707.8,351.2 708.8,351.2 709.8,351.2 710.8,351.2 711.8,351.2 712.8,351.5 713.8,351.2 714.8,351.3 715.8,351.1 716.8,351.3 717.8,351.3 718.8,351.2 719.8,351.1 720.8,351.3 721.8,351.3 722.8,351.3 723.8,351.2 724.8,351.2 725.8,351.2 726.8,351.5 727.8,351.2 728.8,351.2 729.8,351.2 730.8,351.0 731.8,351.2 732.8,351.2 733.8,351.2 734.8,351.5 735.8,351.4 736.8,351.1 737.8,351.2 738.8,351.4 739.8,351.5 740.8,351.5 741.8,351.5 742.8,351.2 743.8,351.2 744.8,351.3 745.8,351.2 746.8,351.3 747.8,351.3 748.8,351.1 749.8,351.1 750.8,351.4 751.8,351.4 752.8,351.1 753.8,351.2 754.8,351.2 755.8,351.2 756.8,351.1 757.8,351.2 758.8,351.0 759.8,351.4 760.8,351.0 761.8,351.1 762.8,351.3 763.8,351.2 764.8,351.0 765.8,351.3 766.8,351.1 767.8,351.2 768.8,351.3 769.8,351.5 770.8,351.2 771.8,351.0 772.8,351.0 773.8,351.3 774.8,351.5 775.8,351.2 776.8,351.2 777.8,351.2 778.8,351.1 779.8,351.3 780.8,351.2 781.8,351.4 782.8,351.1 783.8,351.2 784.8,351.2 785.8,351.3 786.8,351.2 787.8,351.1 788.8,351.4 789.8,351.0 790.8,351.1 791.8,351.2 792.8,351.3 793.8,351.4 794.8,351.1 795.8,351.2 796.8,351.2 797.9,351.2 798.9,351.3 799.9,351.1 800.9,351.2 801.9,351.5 802.9,351.2 803.9,351.1 804.9,351.1 805.9,351.2 806.9,351.1 807.9,351.3 808.9,351.2 809.9,350.9 810.9,351.3 811.9,350.9 812.9,351.2 813.9,351.3 814.9,351.3 815.9,351.2 816.9,351.1 817.9,351.1 818.9,351.3 819.9,351.3 820.9,351.4 821.9,351.2 822.9,351.1 823.9,351.1 824.9,351.3 825.9,351.3 826.9,351.4 827.9,351.4 828.9,351.4 829.9,351.3 830.9,351.1 831.9,351.2 832.9,351.5 833.9,351.4 834.9,351.2 835.9,351.2 836.9,351.2 837.9,351.4 838.9,351.1 839.9,351.1 840.9,351.2 841.9,351.3 842.9,351.4 843.9,351.2 844.9,351.3 845.9,351.3 846.9,351.3 847.9,351.3 848.9,351.2 849.9,351.2 850.9,351.2 851.9,351.5 852.9,351.2 853.9,351.2 854.9,351.3 855.9,351.3 856.9,351.3 857.9,351.0 858.9,351.3 859.9,351.4 860.9,351.2 861.9,351.4 862.9,351.3 863.9,351.2 864.9,351.1 865.9,351.1 866.9,351.2 867.9,351.0 868.9,351.2 869.9,351.3 870.9,351.2 871.9,351.2 872.9,351.4 873.9,351.2 874.9,351.2 875.9,351.2 876.9,351.2 877.9,351.4 878.9,351.3 879.9,351.5 880.9,351.2 881.9,351.0 882.9,351.2 883.9,351.2 884.9,351.4 885.9,351.3 886.9,351.2 887.9,351.3 888.9,351.2 889.9,351.1 890.9,351.3 891.9,351.1 892.9,351.3 893.9,351.1 894.9,351.3 895.9,351.3 896.9,351.4 897.9,351.3 898.9,351.2 899.9,351.3 900.9,351.2 901.9,351.3 902.9,351.2 903.9,351.3 904.9,351.4 905.9,351.2 906.9,351.4 907.9,351.3 908.9,351.2 909.9,351.2 910.9,351.3 911.9,351.2 912.9,351.1 913.9,351.4 914.9,351.3 915.9,351.3 916.9,351.3 917.9,351.2 918.9,351.4 919.9,351.3 920.9,351.5 921.9,351.1 922.9,351.3 923.9,351.1 924.9,351.1 926.0,351.3 927.0,351.3 928.0,351.2 929.0,351.2 930.0,351.3 931.0,351.3 932.0,351.4 933.0,351.0 934.0,351.2 935.0,351.2 936.0,351.3 937.0,351.4 938.0,351.2 939.0,351.2 940.0,351.1 941.0,351.2 942.0,351.3 943.0,351.2 944.0,351.2 945.0,351.0 946.0,351.3 947.0,351.1 948.0,351.1 949.0,351.3 950.0,351.4 951.0,351.1 952.0,351.4 953.0,351.4 954.0,351.3 955.0,351.3 956.0,351.1 957.0,351.4 958.0,351.4 959.0,351.3 960.0,351.5 961.0,351.5 962.0,351.2 963.0,351.3 964.0,351.2 965.0,351.1 966.0,351.4 967.0,351.1 968.0,351.3 969.0,351.4 970.0,351.4 971.0,351.3 972.0,351.4 973.0,351.2 974.0,351.4 975.0,351.3 976.0,351.1 977.0,351.1 978.0,351.3 979.0,351.2 980.0,351.3 981.0,351.2 982.0,351.4 983.0,351.2 984.0,351.2 985.0,351.3 986.0,351.3 987.0,351.3 988.0,351.1 989.0,351.5"/>
<circle cx="474" cy="335" r="2.4" fill="#f1f1f1" stroke="#ef7f90" stroke-width="0.9"/>
</svg>
<div class="yl" style="left:321.5px;top:209.2px">0ms</div>
<div class="yl" style="left:321.5px;top:347.0px">0ms</div>
<div class="yl" style="left:321.5px;top:182.4px">5ms</div>
<div class="yl" style="left:321.5px;top:319.3px">5ms</div>
<div class="yl" style="left:321.5px;top:155.6px">10ms</div>
<div class="yl" style="left:321.5px;top:291.6px">10ms</div>
<div class="yl" style="left:321.5px;top:128.8px">15ms</div>
<div class="yl" style="left:321.5px;top:263.9px">15ms</div>
<div class="xl" style="left:370.5px;top:218px">12 AM</div>
<div class="xl" style="left:370.5px;top:356.3px">11 PM</div>
<div class="xl" style="left:423.9px;top:218px">01 AM</div>
<div class="xl" style="left:423.9px;top:356.3px">May 12</div>
<div class="xl" style="left:477.2px;top:218px">02 AM</div>
<div class="xl" style="left:477.2px;top:356.3px">01 AM</div>
<div class="xl" style="left:530.5px;top:218px">03 AM</div>
<div class="xl" style="left:530.5px;top:356.3px">02 AM</div>
<div class="xl" style="left:583.9px;top:218px">04 AM</div>
<div class="xl" style="left:583.9px;top:356.3px">03 AM</div>
<div class="xl" style="left:637.2px;top:218px">05 AM</div>
<div class="xl" style="left:637.2px;top:356.3px">04 AM</div>
<div class="xl" style="left:690.6px;top:218px">06 AM</div>
<div class="xl" style="left:690.6px;top:356.3px">05 AM</div>
<div class="xl" style="left:743.9px;top:218px">07 AM</div>
<div class="xl" style="left:743.9px;top:356.3px">06 AM</div>
<div class="xl" style="left:797.3px;top:218px">08 AM</div>
<div class="xl" style="left:797.3px;top:356.3px">07 AM</div>
<div class="xl" style="left:850.6px;top:218px">09 AM</div>
<div class="xl" style="left:850.6px;top:356.3px">08 AM</div>
<div class="xl" style="left:904.0px;top:218px">10 AM</div>
<div class="xl" style="left:904.0px;top:356.3px">09 AM</div>
<div class="xl" style="left:962.8px;top:218px">11 AM</div>
<div class="xl" style="left:962.8px;top:356.3px">10 AM</div>
<svg class="a" style="left:327px;top:247.4px" width="20" height="12" viewBox="0 0 20 12"><circle cx="4.8" cy="6" r="4.5" fill="none" stroke="#2aabb6" stroke-width="1.2"/><path fill="none" stroke="#2aabb6" stroke-width="1" d="M4.8 3.2V6.2L6.8 7.4"/><path fill="none" stroke="#2aabb6" stroke-width="1.2" d="M10.4 2.6A4.5 4.5 0 1 1 10.4 9.4"/><path fill="none" stroke="#2aabb6" stroke-width="1" d="M13.5 3.2V6.2L15.4 7.4"/></svg>
<div class="a" style="left:351.5px;top:247.6px;font-size:9.5px;color:#444;letter-spacing:-0.2px">Compare time ranges</div>
<div class="a" style="left:444.5px;top:247.6px;font-size:9.5px;color:#333;font-weight:bold;letter-spacing:-0.3px">1 hour</div>
<svg class="a" style="left:476.8px;top:251.6px" width="7" height="5" viewBox="0 0 7 5"><path fill="none" stroke="#3bb3c0" stroke-width="1.1" d="M0.7 0.8L3.5 3.7L6.3 0.8"/></svg>
<div class="a" style="left:313.2px;top:379.3px;width:679.8px;height:33.3px;background:#f5f5f5"></div>
<div class="a" style="left:320px;top:389.5px;font-size:10.5px;color:#5e5e5e;letter-spacing:-0.2px">Queries</div>
<div class="a" style="left:700px;top:389.5px;font-size:10.5px;color:#5e5e5e;letter-spacing:-0.2px">Warnings</div>
<div class="a" style="left:825px;top:379.3px;width:96.3px;height:33.3px;background:#2bafb9"></div>
<div class="a" style="left:825px;top:412.6px;width:96.3px;height:228px;background:#e9f6f8"></div>
<div class="a" style="left:832px;top:389.8px;font-size:10.8px;color:#fff;letter-spacing:-0.2px">Total Time</div>
<div class="a" style="left:928.5px;top:389.5px;font-size:10.5px;color:#5e5e5e;letter-spacing:-0.2px">Action</div>
<div class="a" style="left:319.6px;top:417.5px;width:11.4px;height:11.4px;border-radius:50%;background:#ed5565"></div>
<div class="q" style="top:417.5px">select * from guest_book order by time desc</div>
<div class="t1" style="top:415.1px">selected time range</div>
<div class="t2" style="top:431.3px">1 hour before</div>
<div class="n" style="left:780px;width:31px;top:416.8px;color:#333">0</div>
<div class="n" style="left:780px;width:31px;top:433.3px;color:#999">0</div>
<div class="n" style="left:840px;width:68px;top:416.8px;color:#333">561802333</div>
<div class="n" style="left:840px;width:68px;top:433.3px;color:#a8a8a8">562492320</div>
<div class="a" style="left:928px;top:423.6px;font-size:8.8px;color:#666;letter-spacing:-0.1px">query</div>
<div class="a" style="left:313.5px;top:445.9px;width:679.5px;height:1px;background:#e9e9e9"></div>
<div class="a" style="left:319.6px;top:451.6px;width:11.4px;height:11.4px;border-radius:50%;background:#4a90d9"></div>
<div class="q" style="top:451.6px">show /*!? global*/ status</div>
<div class="t1" style="top:449.2px">selected time range</div>
<div class="t2" style="top:465.4px">1 hour before</div>
<div class="n" style="left:780px;width:31px;top:450.9px;color:#333">0</div>
<div class="n" style="left:780px;width:31px;top:467.4px;color:#999">0</div>
<div class="n" style="left:840px;width:68px;top:450.9px;color:#333">92157097</div>
<div class="n" style="left:840px;width:68px;top:467.4px;color:#a8a8a8">92518475</div>
<div class="a" style="left:928px;top:457.7px;font-size:8.8px;color:#666;letter-spacing:-0.1px">query</div>
<div class="a" style="left:313.5px;top:480.0px;width:679.5px;height:1px;background:#e9e9e9"></div>
<div class="a" style="left:319.6px;top:485.7px;width:11.4px;height:11.4px;border-radius:50%;background:#f9a75c"></div>
<div class="q" style="top:485.7px">select name, count, type from<br>information_schema.innodb_metrics where status=?</div>
<div class="t1" style="top:483.3px">selected time range</div>
<div class="t2" style="top:499.5px">1 hour before</div>
<div class="n" style="left:780px;width:31px;top:485.0px;color:#333">0</div>
<div class="n" style="left:780px;width:31px;top:501.5px;color:#999">0</div>
<div class="n" style="left:840px;width:68px;top:485.0px;color:#333">82002124</div>
<div class="n" style="left:840px;width:68px;top:501.5px;color:#a8a8a8">82303120</div>
<div class="a" style="left:928px;top:491.8px;font-size:8.8px;color:#666;letter-spacing:-0.1px">query</div>
<div class="a" style="left:313.5px;top:514.2px;width:679.5px;height:1px;background:#e9e9e9"></div>
<div class="a" style="left:319.6px;top:519.9px;width:11.4px;height:11.4px;border-radius:50%;background:#6cc06a"></div>
<div class="q" style="top:519.9px">select table_name from information_schema.tables where<br>table_schema=?</div>
<div class="t1" style="top:517.5px">selected time range</div>
<div class="t2" style="top:533.7px">1 hour before</div>
<div class="n" style="left:780px;width:31px;top:519.2px;color:#333">0</div>
<div class="n" style="left:780px;width:31px;top:535.7px;color:#999">0</div>
<div class="n" style="left:840px;width:68px;top:519.2px;color:#333">47241654</div>
<div class="n" style="left:840px;width:68px;top:535.7px;color:#a8a8a8">47341457</div>
<div class="a" style="left:928px;top:526.0px;font-size:8.8px;color:#666;letter-spacing:-0.1px">query</div>
<div class="a" style="left:313.5px;top:548.3px;width:679.5px;height:1px;background:#e9e9e9"></div>
<div class="a" style="left:319.6px;top:554.0px;width:11.4px;height:11.4px;border-radius:50%;background:#a566bd"></div>
<div class="q" style="top:554.0px">select table_schema, table_name, data_length, index_length,<br>data_free, table_rows from information_schema.tables wher...</div>
<div class="t1" style="top:551.6px">selected time range</div>
<div class="t2" style="top:567.8px">1 hour before</div>
<div class="n" style="left:780px;width:31px;top:553.3px;color:#333">0</div>
<div class="n" style="left:780px;width:31px;top:569.8px;color:#999">0</div>
<div class="n" style="left:840px;width:68px;top:553.3px;color:#333">35535472</div>
<div class="n" style="left:840px;width:68px;top:569.8px;color:#a8a8a8">35474545</div>
<div class="a" style="left:928px;top:560.1px;font-size:8.8px;color:#666;letter-spacing:-0.1px">query</div>
<div class="a" style="left:313.5px;top:582.4px;width:679.5px;height:1px;background:#e9e9e9"></div>
<div class="a" style="left:319.6px;top:588.1px;width:11.4px;height:11.4px;border-radius:50%;background:#d17660"></div>
<div class="q" style="top:588.1px">select processlist_id, processlist_user, processlist_host,<br>processlist_db, processlist_command, processlist_time,...</div>
<div class="t1" style="top:585.7px">selected time range</div>
<div class="t2" style="top:601.9px">1 hour before</div>
<div class="n" style="left:780px;width:31px;top:587.4px;color:#333">0</div>
<div class="n" style="left:780px;width:31px;top:603.9px;color:#999">0</div>
<div class="n" style="left:840px;width:68px;top:587.4px;color:#333">25475962</div>
<div class="n" style="left:840px;width:68px;top:603.9px;color:#a8a8a8">25440993</div>
<div class="a" style="left:928px;top:594.2px;font-size:8.8px;color:#666;letter-spacing:-0.1px">execute</div>
<div class="a" style="left:313.5px;top:616.5px;width:679.5px;height:1px;background:#e9e9e9"></div>
<div class="a" style="left:319.6px;top:622.2px;width:11.4px;height:11.4px;border-radius:50%;background:#58d3bb"></div>
<div class="q" style="top:622.2px">select substring(event_name,?) as e, count_star,<br>sum_timer_wait/? as wait_us from...</div>
<div class="t1" style="top:619.8px">selected time range</div>
<div class="t2" style="top:636.0px">1 hour before</div>
<div class="n" style="left:780px;width:31px;top:621.5px;color:#333">0</div>
<div class="n" style="left:780px;width:31px;top:638.0px;color:#999">0</div>
<div class="n" style="left:840px;width:68px;top:621.5px;color:#333">24540692</div>
<div class="n" style="left:840px;width:68px;top:638.0px;color:#a8a8a8">24478808</div>
<div class="a" style="left:928px;top:628.3px;font-size:8.8px;color:#666;letter-spacing:-0.1px">query</div>
<div class="a" style="left:479.2px;top:266.3px;width:99.8px;height:33px;background:rgba(50,57,60,0.95);border-radius:2px 2px 0 0"></div>
<div class="a" style="left:479.2px;top:298.7px;width:338.8px;height:159.3px;background:rgba(50,57,60,0.95);border-radius:0 2px 2px 2px"></div>
<div class="tt" style="left:493px;top:273.3px;line-height:9.4px;font-size:8.4px">May 12, 2020<br>12:34:00 AM CDT</div>
<div class="a" style="left:489.3px;top:309.7px;width:6.8px;height:6.8px;background:#f0686f"></div>
<div class="tt" style="left:503px;top:308.8px">select * from guest_book order by time desc</div>
<div class="tt" style="left:740px;width:68.3px;text-align:right;top:308.8px">3.06ms</div>
<div class="a" style="left:489.3px;top:324.3px;width:6.8px;height:6.8px;background:#5b9fdb"></div>
<div class="tt" style="left:503px;top:323.4px">show /*!? global*/ status</div>
<div class="tt" style="left:740px;width:68.3px;text-align:right;top:323.4px">1.89ms</div>
<div class="a" style="left:489.3px;top:338.9px;width:6.8px;height:6.8px;background:#f6ab62"></div>
<div class="tt" style="left:503px;top:338.0px">select name, count, type from information_schema.inno…</div>
<div class="tt" style="left:740px;width:68.3px;text-align:right;top:338.0px">1.74ms</div>
<div class="a" style="left:489.3px;top:353.6px;width:6.8px;height:6.8px;background:#7cc576"></div>
<div class="tt" style="left:503px;top:352.7px">select table_name from information_schema.tables wher…</div>
<div class="tt" style="left:740px;width:68.3px;text-align:right;top:352.7px">1.05ms</div>
<div class="a" style="left:489.3px;top:368.2px;width:6.8px;height:6.8px;background:#a968b8"></div>
<div class="tt" style="left:503px;top:367.3px">select table_schema, table_name, data_length, index_l…</div>
<div class="tt" style="left:740px;width:68.3px;text-align:right;top:367.3px">1.16ms</div>
<div class="a" style="left:489.3px;top:382.8px;width:6.8px;height:6.8px;background:#dc8068"></div>
<div class="tt" style="left:503px;top:381.9px">select processlist_id, processlist_user, processlist_…</div>
<div class="tt" style="left:740px;width:68.3px;text-align:right;top:381.9px">554.6µs</div>
<div class="a" style="left:489.3px;top:397.4px;width:6.8px;height:6.8px;background:#6fdcc8"></div>
<div class="tt" style="left:503px;top:396.5px">select substring(event_name,?) as e, count_star, sum_…</div>
<div class="tt" style="left:740px;width:68.3px;text-align:right;top:396.5px">542.6µs</div>
<div class="a" style="left:489.3px;top:412.0px;width:6.8px;height:6.8px;background:#e99ccd"></div>
<div class="tt" style="left:503px;top:411.1px">select schema_name from information_schema.schemata w…</div>
<div class="tt" style="left:740px;width:68.3px;text-align:right;top:411.1px">278.38µs</div>
<div class="a" style="left:489.3px;top:426.7px;width:6.8px;height:6.8px;background:#ddd058"></div>
<div class="tt" style="left:503px;top:425.8px">show /*!? global*/ variables</div>
<div class="tt" style="left:740px;width:68.3px;text-align:right;top:425.8px">158.13µs</div>
<div class="a" style="left:489.3px;top:441.3px;width:6.8px;height:6.8px;background:#62b0bd"></div>
<div class="tt" style="left:503px;top:440.4px">select thread_id, ip, port from performance_schema.so…</div>
<div class="tt" style="left:740px;width:68.3px;text-align:right;top:440.4px">101.82µs</div>
<div class="a" style="left:959.2px;top:586.5px;width:40px;height:40px;border-radius:50%;background:#f99d1c;box-shadow:0 1px 5px rgba(0,0,0,0.18)"></div>
<svg class="a" style="left:968px;top:594px" width="24" height="26" viewBox="0 0 24 26"><path fill="#fff" d="M4 2h14.8a2 2 0 0 1 2 2v19.2l-5.2-2.2h-11.6a2 2 0 0 1-2-2v-15a2 2 0 0 1 2-2z"/><path fill="none" stroke="#f99d1c" stroke-width="1.3" stroke-linecap="round" d="M4.8 15.4c3.2 3.6 9.5 3.6 12.7 0"/></svg>
<div class="a" style="left:1013px;top:0;width:11px;height:640px;background:#f1f1f1"></div>
<div class="a" style="left:1014px;top:11px;width:9px;height:286.5px;background:#c1c1c1"></div>
<div class="a" style="left:1015.5px;top:4px;width:0;height:0;border-left:3px solid transparent;border-right:3px solid transparent;border-bottom:3.5px solid #a3a3a3"></div>
<div class="a" style="left:1015.5px;top:632.5px;width:0;height:0;border-left:3px solid transparent;border-right:3px solid transparent;border-top:3.5px solid #505050"></div>
</div></body></html>
